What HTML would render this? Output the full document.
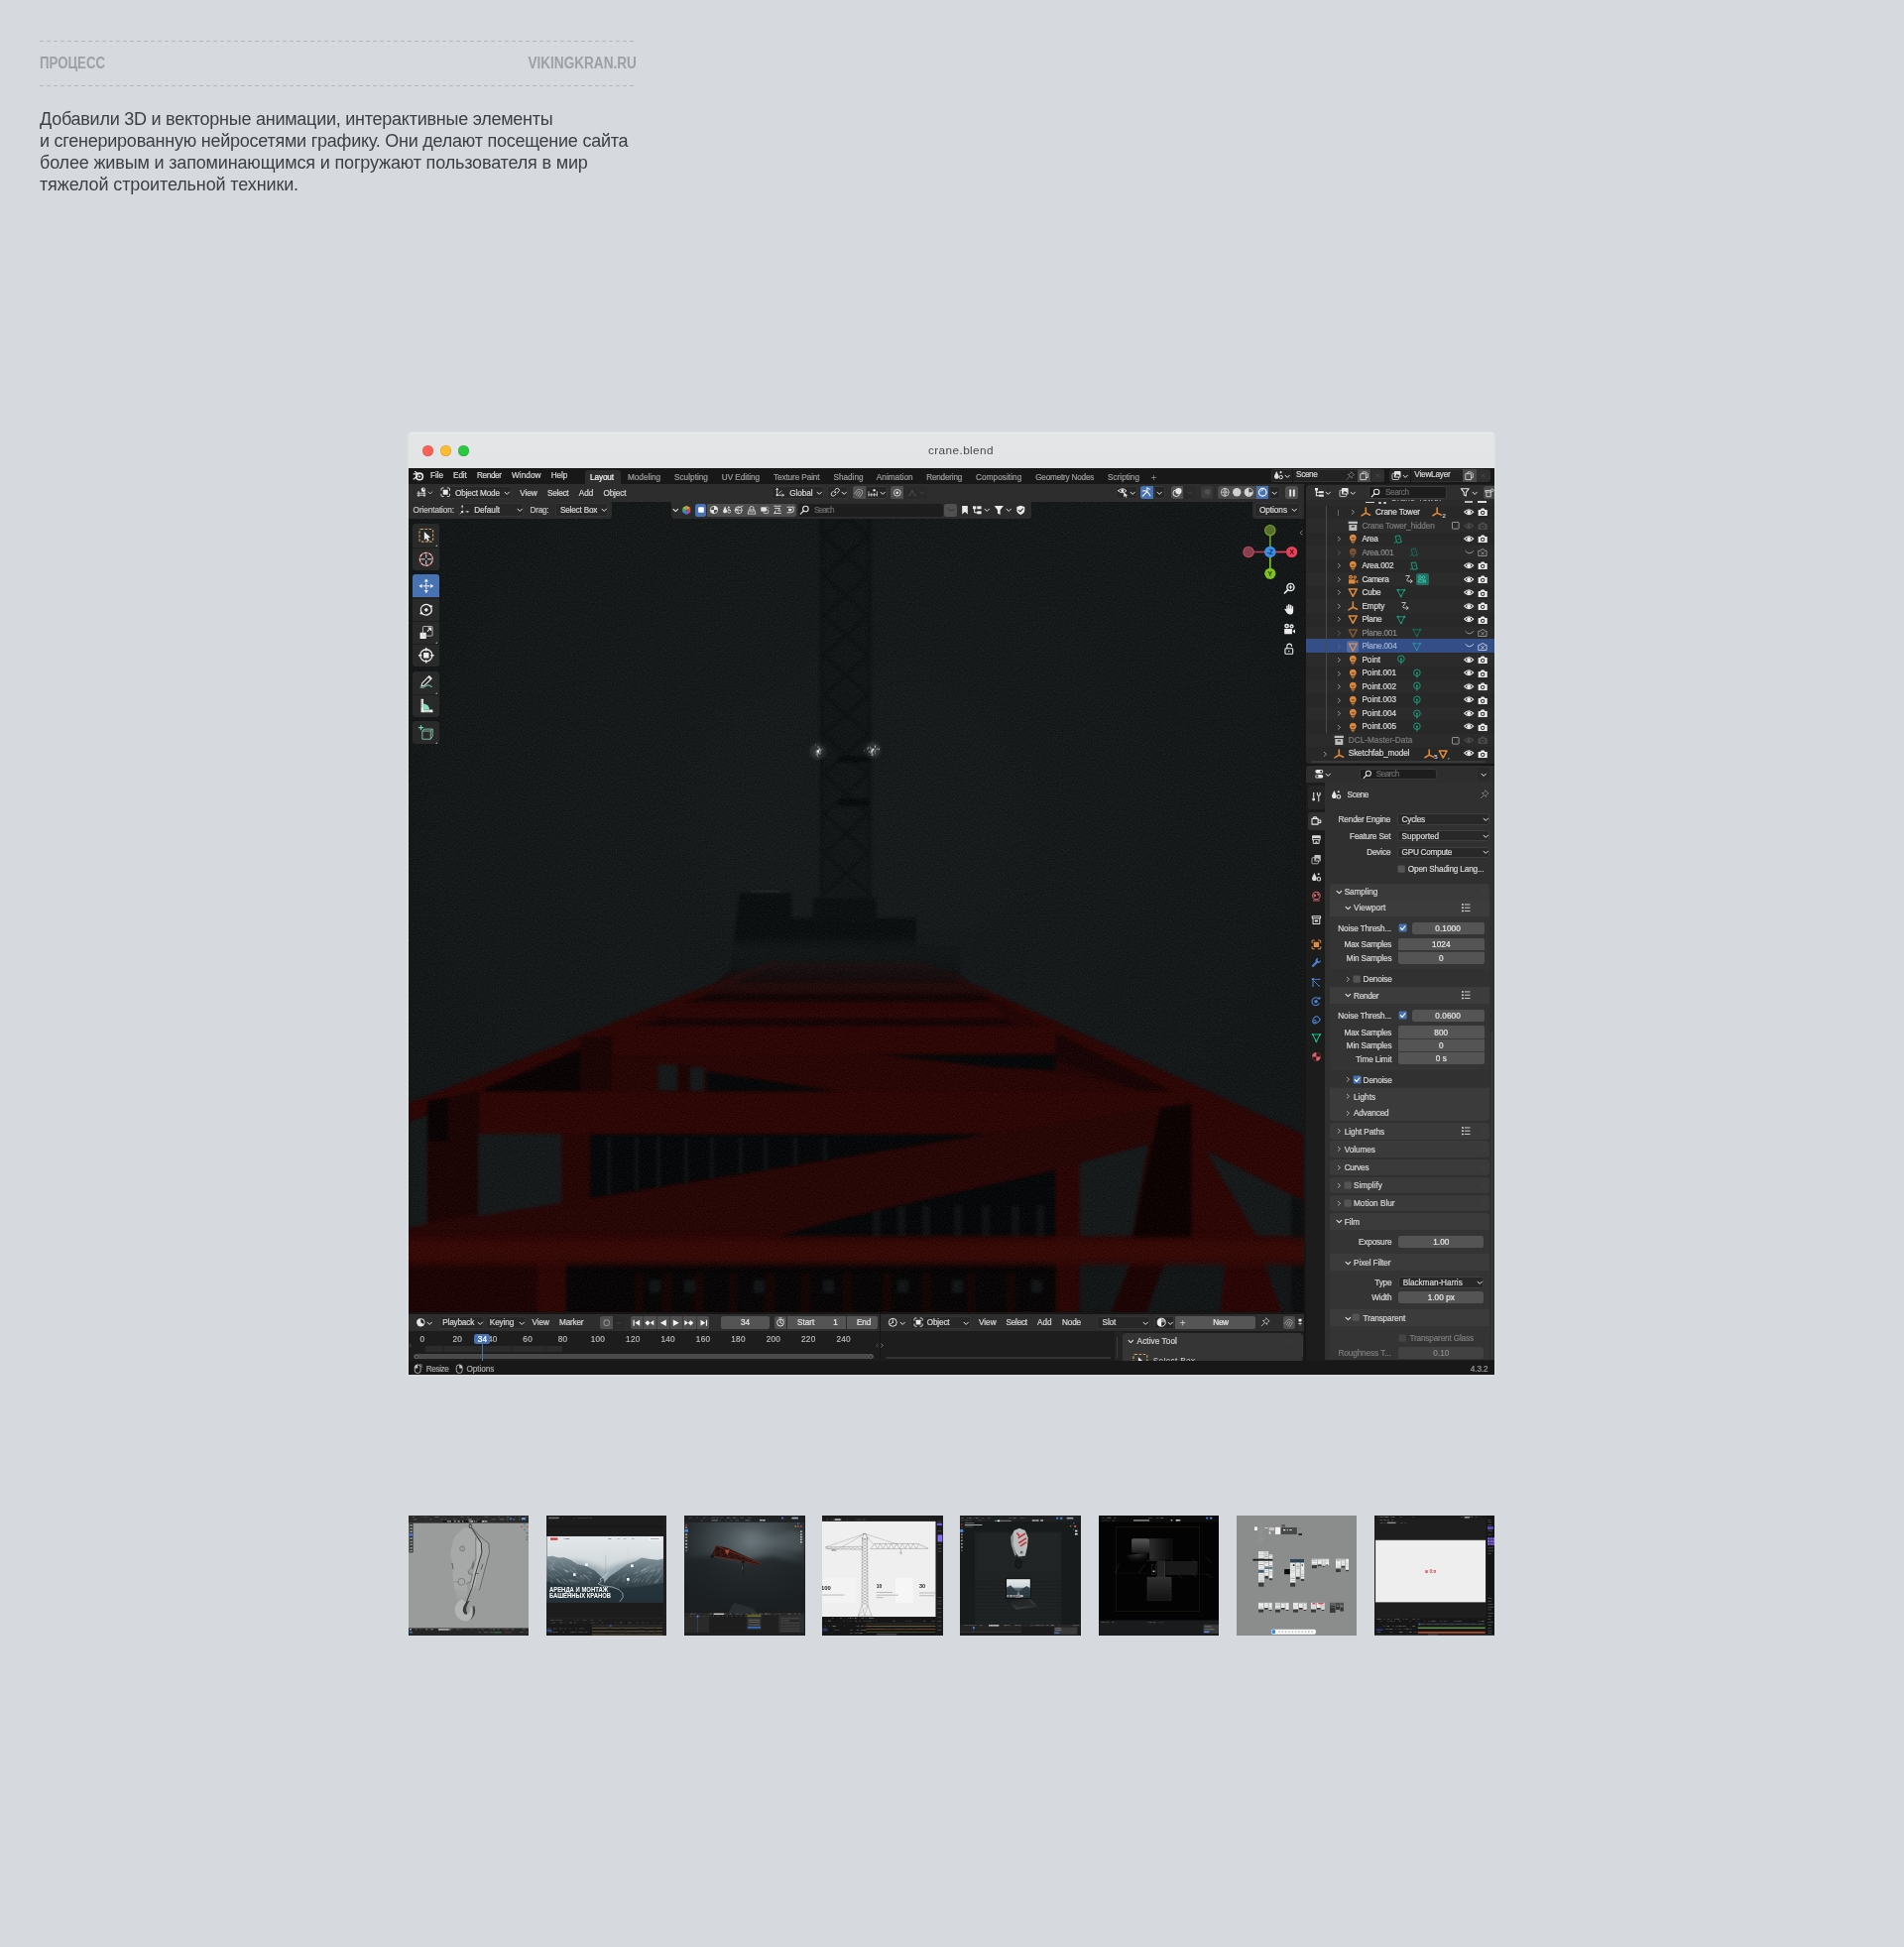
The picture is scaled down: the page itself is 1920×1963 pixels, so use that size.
<!DOCTYPE html>
<html lang="ru"><head><meta charset="utf-8"><title>Процесс</title>
<style>
html,body{margin:0;padding:0}
body{width:1920px;height:1963px;position:relative;overflow:hidden;background:#d6dade;font-family:"Liberation Sans",sans-serif;-webkit-font-smoothing:antialiased}
div,svg{box-sizing:border-box}
svg{overflow:visible;display:block}
</style></head><body>
<div style="position:absolute;left:0;top:0;width:1920px;height:1963px;will-change:transform">
<div style="position:absolute;left:40px;top:41px;width:601px;height:1px;background:repeating-linear-gradient(90deg,#b4b8bc 0 4px,transparent 4px 7px)"></div><div style="position:absolute;left:40px;top:86px;width:601px;height:1px;background:repeating-linear-gradient(90deg,#b4b8bc 0 4px,transparent 4px 7px)"></div><div style="position:absolute;left:40px;top:54px;height:20px;line-height:20px;font-size:16px;font-weight:700;color:#9da1a5;white-space:pre;transform:scaleX(0.8263);transform-origin:left center">ПРОЦЕСС</div><div style="position:absolute;right:1278.5px;top:54px;height:20px;line-height:20px;font-size:16px;font-weight:700;color:#9da1a5;white-space:pre;transform:scaleX(0.8496);transform-origin:right center">VIKINGKRAN.RU</div><div style="position:absolute;left:40px;top:108.5px;height:23.4px;line-height:23.4px;font-size:18px;letter-spacing:-0.25px;color:#3c3f43;white-space:pre;">Добавили 3D и векторные анимации, интерактивные элементы</div><div style="position:absolute;left:40px;top:130.6px;height:23.4px;line-height:23.4px;font-size:18px;letter-spacing:-0.24px;color:#3c3f43;white-space:pre;">и сгенерированную нейросетями графику. Они делают посещение сайта</div><div style="position:absolute;left:40px;top:152.7px;height:23.4px;line-height:23.4px;font-size:18px;letter-spacing:-0.16px;color:#3c3f43;white-space:pre;">более живым и запоминающимся и погружают пользователя в мир</div><div style="position:absolute;left:40px;top:174.8px;height:23.4px;line-height:23.4px;font-size:18px;letter-spacing:-0.12px;color:#3c3f43;white-space:pre;">тяжелой строительной техники.</div><div style="position:absolute;left:412px;top:436px;width:1095px;height:950px;border-radius:3px 3px 0 0;box-shadow:0 0 3px rgba(255,255,255,.4)"></div><div style="position:absolute;left:412px;top:470px;width:1095px;height:916px;background:#1d1d1d"></div><div style="position:absolute;left:412px;top:436px;width:1095px;height:36px;background:linear-gradient(#eceef0 0,#e3e5e7 1.5px,#e2e4e6 100%);border-radius:3px 3px 0 0;"></div><div style="position:absolute;left:426.1px;top:449px;width:10.8px;height:10.8px;background:#fe5f57;border-radius:5.4px;box-shadow:inset 0 0 0 .5px rgba(0,0,0,.18);"></div><div style="position:absolute;left:444.1px;top:449px;width:10.8px;height:10.8px;background:#febc2e;border-radius:5.4px;box-shadow:inset 0 0 0 .5px rgba(0,0,0,.18);"></div><div style="position:absolute;left:461.8px;top:449px;width:10.8px;height:10.8px;background:#28c840;border-radius:5.4px;box-shadow:inset 0 0 0 .5px rgba(0,0,0,.18);"></div><div style="position:absolute;left:936px;top:447.13px;height:15.34px;line-height:15.34px;font-size:11.8px;letter-spacing:0.39px;color:#4a4a4a;white-space:pre;">crane.blend</div><svg style="position:absolute;left:412px;top:488.5px;overflow:hidden" width="902.5" height="834.5" viewBox="412 488.5 902.5 834.5"><defs><filter id="b1" x="-5%" y="-5%" width="110%" height="110%"><feGaussianBlur color-interpolation-filters="sRGB" stdDeviation="1.8"/></filter><filter id="b2" x="-5%" y="-30%" width="110%" height="160%"><feGaussianBlur color-interpolation-filters="sRGB" stdDeviation="3"/></filter><filter id="b3" x="-20%" y="-20%" width="140%" height="140%"><feGaussianBlur color-interpolation-filters="sRGB" stdDeviation="6"/></filter><filter id="b4" x="-20%" y="-20%" width="140%" height="140%"><feGaussianBlur color-interpolation-filters="sRGB" stdDeviation="1.8"/></filter><filter id="gr" x="0" y="0" width="100%" height="100%" color-interpolation-filters="sRGB"><feTurbulence type="fractalNoise" baseFrequency="0.8" numOctaves="1" seed="7" result="n"/><feColorMatrix in="n" type="matrix" values="1 0 0 0 0  1 0 0 0 0  1 0 0 0 0  0 0 0 0 1" result="g"/><feComposite in="SourceGraphic" in2="g" operator="arithmetic" k1="0" k2="1" k3="0.12" k4="-0.06"/></filter><radialGradient id="vg" cx="50%" cy="40%" r="75%"><stop offset="0" stop-color="#181c1d"/><stop offset="1" stop-color="#131718"/></radialGradient><linearGradient id="fog" x1="0" y1="0" x2="0" y2="1"><stop offset="0" stop-color="#161a1b" stop-opacity="1"/><stop offset="1" stop-color="#161a1b" stop-opacity="0"/></linearGradient><clipPath id="cpA"><polygon points="595,1143 997,1143 595,1207.81" fill="#000" /><polygon points="1064.5,1179 1064.5,1246.4 770,1246.4" fill="#000" /></clipPath></defs><g filter="url(#gr)"><rect x="412" y="488.5" width="902.5" height="834.5" fill="url(#vg)"/><g filter="url(#b4)" opacity=".8"><line x1="829" y1="488" x2="829" y2="905" stroke="#0d1011" stroke-width="3.6"/><line x1="876.5" y1="488" x2="876.5" y2="905" stroke="#0d1011" stroke-width="3.6"/><rect x="829" y="488" width="47.5" height="417" fill="#101415" opacity=".6"/><path d="M831 500 L875 540 M875 500 L831 540 M831 540 L875 580 M875 540 L831 580 M831 580 L875 620 M875 580 L831 620 M831 620 L875 660 M875 620 L831 660 M831 660 L875 700 M875 660 L831 700 M831 700 L875 740 M875 700 L831 740 M831 740 L875 780 M875 740 L831 780 M831 780 L875 820 M875 780 L831 820 M831 820 L875 860 M875 820 L831 860 M831 860 L875 900 M875 860 L831 900" stroke="#0c0f10" stroke-width="2.8" fill="none"/><rect x="845" y="762" width="32" height="6" fill="#07090a"/><rect x="845" y="805" width="32" height="7" fill="#07090a"/></g><g filter="url(#b4)"><polygon points="746,900 798,900 798,925 924,925 924,954 968,954 968,985 735,985" fill="#0d1011" /><polygon points="820,905 884,905 884,930 820,930" fill="#0e1112" /></g><rect x="757" y="897.5" width="30" height="1.4" fill="#2d3133" opacity=".7"/><g filter="url(#b1)"><polygon points="790,969 932,969 1314.5,1143.45 1314.5,1323 412,1323 412,1111.7" fill="#230606" /><polygon points="735,978 962,978 978,990 722,990" fill="#170606" /><polygon points="722,990 978,990 990,1001 708,1001" fill="#260808" /><polygon points="708,1001 990,1001 1002,1009.7 683.5,1009.7" fill="#150505" /><polygon points="683.5,1009.7 1002,1009.7 1014,1026.6 668,1026.6" fill="#2b0807" /><polygon points="668,1026.6 1014,1026.6 1024,1034 650,1034" fill="#170505" /><polygon points="616,1034 1064.5,1034 1064.5,1062 616,1065" fill="#2c0706" /><polygon points="616,1065 1064.5,1062 1064.5,1070 616,1074" fill="#1a0505" /><polygon points="778,968 792,968 412,1129.7 412,1111.7" fill="#2c0706" /><polygon points="930,968 1314.5,1143.45 1314.5,1210.6 1201.6,1152.6 1196.8,1109.3 1064.5,1040" fill="#2c0706" /><polygon points="1064.5,1041 1196.8,1107 1201.6,1118 1064.5,1068" fill="#190505" /><polygon points="616,1066 881.6,1062 1064.5,1080 1196.8,1109.3 1196.8,1118 860,1101 712.5,1079.8 616,1079.8" fill="#290706" /><polygon points="484,1099.7 1196.8,1099.7 1196.8,1118 997,1143 484,1143" fill="#2c0706" /><polygon points="881.6,1062.4 1064.5,1063.5 1064.5,1079 997.6,1075" fill="#070809" /><polygon points="664,1073 683.5,1073 683.5,1099 664,1099" fill="#161a1b" /><polygon points="695.6,1075.5 710,1075.5 710,1099 695.6,1099" fill="#161a1b" /><polygon points="712.5,1079.8 845,1099.7 712.5,1099.7" fill="#070809" /><polygon points="489,1097.3 616.5,1044.3 616.5,1066 590,1078 590,1099.7 489,1099.7" fill="#0b0404" /><polygon points="585,1046 616.5,1044.3 616.5,1099.7 585,1099.7" fill="#1b0505" /><polygon points="616.5,1066 664,1066 664,1099.7 616.5,1099.7" fill="#260706" /><polygon points="683.5,1073 695.6,1073 695.6,1099.7 683.5,1099.7" fill="#1c0505" /><polygon points="595,1143 997,1143 595,1207.81" fill="#070809" /><polygon points="1064.5,1179 1064.5,1246.4 770,1246.4" fill="#070809" /><polygon points="412,1131 431,1124 431,1234 412,1237.03" fill="#161a1b" /><polygon points="482,1143 566,1143 566,1212.44 482,1225.85" fill="#161a1b" /><polygon points="1088.5,1172 1158,1153 1141.5,1246.4 1088.5,1246.4" fill="#161a1b" /><polygon points="1216,1159.8 1314.5,1210.6 1314.5,1246.4 1267.6,1246.4" fill="#161a1b" /><polygon points="1196.8,1111.7 412,1237.03 412,1250 770,1250 860,1224.7 1064.5,1179 1196.8,1140.5" fill="#280707" /><polygon points="431,1110 482,1100 482,1222 431,1230" fill="#1b0505" /><polygon points="431,1110 452,1106 452,1150 431,1150" fill="#0b0404" /><polygon points="566,1143 595,1143 595,1214 566,1218" fill="#270706" /><polygon points="1064.5,1179 1088.5,1172 1088.5,1323 1064.5,1323" fill="#2a0706" /><polygon points="1170.3,1116.5 1201.6,1113 1201.6,1248.8 1141.5,1248.8" fill="#0e0303" /><polygon points="1201.6,1140 1216,1159.8 1269,1248.8 1201.6,1248.8" fill="#2c0706" /></g><g filter="url(#b1)" clip-path="url(#cpA)"><rect x="612" y="1146" width="4" height="60" fill="#15181a" opacity=".7"/><rect x="640" y="1146" width="4" height="60" fill="#15181a" opacity=".7"/><rect x="662" y="1146" width="4" height="60" fill="#15181a" opacity=".7"/><rect x="690" y="1146" width="4" height="60" fill="#15181a" opacity=".7"/><rect x="716" y="1146" width="4" height="60" fill="#15181a" opacity=".7"/><rect x="745" y="1146" width="4" height="60" fill="#15181a" opacity=".7"/><rect x="770" y="1146" width="4" height="60" fill="#15181a" opacity=".7"/><rect x="800" y="1146" width="4" height="60" fill="#15181a" opacity=".7"/><rect x="830" y="1146" width="4" height="60" fill="#15181a" opacity=".7"/><rect x="880" y="1215" width="8" height="32" fill="#141718" opacity=".7"/><rect x="905" y="1215" width="8" height="32" fill="#141718" opacity=".7"/><rect x="930" y="1215" width="8" height="32" fill="#141718" opacity=".7"/><rect x="962" y="1215" width="8" height="32" fill="#141718" opacity=".7"/><rect x="990" y="1215" width="8" height="32" fill="#141718" opacity=".7"/><rect x="1020" y="1215" width="8" height="32" fill="#141718" opacity=".7"/><rect x="1045" y="1215" width="8" height="32" fill="#141718" opacity=".7"/></g><g filter="url(#b1)"><polygon points="571,1270 1064.5,1270 1064.5,1323 571,1323" fill="#080606" /><polygon points="1088.5,1270 1314.5,1270 1314.5,1323 1088.5,1323" fill="#131718" /><polygon points="412,1270 542,1270 542,1323 412,1323" fill="#1e0505" /><polygon points="542,1270 571,1270 571,1323 542,1323" fill="#2c0706" /><polygon points="1141.5,1270 1175,1270 1156,1323 1120,1323" fill="#1e0505" /><polygon points="1235.3,1270 1273.8,1270 1293,1323 1230.5,1323" fill="#2a0706" /><polygon points="1302.6,1205 1314.5,1211 1314.5,1323 1302.6,1323" fill="#0c0e0f" /><rect x="640" y="1283" width="9" height="40" fill="#150606"/><rect x="668" y="1283" width="9" height="40" fill="#150606"/><rect x="700" y="1283" width="9" height="40" fill="#150606"/><rect x="735" y="1283" width="9" height="40" fill="#150606"/><rect x="772" y="1283" width="9" height="40" fill="#150606"/><rect x="808" y="1283" width="9" height="40" fill="#150606"/><rect x="850" y="1283" width="9" height="40" fill="#150606"/><rect x="890" y="1283" width="9" height="40" fill="#150606"/><rect x="930" y="1283" width="9" height="40" fill="#150606"/><rect x="975" y="1283" width="9" height="40" fill="#150606"/><rect x="1015" y="1283" width="9" height="40" fill="#150606"/><rect x="655" y="1290" width="11" height="13" fill="#161a1b" opacity=".8"/><rect x="690" y="1290" width="11" height="13" fill="#161a1b" opacity=".8"/><rect x="760" y="1290" width="11" height="13" fill="#161a1b" opacity=".8"/><rect x="830" y="1290" width="11" height="13" fill="#161a1b" opacity=".8"/><rect x="905" y="1290" width="11" height="13" fill="#161a1b" opacity=".8"/><rect x="960" y="1290" width="11" height="13" fill="#161a1b" opacity=".8"/><rect x="1040" y="1290" width="11" height="13" fill="#161a1b" opacity=".8"/></g><g filter="url(#b2)"><rect x="380" y="1247.5" width="970" height="27" fill="#350a07"/></g><rect x="700" y="950" width="320" height="58" fill="url(#fog)" filter="url(#b3)"/><circle cx="824.7" cy="757" r="8" fill="#cfd6d8" opacity=".13" filter="url(#b4)"/><circle cx="824.48" cy="756.82" r="0.73" fill="#fff" opacity="0.88"/><circle cx="829.88" cy="754.66" r="0.36" fill="#fff" opacity="0.76"/><circle cx="828.64" cy="755.75" r="0.40" fill="#fff" opacity="0.76"/><circle cx="824.82" cy="761.86" r="0.57" fill="#fff" opacity="0.81"/><circle cx="825.25" cy="757.04" r="0.72" fill="#fff" opacity="0.89"/><circle cx="826.11" cy="758.87" r="0.67" fill="#fff" opacity="0.61"/><circle cx="824.60" cy="756.92" r="0.70" fill="#fff" opacity="0.64"/><circle cx="824.73" cy="757.12" r="0.74" fill="#fff" opacity="0.94"/><circle cx="823.73" cy="760.29" r="0.62" fill="#fff" opacity="0.64"/><circle cx="825.62" cy="756.70" r="0.63" fill="#fff" opacity="0.98"/><circle cx="825.44" cy="756.50" r="0.42" fill="#fff" opacity="0.62"/><circle cx="827.43" cy="758.01" r="0.47" fill="#fff" opacity="0.82"/><circle cx="826.01" cy="757.02" r="0.47" fill="#fff" opacity="0.92"/><circle cx="822.02" cy="757.28" r="0.48" fill="#fff" opacity="0.77"/><circle cx="822.34" cy="750.15" r="0.36" fill="#fff" opacity="0.89"/><circle cx="826.46" cy="754.79" r="0.36" fill="#fff" opacity="0.90"/><circle cx="824.44" cy="757.25" r="0.37" fill="#fff" opacity="0.63"/><circle cx="824.90" cy="756.95" r="0.43" fill="#fff" opacity="0.89"/><circle cx="827.26" cy="755.97" r="0.49" fill="#fff" opacity="0.79"/><circle cx="824.87" cy="756.09" r="0.39" fill="#fff" opacity="0.89"/><circle cx="824.87" cy="756.53" r="0.73" fill="#fff" opacity="0.59"/><circle cx="824.32" cy="757.50" r="0.59" fill="#fff" opacity="0.96"/><circle cx="822.73" cy="759.64" r="0.47" fill="#fff" opacity="0.69"/><circle cx="825.54" cy="758.45" r="0.38" fill="#fff" opacity="0.62"/><circle cx="823.97" cy="755.46" r="0.37" fill="#fff" opacity="0.99"/><circle cx="824.66" cy="756.99" r="0.51" fill="#fff" opacity="0.66"/><circle cx="823.31" cy="756.21" r="0.52" fill="#fff" opacity="0.58"/><circle cx="827.49" cy="755.62" r="0.36" fill="#fff" opacity="0.77"/><circle cx="826.62" cy="754.36" r="0.73" fill="#fff" opacity="0.83"/><circle cx="825.63" cy="753.77" r="0.39" fill="#fff" opacity="0.75"/><circle cx="825.61" cy="758.06" r="0.53" fill="#fff" opacity="1.00"/><circle cx="826.07" cy="755.45" r="0.74" fill="#fff" opacity="0.75"/><circle cx="824.22" cy="757.03" r="0.47" fill="#fff" opacity="0.73"/><circle cx="826.96" cy="759.53" r="0.50" fill="#fff" opacity="0.99"/><circle cx="827.32" cy="756.42" r="0.49" fill="#fff" opacity="0.59"/><circle cx="824.31" cy="759.34" r="0.66" fill="#fff" opacity="0.94"/><circle cx="823.88" cy="757.83" r="0.63" fill="#fff" opacity="0.85"/><circle cx="825.04" cy="752.29" r="0.50" fill="#fff" opacity="0.87"/><circle cx="880.2" cy="755.6" r="8" fill="#cfd6d8" opacity=".13" filter="url(#b4)"/><circle cx="879.12" cy="760.30" r="0.63" fill="#fff" opacity="0.68"/><circle cx="880.68" cy="755.46" r="0.61" fill="#fff" opacity="0.81"/><circle cx="882.59" cy="755.75" r="0.62" fill="#fff" opacity="0.76"/><circle cx="880.50" cy="755.03" r="0.61" fill="#fff" opacity="0.91"/><circle cx="878.28" cy="757.92" r="0.68" fill="#fff" opacity="0.71"/><circle cx="882.54" cy="752.59" r="0.70" fill="#fff" opacity="0.86"/><circle cx="884.00" cy="755.11" r="0.56" fill="#fff" opacity="0.62"/><circle cx="880.76" cy="754.82" r="0.72" fill="#fff" opacity="0.76"/><circle cx="879.84" cy="754.80" r="0.42" fill="#fff" opacity="0.90"/><circle cx="875.62" cy="753.43" r="0.62" fill="#fff" opacity="0.74"/><circle cx="879.68" cy="755.17" r="0.64" fill="#fff" opacity="0.56"/><circle cx="882.69" cy="758.93" r="0.53" fill="#fff" opacity="0.84"/><circle cx="880.55" cy="757.12" r="0.37" fill="#fff" opacity="0.76"/><circle cx="880.84" cy="759.20" r="0.37" fill="#fff" opacity="0.61"/><circle cx="879.83" cy="756.30" r="0.36" fill="#fff" opacity="0.76"/><circle cx="878.76" cy="756.74" r="0.59" fill="#fff" opacity="0.82"/><circle cx="880.21" cy="755.68" r="0.51" fill="#fff" opacity="0.68"/><circle cx="880.14" cy="755.63" r="0.40" fill="#fff" opacity="0.92"/><circle cx="877.09" cy="758.28" r="0.39" fill="#fff" opacity="0.80"/><circle cx="879.66" cy="756.34" r="0.58" fill="#fff" opacity="0.98"/><circle cx="882.40" cy="751.52" r="0.61" fill="#fff" opacity="0.72"/><circle cx="882.04" cy="757.55" r="0.59" fill="#fff" opacity="0.80"/><circle cx="884.47" cy="754.60" r="0.49" fill="#fff" opacity="0.95"/><circle cx="881.10" cy="755.60" r="0.39" fill="#fff" opacity="0.80"/><circle cx="877.99" cy="753.94" r="0.71" fill="#fff" opacity="0.72"/><circle cx="876.93" cy="756.87" r="0.44" fill="#fff" opacity="0.68"/><circle cx="886.23" cy="754.70" r="0.72" fill="#fff" opacity="0.82"/><circle cx="879.84" cy="760.49" r="0.74" fill="#fff" opacity="0.77"/><circle cx="876.75" cy="757.32" r="0.55" fill="#fff" opacity="0.68"/><circle cx="871.66" cy="756.66" r="0.40" fill="#fff" opacity="0.83"/><circle cx="878.76" cy="756.06" r="0.68" fill="#fff" opacity="0.56"/><circle cx="874.77" cy="754.64" r="0.46" fill="#fff" opacity="0.97"/><circle cx="880.21" cy="755.54" r="0.41" fill="#fff" opacity="0.99"/><circle cx="879.50" cy="757.73" r="0.59" fill="#fff" opacity="0.76"/><circle cx="877.55" cy="752.70" r="0.40" fill="#fff" opacity="0.89"/><circle cx="879.17" cy="758.27" r="0.56" fill="#fff" opacity="0.70"/><circle cx="879.15" cy="758.55" r="0.49" fill="#fff" opacity="0.89"/><circle cx="879.62" cy="755.28" r="0.36" fill="#fff" opacity="0.66"/></g></svg><div style="position:absolute;left:412px;top:472px;width:1095px;height:16.2px;background:#181818;"></div><svg style="position:absolute;left:415.55px;top:474.25px;" width="11.5" height="11.5" viewBox="0 0 16 16"><path d="M1.5 5.5 H8.5 M3.5 2.2 L8 5.6 M1.5 12.5 L7 8.2" fill="none" stroke="#e6e6e6" stroke-width="1.7" stroke-linecap="round" stroke-linejoin="round" /><circle cx="9.8" cy="9" r="4.6" fill="none" stroke="#e6e6e6" stroke-width="2.2"/><circle cx="9.8" cy="9" r="1.4" fill="#e6e6e6"/></svg><div style="position:absolute;left:434px;top:474.97px;height:10.66px;line-height:10.66px;font-size:8.2px;letter-spacing:-0.05px;color:#d6d6d6;white-space:pre;-webkit-text-stroke:.22px;">File</div><div style="position:absolute;left:457px;top:474.97px;height:10.66px;line-height:10.66px;font-size:8.2px;letter-spacing:-0.08px;color:#d6d6d6;white-space:pre;-webkit-text-stroke:.22px;">Edit</div><div style="position:absolute;left:481px;top:474.97px;height:10.66px;line-height:10.66px;font-size:8.2px;letter-spacing:-0.38px;color:#d6d6d6;white-space:pre;-webkit-text-stroke:.22px;">Render</div><div style="position:absolute;left:516px;top:474.97px;height:10.66px;line-height:10.66px;font-size:8.2px;letter-spacing:0.07px;color:#d6d6d6;white-space:pre;-webkit-text-stroke:.22px;">Window</div><div style="position:absolute;left:555.8px;top:474.97px;height:10.66px;line-height:10.66px;font-size:8.2px;letter-spacing:-0.14px;color:#d6d6d6;white-space:pre;-webkit-text-stroke:.22px;">Help</div><div style="position:absolute;left:589.5px;top:474.2px;width:36.5px;height:14.5px;background:#2d2d2d;border-radius:3px 3px 0 0;"></div><div style="position:absolute;left:595px;top:477.27px;height:10.66px;line-height:10.66px;font-size:8.2px;letter-spacing:-0.1px;color:#f2f2f2;white-space:pre;-webkit-text-stroke:.22px;">Layout</div><div style="position:absolute;left:633px;top:477.27px;height:10.66px;line-height:10.66px;font-size:8.2px;letter-spacing:-0.01px;color:#9c9c9c;white-space:pre;-webkit-text-stroke:.22px;">Modeling</div><div style="position:absolute;left:680px;top:477.27px;height:10.66px;line-height:10.66px;font-size:8.2px;letter-spacing:0.03px;color:#9c9c9c;white-space:pre;-webkit-text-stroke:.22px;">Sculpting</div><div style="position:absolute;left:727.8px;top:477.27px;height:10.66px;line-height:10.66px;font-size:8.2px;letter-spacing:-0.05px;color:#9c9c9c;white-space:pre;-webkit-text-stroke:.22px;">UV Editing</div><div style="position:absolute;left:780px;top:477.27px;height:10.66px;line-height:10.66px;font-size:8.2px;letter-spacing:-0.1px;color:#9c9c9c;white-space:pre;-webkit-text-stroke:.22px;">Texture Paint</div><div style="position:absolute;left:840.5px;top:477.27px;height:10.66px;line-height:10.66px;font-size:8.2px;letter-spacing:-0.01px;color:#9c9c9c;white-space:pre;-webkit-text-stroke:.22px;">Shading</div><div style="position:absolute;left:883.8px;top:477.27px;height:10.66px;line-height:10.66px;font-size:8.2px;letter-spacing:0.04px;color:#9c9c9c;white-space:pre;-webkit-text-stroke:.22px;">Animation</div><div style="position:absolute;left:934.2px;top:477.27px;height:10.66px;line-height:10.66px;font-size:8.2px;letter-spacing:-0.2px;color:#9c9c9c;white-space:pre;-webkit-text-stroke:.22px;">Rendering</div><div style="position:absolute;left:984px;top:477.27px;height:10.66px;line-height:10.66px;font-size:8.2px;letter-spacing:0.08px;color:#9c9c9c;white-space:pre;-webkit-text-stroke:.22px;">Compositing</div><div style="position:absolute;left:1044.2px;top:477.27px;height:10.66px;line-height:10.66px;font-size:8.2px;letter-spacing:-0.21px;color:#9c9c9c;white-space:pre;-webkit-text-stroke:.22px;">Geometry Nodes</div><div style="position:absolute;left:1117px;top:477.27px;height:10.66px;line-height:10.66px;font-size:8.2px;letter-spacing:0.01px;color:#9c9c9c;white-space:pre;-webkit-text-stroke:.22px;">Scripting</div><svg style="position:absolute;left:1159.8px;top:477.8px;" width="7" height="7" viewBox="0 0 16 16"><path d="M8 3 V13 M3 8 H13" fill="none" stroke="#9c9c9c" stroke-width="1.5" stroke-linecap="round" stroke-linejoin="round" /></svg><div style="position:absolute;left:1282px;top:472.8px;width:114px;height:13.6px;background:#232323;border-radius:2.5px;border:0.6px solid #333;"></div><svg style="position:absolute;left:1283.75px;top:474.15px;" width="10.5" height="10.5" viewBox="0 0 16 16"><path d="M5 1.5 L8.5 9 A3.6 3.6 0 1 1 1.5 9 Z" fill="#e0e0e0" /><circle cx="11.5" cy="3.3" r="1.6" fill="#e0e0e0"/><circle cx="11.8" cy="10.8" r="2.6" fill="none" stroke="#e0e0e0" stroke-width="1.5"/></svg><svg style="position:absolute;left:1295.1px;top:476.8px;" width="6.4" height="6.4" viewBox="0 0 16 16"><path d="M2.5 5.5 L8 11 L13.5 5.5" fill="none" stroke="#e4e4e4" stroke-width="2.5" stroke-linecap="round" stroke-linejoin="round" /></svg><div style="position:absolute;left:1302.6px;top:473.2px;width:0.7px;height:12.8px;background:#181818;"></div><div style="position:absolute;left:1307px;top:474.27px;height:10.66px;line-height:10.66px;font-size:8.2px;letter-spacing:-0.33px;color:#d6d6d6;white-space:pre;-webkit-text-stroke:.22px;">Scene</div><svg style="position:absolute;left:1357.25px;top:474.65px;" width="9.5" height="9.5" viewBox="0 0 16 16"><path d="M9.5 1.5 L14.5 6.5 L13 7 L10.5 9.5 L10.5 12 L4 5.5 L6.5 5.5 L9 3 Z M7 9 L2 14" fill="none" stroke="#8a8a8a" stroke-width="1.3" stroke-linecap="round" stroke-linejoin="round" /></svg><div style="position:absolute;left:1369px;top:473px;width:13.4px;height:13.2px;background:#4b4b4b;border-radius:0;"></div><svg style="position:absolute;left:1370.95px;top:474.75px;" width="9.5" height="9.5" viewBox="0 0 16 16"><path d="M5 4 V1.5 H11 L14 4.5 V11 H11 M2 4.5 H11 V14.5 H2 Z" fill="none" stroke="#dcdcdc" stroke-width="1.4" stroke-linecap="round" stroke-linejoin="round" /></svg><div style="position:absolute;left:1383px;top:473px;width:13px;height:13.2px;background:#303030;border-radius:0 2.5px 2.5px 0;"></div><svg style="position:absolute;left:1386px;top:476.1px;" width="7" height="7" viewBox="0 0 16 16"><path d="M4.5 4.5 L11.5 11.5 M11.5 4.5 L4.5 11.5" fill="none" stroke="#555" stroke-width="1.5" stroke-linecap="round" stroke-linejoin="round" /></svg><div style="position:absolute;left:1400.5px;top:472.8px;width:102.1px;height:13.6px;background:#232323;border-radius:2.5px;border:0.6px solid #333;"></div><svg style="position:absolute;left:1403.05px;top:474.25px;" width="10.5" height="10.5" viewBox="0 0 16 16"><rect x="1.5" y="5" width="10" height="9.5" rx="1.2" fill="none" stroke="#e0e0e0" stroke-width="1.3"/><rect x="4.5" y="1.5" width="10" height="10" rx="1.2" fill="#e0e0e0"/><path d="M6 10 L9 5.5 L10.5 8 L11.5 7 L13.5 10 Z" fill="#2b2b2b" /></svg><svg style="position:absolute;left:1414.2px;top:476.8px;" width="6.4" height="6.4" viewBox="0 0 16 16"><path d="M2.5 5.5 L8 11 L13.5 5.5" fill="none" stroke="#e4e4e4" stroke-width="2.5" stroke-linecap="round" stroke-linejoin="round" /></svg><div style="position:absolute;left:1421.6px;top:473.2px;width:0.7px;height:12.8px;background:#181818;"></div><div style="position:absolute;left:1426.3px;top:474.27px;height:10.66px;line-height:10.66px;font-size:8.2px;letter-spacing:-0.2px;color:#d6d6d6;white-space:pre;-webkit-text-stroke:.22px;">ViewLayer</div><div style="position:absolute;left:1475px;top:473px;width:13.6px;height:13.2px;background:#4b4b4b;"></div><svg style="position:absolute;left:1477.05px;top:474.75px;" width="9.5" height="9.5" viewBox="0 0 16 16"><path d="M5 4 V1.5 H11 L14 4.5 V11 H11 M2 4.5 H11 V14.5 H2 Z" fill="none" stroke="#dcdcdc" stroke-width="1.4" stroke-linecap="round" stroke-linejoin="round" /></svg><div style="position:absolute;left:1489.2px;top:473px;width:13.2px;height:13.2px;background:#303030;border-radius:0 2.5px 2.5px 0;"></div><svg style="position:absolute;left:1492.3px;top:476.1px;" width="7" height="7" viewBox="0 0 16 16"><path d="M4.5 4.5 L11.5 11.5 M11.5 4.5 L4.5 11.5" fill="none" stroke="#555" stroke-width="1.5" stroke-linecap="round" stroke-linejoin="round" /></svg><div style="position:absolute;left:412px;top:487.8px;width:902.5px;height:18.4px;background:#2d2d2d;"></div><svg style="position:absolute;left:419.5px;top:491.1px;" width="11" height="11" viewBox="0 0 16 16"><path d="M1.5 9 H13 M1.5 12 H13 M3 6.5 V14 M11.5 6.5 V14" fill="none" stroke="#e0e0e0" stroke-width="1.3" stroke-linecap="round" stroke-linejoin="round" /><circle cx="10" cy="4" r="3.2" fill="#e0e0e0"/><circle cx="11" cy="3" r="1.1" fill="#2b2b2b"/></svg><svg style="position:absolute;left:430.8px;top:494.2px;" width="5.6" height="5.6" viewBox="0 0 16 16"><path d="M2.5 5.5 L8 11 L13.5 5.5" fill="none" stroke="#ccc" stroke-width="2.5" stroke-linecap="round" stroke-linejoin="round" /></svg><div style="position:absolute;left:442.5px;top:489.8px;width:73.3px;height:13.6px;background:#272727;border-radius:2.5px;border:0.6px solid #343434;"></div><svg style="position:absolute;left:444.35px;top:491.35px;" width="10.5" height="10.5" viewBox="0 0 16 16"><rect x="4.2" y="4.2" width="7.6" height="7.6" rx="1" fill="#e8e8e8"/><path d="M1.5 5 V3 Q1.5 1.5 3 1.5 H5 M11 1.5 H13 Q14.5 1.5 14.5 3 V5 M14.5 11 V13 Q14.5 14.5 13 14.5 H11 M5 14.5 H3 Q1.5 14.5 1.5 13 V11" fill="none" stroke="#e8e8e8" stroke-width="1.4" stroke-linecap="round" stroke-linejoin="round" /></svg><div style="position:absolute;left:459px;top:492.77px;height:10.66px;line-height:10.66px;font-size:8.2px;letter-spacing:-0.14px;color:#d6d6d6;white-space:pre;-webkit-text-stroke:.22px;">Object Mode</div><svg style="position:absolute;left:508.3px;top:493.8px;" width="6.4" height="6.4" viewBox="0 0 16 16"><path d="M2.5 5.5 L8 11 L13.5 5.5" fill="none" stroke="#e4e4e4" stroke-width="2.5" stroke-linecap="round" stroke-linejoin="round" /></svg><div style="position:absolute;left:524.2px;top:492.77px;height:10.66px;line-height:10.66px;font-size:8.2px;letter-spacing:-0.01px;color:#d6d6d6;white-space:pre;-webkit-text-stroke:.22px;">View</div><div style="position:absolute;left:552px;top:492.77px;height:10.66px;line-height:10.66px;font-size:8.2px;letter-spacing:-0.23px;color:#d6d6d6;white-space:pre;-webkit-text-stroke:.22px;">Select</div><div style="position:absolute;left:583.7px;top:492.77px;height:10.66px;line-height:10.66px;font-size:8.2px;letter-spacing:0px;color:#d6d6d6;white-space:pre;-webkit-text-stroke:.22px;">Add</div><div style="position:absolute;left:608.5px;top:492.77px;height:10.66px;line-height:10.66px;font-size:8.2px;letter-spacing:-0.15px;color:#d6d6d6;white-space:pre;-webkit-text-stroke:.22px;">Object</div><div style="position:absolute;left:778px;top:489.8px;width:53px;height:13.6px;background:#272727;border-radius:2.5px;border:0.6px solid #343434;"></div><svg style="position:absolute;left:781.35px;top:491.35px;" width="10.5" height="10.5" viewBox="0 0 16 16"><path d="M4 2 V12.5 H14 M4 2 L2.5 4 M4 2 L5.5 4 M14 12.5 L12 11 M14 12.5 L12 14" fill="none" stroke="#dcdcdc" stroke-width="1.3" stroke-linecap="round" stroke-linejoin="round" /><circle cx="4" cy="12.5" r="1.7" fill="#dcdcdc"/><path d="M7 9.5 L10.5 6" fill="none" stroke="#dcdcdc" stroke-width="1.3" stroke-linecap="round" stroke-linejoin="round" /></svg><div style="position:absolute;left:796.2px;top:492.77px;height:10.66px;line-height:10.66px;font-size:8.2px;letter-spacing:-0.05px;color:#d6d6d6;white-space:pre;-webkit-text-stroke:.22px;">Global</div><svg style="position:absolute;left:823.3px;top:493.8px;" width="6.4" height="6.4" viewBox="0 0 16 16"><path d="M2.5 5.5 L8 11 L13.5 5.5" fill="none" stroke="#e4e4e4" stroke-width="2.5" stroke-linecap="round" stroke-linejoin="round" /></svg><div style="position:absolute;left:834px;top:489.8px;width:21.4px;height:13.6px;background:#272727;border-radius:2.5px;border:0.6px solid #343434;"></div><svg style="position:absolute;left:837.25px;top:491.35px;" width="10.5" height="10.5" viewBox="0 0 16 16"><path d="M7 5 L9 3 Q11.5 1 13.5 3 Q15.5 5 13 7.5 L11 9.5 M9 11 L7 13 Q4.5 15 2.5 13 Q0.5 11 3 8.5 L5 6.5" fill="none" stroke="#dcdcdc" stroke-width="1.5" stroke-linecap="round" stroke-linejoin="round" /><circle cx="8" cy="8" r="1.5" fill="#dcdcdc"/></svg><svg style="position:absolute;left:847.8px;top:493.8px;" width="6.4" height="6.4" viewBox="0 0 16 16"><path d="M2.5 5.5 L8 11 L13.5 5.5" fill="none" stroke="#e4e4e4" stroke-width="2.5" stroke-linecap="round" stroke-linejoin="round" /></svg><div style="position:absolute;left:859.8px;top:489.9px;width:12.8px;height:13.4px;background:#4f4f4f;border-radius:2.5px 0 0 2.5px;"></div><svg style="position:absolute;left:861.2px;top:491.6px;" width="10" height="10" viewBox="0 0 16 16"><path d="M3 13 V7 A5 5 0 0 1 13 7 V13 M6.3 13 V7.3 A1.7 1.7 0 0 1 9.7 7.3 V13" fill="none" stroke="#9a9a9a" stroke-width="1.5" stroke-linecap="round" stroke-linejoin="round" transform="rotate(35 8 8)"/></svg><div style="position:absolute;left:873.2px;top:489.9px;width:21.4px;height:13.4px;background:#252525;border-radius:0 2.5px 2.5px 0;border:0.6px solid #383838;"></div><svg style="position:absolute;left:874.6px;top:491.6px;" width="10" height="10" viewBox="0 0 16 16"><path d="M1.5 6 V13 M6 8.5 V13 M10.5 8.5 V13 M15 6 V13 M1.5 11 H15" fill="none" stroke="#dcdcdc" stroke-width="1.3" stroke-linecap="round" stroke-linejoin="round" /><circle cx="10.5" cy="3.5" r="1.9" fill="#dcdcdc"/></svg><svg style="position:absolute;left:886.8px;top:493.8px;" width="6.4" height="6.4" viewBox="0 0 16 16"><path d="M2.5 5.5 L8 11 L13.5 5.5" fill="none" stroke="#e4e4e4" stroke-width="2.5" stroke-linecap="round" stroke-linejoin="round" /></svg><div style="position:absolute;left:898px;top:489.9px;width:12.6px;height:13.4px;background:#4f4f4f;border-radius:2.5px 0 0 2.5px;"></div><svg style="position:absolute;left:899.5px;top:491.8px;" width="9.6" height="9.6" viewBox="0 0 16 16"><circle cx="8" cy="8" r="5.6" fill="none" stroke="#e0e0e0" stroke-width="1.5"/><circle cx="8" cy="8" r="2.3" fill="#e0e0e0"/></svg><div style="position:absolute;left:911.2px;top:489.9px;width:24px;height:13.4px;background:#2a2a2a;border-radius:0 2.5px 2.5px 0;"></div><svg style="position:absolute;left:914.7px;top:491.8px;" width="9.6" height="9.6" viewBox="0 0 16 16"><path d="M1.5 13.5 Q5 13.5 6.5 7 Q8 1 9.5 7 Q11 13.5 14.5 13.5" fill="none" stroke="#555" stroke-width="1.4" stroke-linecap="round" stroke-linejoin="round" /></svg><svg style="position:absolute;left:926.7px;top:494.2px;" width="5.6" height="5.6" viewBox="0 0 16 16"><path d="M2.5 5.5 L8 11 L13.5 5.5" fill="none" stroke="#4a4a4a" stroke-width="2.5" stroke-linecap="round" stroke-linejoin="round" /></svg><div style="position:absolute;left:1124.5px;top:489.8px;width:22px;height:13.6px;background:#272727;border-radius:2.5px;border:0.6px solid #343434;"></div><svg style="position:absolute;left:1126.9px;top:491.1px;" width="11" height="11" viewBox="0 0 16 16"><path d="M1 5.5 Q7 -0.5 13 5.5 Q7 11.5 1 5.5 Z" fill="none" stroke="#e6e6e6" stroke-width="1.4" stroke-linecap="round" stroke-linejoin="round" /><circle cx="7" cy="5.5" r="2.1" fill="#e6e6e6"/><path d="M9 8 L9 15 L11 13.2 L12.4 15.8 L13.6 15.2 L12.3 12.7 L15 12.5 Z" fill="#e6e6e6" /></svg><svg style="position:absolute;left:1138.8px;top:493.8px;" width="6.4" height="6.4" viewBox="0 0 16 16"><path d="M2.5 5.5 L8 11 L13.5 5.5" fill="none" stroke="#e4e4e4" stroke-width="2.5" stroke-linecap="round" stroke-linejoin="round" /></svg><div style="position:absolute;left:1150px;top:489.9px;width:13.2px;height:13.4px;background:#4772b3;border-radius:2.5px 0 0 2.5px;"></div><svg style="position:absolute;left:1151.35px;top:491.35px;" width="10.5" height="10.5" viewBox="0 0 16 16"><path d="M2 14 L9 7 M9 7 V1.5 M2 6 Q9 4 13.5 13.5" fill="none" stroke="#fff" stroke-width="1.6" stroke-linecap="round" stroke-linejoin="round" /><path d="M9 1.5 L13 3.5" fill="none" stroke="#fff" stroke-width="1.4" stroke-linecap="round" stroke-linejoin="round" /></svg><div style="position:absolute;left:1163.8px;top:489.9px;width:11px;height:13.4px;background:#252525;border-radius:0 2.5px 2.5px 0;border:0.6px solid #383838;"></div><svg style="position:absolute;left:1166.2px;top:493.8px;" width="6.4" height="6.4" viewBox="0 0 16 16"><path d="M2.5 5.5 L8 11 L13.5 5.5" fill="none" stroke="#e4e4e4" stroke-width="2.5" stroke-linecap="round" stroke-linejoin="round" /></svg><div style="position:absolute;left:1180.6px;top:489.9px;width:12.8px;height:13.4px;background:#4f4f4f;border-radius:2.5px 0 0 2.5px;"></div><svg style="position:absolute;left:1181.75px;top:491.35px;" width="10.5" height="10.5" viewBox="0 0 16 16"><circle cx="6.5" cy="9.5" r="5" fill="none" stroke="#e6e6e6" stroke-width="1.5"/><circle cx="9.8" cy="6.2" r="4.8" fill="#e6e6e6"/></svg><div style="position:absolute;left:1194px;top:489.9px;width:11px;height:13.4px;background:#2a2a2a;border-radius:0 2.5px 2.5px 0;"></div><svg style="position:absolute;left:1196.8px;top:494.2px;" width="5.6" height="5.6" viewBox="0 0 16 16"><path d="M2.5 5.5 L8 11 L13.5 5.5" fill="none" stroke="#4a4a4a" stroke-width="2.5" stroke-linecap="round" stroke-linejoin="round" /></svg><div style="position:absolute;left:1210.6px;top:489.9px;width:12.4px;height:13.4px;background:#383838;border-radius:2.5px;"></div><svg style="position:absolute;left:1212px;top:491.8px;" width="9.6" height="9.6" viewBox="0 0 16 16"><rect x="2" y="5" width="9" height="9" rx="1" fill="none" stroke="#4e4e4e" stroke-width="1.3"/><rect x="5" y="2" width="9" height="9" rx="1" fill="#4e4e4e"/></svg><div style="position:absolute;left:1228.4px;top:489.9px;width:38.4px;height:13.4px;background:#4a4a4a;border-radius:2.5px 0 0 2.5px;"></div><svg style="position:absolute;left:1229.55px;top:491.35px;" width="10.5" height="10.5" viewBox="0 0 16 16"><circle cx="8" cy="8" r="6" fill="none" stroke="#d0d0d0" stroke-width="1.3"/><path d="M2 8 H14 M8 2 V14 M8 2 Q3.5 8 8 14 M8 2 Q12.5 8 8 14" fill="none" stroke="#d0d0d0" stroke-width="1" stroke-linecap="round" stroke-linejoin="round" /></svg><svg style="position:absolute;left:1241.75px;top:491.35px;" width="10.5" height="10.5" viewBox="0 0 16 16"><circle cx="8" cy="8" r="6.4" fill="#cfcfcf"/></svg><svg style="position:absolute;left:1254.35px;top:491.35px;" width="10.5" height="10.5" viewBox="0 0 16 16"><circle cx="8" cy="8" r="6.4" fill="none" stroke="#d6d6d6" stroke-width="1.2"/><path d="M8 1.6 A6.4 6.4 0 0 0 8 14.4 Z" fill="#d6d6d6" /><path d="M8 8 H14.4 A6.4 6.4 0 0 1 8 14.4 Z" fill="#d6d6d6" /></svg><div style="position:absolute;left:1266.8px;top:489.9px;width:12.6px;height:13.4px;background:#4772b3;"></div><svg style="position:absolute;left:1267.75px;top:491.35px;" width="10.5" height="10.5" viewBox="0 0 16 16"><circle cx="8" cy="8" r="5.8" fill="none" stroke="#fff" stroke-width="1.8"/><path d="M4.8 6.5 Q6 4.2 8.5 4.2" fill="none" stroke="#fff" stroke-width="1.3" stroke-linecap="round" stroke-linejoin="round" /></svg><div style="position:absolute;left:1280px;top:489.9px;width:11px;height:13.4px;background:#252525;border-radius:0 2.5px 2.5px 0;border:0.6px solid #383838;"></div><svg style="position:absolute;left:1282.4px;top:493.8px;" width="6.4" height="6.4" viewBox="0 0 16 16"><path d="M2.5 5.5 L8 11 L13.5 5.5" fill="none" stroke="#e4e4e4" stroke-width="2.5" stroke-linecap="round" stroke-linejoin="round" /></svg><div style="position:absolute;left:1295.8px;top:489.9px;width:13.4px;height:13.4px;background:#505050;border-radius:2.5px;"></div><svg style="position:absolute;left:1297.5px;top:491.6px;" width="10" height="10" viewBox="0 0 16 16"><rect x="3.6" y="2.5" width="3" height="11" rx="0.5" fill="#e8e8e8"/><rect x="9.4" y="2.5" width="3" height="11" rx="0.5" fill="#e8e8e8"/></svg><div style="position:absolute;left:412px;top:505.7px;width:205px;height:17.6px;background:rgba(45,45,45,.96);border-radius:0 0 3px 0;"></div><div style="position:absolute;left:416.6px;top:510.37px;height:10.66px;line-height:10.66px;font-size:8.2px;letter-spacing:-0.08px;color:#c4c4c4;white-space:pre;-webkit-text-stroke:.22px;">Orientation:</div><div style="position:absolute;left:462px;top:507.4px;width:65.6px;height:13.6px;background:#272727;border-radius:2.5px;border:0.6px solid #343434;"></div><svg style="position:absolute;left:463.3px;top:509.2px;" width="10" height="10" viewBox="0 0 16 16"><path d="M5 1.5 V5 M11 11 H14.5 M3.2 12.8 L1.5 14.5" fill="none" stroke="#dcdcdc" stroke-width="1.2" stroke-linecap="round" stroke-linejoin="round" /><circle cx="5" cy="11" r="2" fill="#dcdcdc"/><path d="M5 1.5 L4 3 M5 1.5 L6 3 M14.5 11 L13 10 M14.5 11 L13 12" fill="none" stroke="#dcdcdc" stroke-width="1" stroke-linecap="round" stroke-linejoin="round" /></svg><div style="position:absolute;left:478.2px;top:510.37px;height:10.66px;line-height:10.66px;font-size:8.2px;letter-spacing:-0.03px;color:#d6d6d6;white-space:pre;-webkit-text-stroke:.22px;">Default</div><svg style="position:absolute;left:520.6px;top:511.4px;" width="6.4" height="6.4" viewBox="0 0 16 16"><path d="M2.5 5.5 L8 11 L13.5 5.5" fill="none" stroke="#e4e4e4" stroke-width="2.5" stroke-linecap="round" stroke-linejoin="round" /></svg><div style="position:absolute;left:534.6px;top:510.37px;height:10.66px;line-height:10.66px;font-size:8.2px;letter-spacing:-0.29px;color:#c4c4c4;white-space:pre;-webkit-text-stroke:.22px;">Drag:</div><div style="position:absolute;left:560px;top:507.4px;width:53.2px;height:13.6px;background:#272727;border-radius:2.5px;border:0.6px solid #343434;"></div><div style="position:absolute;left:565px;top:510.37px;height:10.66px;line-height:10.66px;font-size:8.2px;letter-spacing:-0.2px;color:#d6d6d6;white-space:pre;-webkit-text-stroke:.22px;">Select Box</div><svg style="position:absolute;left:605.8px;top:511.4px;" width="6.4" height="6.4" viewBox="0 0 16 16"><path d="M2.5 5.5 L8 11 L13.5 5.5" fill="none" stroke="#e4e4e4" stroke-width="2.5" stroke-linecap="round" stroke-linejoin="round" /></svg><div style="position:absolute;left:677px;top:505.7px;width:363px;height:17.6px;background:rgba(45,45,45,.96);border-radius:0 0 3px 3px;"></div><svg style="position:absolute;left:677.7px;top:511.1px;" width="6.6" height="6.6" viewBox="0 0 16 16"><path d="M2.5 5.5 L8 11 L13.5 5.5" fill="none" stroke="#e4e4e4" stroke-width="2.5" stroke-linecap="round" stroke-linejoin="round" /></svg><svg style="position:absolute;left:686.5px;top:508.9px;" width="10.6" height="10.6" viewBox="0 0 16 16"><path d="M8 1 L14 4.5 L8 8 Z" fill="#e8a33d"/><path d="M14 4.5 V11.5 L8 8 Z" fill="#d9514e"/><path d="M14 11.5 L8 15 V8 Z" fill="#b34fc0"/><path d="M8 15 L2 11.5 L8 8 Z" fill="#3f7ee0"/><path d="M2 11.5 V4.5 L8 8 Z" fill="#3fb86b"/><path d="M2 4.5 L8 1 V8 Z" fill="#9dc33c"/></svg><div style="position:absolute;left:701.4px;top:507.6px;width:10.8px;height:13.2px;background:#4772b3;border-radius:2.5px;"></div><svg style="position:absolute;left:701.8px;top:509.2px;" width="10" height="10" viewBox="0 0 16 16"><rect x="3.5" y="3.5" width="9" height="9" rx="1.5" fill="#fff"/></svg><div style="position:absolute;left:712.6px;top:507.6px;width:90px;height:13.2px;background:#4c4c4c;border-radius:0 2.5px 2.5px 0;"></div><svg style="position:absolute;left:714.6px;top:509.2px;" width="10" height="10" viewBox="0 0 16 16"><circle cx="8" cy="8" r="6" fill="none" stroke="#e2e2e2" stroke-width="1.3"/><path d="M8 2 A6 6 0 0 1 14 8 H8 Z M8 14 A6 6 0 0 1 2 8 H8 Z" fill="#e2e2e2" /></svg><svg style="position:absolute;left:727.5px;top:509.2px;" width="10" height="10" viewBox="0 0 16 16"><path d="M5 2 L8 9 A3.2 3.2 0 1 1 2 9 Z" fill="#e2e2e2" /><circle cx="11" cy="4" r="1.5" fill="#e2e2e2"/><circle cx="11.5" cy="10.5" r="2.4" fill="none" stroke="#e2e2e2" stroke-width="1.3"/><path d="M9 6 L14 9" fill="none" stroke="#e2e2e2" stroke-width="1.2" stroke-linecap="round" stroke-linejoin="round" /></svg><svg style="position:absolute;left:740.4px;top:509.2px;" width="10" height="10" viewBox="0 0 16 16"><circle cx="7.5" cy="8.5" r="5.6" fill="none" stroke="#e2e2e2" stroke-width="1.3"/><path d="M2 8.5 H13 M7.5 3 Q4 8.5 7.5 14 M9 4 L14.5 2" fill="none" stroke="#e2e2e2" stroke-width="1.1" stroke-linecap="round" stroke-linejoin="round" /><path d="M4 5 Q7 6 6 9 Q4 9.5 3 8 Z" fill="#e2e2e2" /></svg><svg style="position:absolute;left:753.3px;top:509.2px;" width="10" height="10" viewBox="0 0 16 16"><path d="M5 8 V3.5 Q8 1.5 11 3.5 V8 M2 14 L3.5 8 H12.5 L14 14 Z M5 11 H11" fill="none" stroke="#e2e2e2" stroke-width="1.3" stroke-linecap="round" stroke-linejoin="round" /></svg><svg style="position:absolute;left:766.2px;top:509.2px;" width="10" height="10" viewBox="0 0 16 16"><rect x="2" y="3.5" width="9" height="7" rx="1" fill="#e2e2e2"/><rect x="6.5" y="8" width="7.5" height="5.5" rx="1" fill="none" stroke="#e2e2e2" stroke-width="1.2"/><path d="M12 3 L14.5 5.5" fill="none" stroke="#e2e2e2" stroke-width="1.2" stroke-linecap="round" stroke-linejoin="round" /></svg><svg style="position:absolute;left:779.1px;top:509.2px;" width="10" height="10" viewBox="0 0 16 16"><path d="M3 2 H13 M4 5.5 H12 L9 9.5 H13 M2.5 13.5 H13.5 M5 9.5 L3.5 13.5" fill="none" stroke="#e2e2e2" stroke-width="1.4" stroke-linecap="round" stroke-linejoin="round" /></svg><svg style="position:absolute;left:792px;top:509.2px;" width="10" height="10" viewBox="0 0 16 16"><path d="M3 3.5 H9 Q13.5 3.5 13.5 8 Q13.5 12.5 9 12.5 H3" fill="none" stroke="#e2e2e2" stroke-width="1.4" stroke-linecap="round" stroke-linejoin="round" /><rect x="5" y="6" width="5" height="4" rx="0.8" fill="#e2e2e2"/><path d="M12 2 L14.5 4.5" fill="none" stroke="#e2e2e2" stroke-width="1.1" stroke-linecap="round" stroke-linejoin="round" /></svg><svg style="position:absolute;left:806.4px;top:509px;" width="10.4" height="10.4" viewBox="0 0 16 16"><circle cx="9.8" cy="6.2" r="4.3" fill="none" stroke="#e0e0e0" stroke-width="1.7"/><path d="M6.6 9.4 L2 14" fill="none" stroke="#e0e0e0" stroke-width="2" stroke-linecap="round" stroke-linejoin="round" /></svg><div style="position:absolute;left:805px;top:507.6px;width:146px;height:13.2px;background:#1d1d1d;border-radius:2.5px;"></div><svg style="position:absolute;left:806.4px;top:509px;" width="10.4" height="10.4" viewBox="0 0 16 16"><circle cx="9.8" cy="6.2" r="4.3" fill="none" stroke="#e0e0e0" stroke-width="1.7"/><path d="M6.6 9.4 L2 14" fill="none" stroke="#e0e0e0" stroke-width="2" stroke-linecap="round" stroke-linejoin="round" /></svg><div style="position:absolute;left:821px;top:510.37px;height:10.66px;line-height:10.66px;font-size:8.2px;letter-spacing:-1.06px;color:#6a6a6a;white-space:pre;-webkit-text-stroke:.22px;">Search</div><div style="position:absolute;left:952.4px;top:507.6px;width:12.8px;height:13.2px;background:#505050;border-radius:2.5px;"></div><svg style="position:absolute;left:954.8px;top:509.6px;" width="8" height="8" viewBox="0 0 16 16"><path d="M1.5 6 Q8 14 14.5 6" fill="none" stroke="#2d2d2d" stroke-width="1.6" stroke-linecap="round" stroke-linejoin="round" /></svg><svg style="position:absolute;left:967.5px;top:509.2px;" width="10" height="10" viewBox="0 0 16 16"><path d="M3.5 1.5 H12.5 V15 L8 11 L3.5 15 Z" fill="#eaeaea" /></svg><svg style="position:absolute;left:980.3px;top:508.9px;" width="10.6" height="10.6" viewBox="0 0 16 16"><rect x="1.5" y="2" width="5" height="4.4" rx="0" fill="#eaeaea"/><rect x="8" y="2" width="6.5" height="4.4" rx="0" fill="#eaeaea"/><rect x="8" y="9.6" width="6.5" height="4.4" rx="0" fill="#eaeaea"/><path d="M4 6.4 V11.8 H8" fill="none" stroke="#eaeaea" stroke-width="1.5" stroke-linecap="round" stroke-linejoin="round" /></svg><svg style="position:absolute;left:992.4px;top:511.4px;" width="6.4" height="6.4" viewBox="0 0 16 16"><path d="M2.5 5.5 L8 11 L13.5 5.5" fill="none" stroke="#e4e4e4" stroke-width="2.5" stroke-linecap="round" stroke-linejoin="round" /></svg><svg style="position:absolute;left:1001.9px;top:508.9px;" width="10.6" height="10.6" viewBox="0 0 16 16"><path d="M1 1.5 H15 L10 8 V15 L6 13 V8 Z" fill="#eaeaea" /></svg><svg style="position:absolute;left:1014px;top:511.4px;" width="6.4" height="6.4" viewBox="0 0 16 16"><path d="M2.5 5.5 L8 11 L13.5 5.5" fill="none" stroke="#e4e4e4" stroke-width="2.5" stroke-linecap="round" stroke-linejoin="round" /></svg><svg style="position:absolute;left:1023.7px;top:508.9px;" width="10.6" height="10.6" viewBox="0 0 16 16"><path d="M8 1 L14 3.2 V8 Q14 12.5 8 15.2 Q2 12.5 2 8 V3.2 Z" fill="#eaeaea" /><path d="M5 8 L7.3 10.3 L11.2 5.8" fill="none" stroke="#2b2b2b" stroke-width="1.6" stroke-linecap="round" stroke-linejoin="round" /></svg><div style="position:absolute;left:1262.5px;top:505.7px;width:52px;height:17.6px;background:rgba(45,45,45,.96);border-radius:0 0 0 3px;"></div><div style="position:absolute;left:1265px;top:507.4px;width:46px;height:13.6px;background:#272727;border-radius:2.5px;border:0.6px solid #343434;"></div><div style="position:absolute;left:1270px;top:510.37px;height:10.66px;line-height:10.66px;font-size:8.2px;letter-spacing:-0.04px;color:#d6d6d6;white-space:pre;-webkit-text-stroke:.22px;">Options</div><svg style="position:absolute;left:1302.2px;top:511.4px;" width="6.4" height="6.4" viewBox="0 0 16 16"><path d="M2.5 5.5 L8 11 L13.5 5.5" fill="none" stroke="#e4e4e4" stroke-width="2.5" stroke-linecap="round" stroke-linejoin="round" /></svg><div style="position:absolute;left:416.4px;top:528.4px;width:26.4px;height:46.6px;background:rgba(43,43,43,.92);border-radius:3px;"></div><div style="position:absolute;left:416.4px;top:579px;width:26.4px;height:93.4px;background:rgba(43,43,43,.92);border-radius:3px;"></div><div style="position:absolute;left:416.4px;top:676.6px;width:26.4px;height:46.6px;background:rgba(43,43,43,.92);border-radius:3px;"></div><div style="position:absolute;left:416.4px;top:727.2px;width:26.4px;height:23px;background:rgba(43,43,43,.92);border-radius:3px;"></div><svg style="position:absolute;left:421.8px;top:531.9px;" width="15.6" height="15.6" viewBox="0 0 16 16"><rect x="1" y="1.5" width="14" height="13" rx="1.6" fill="none" stroke="#cfa65e" stroke-width="1.15" stroke-dasharray="2.6 1.5"/><path d="M6 4.2 L6 12.8 L8.1 11 L9.6 14 L11.1 13.3 L9.6 10.4 L12.4 10.2 Z" fill="#ececec" /></svg><svg style="position:absolute;left:421.8px;top:555.6px;" width="15.6" height="15.6" viewBox="0 0 16 16"><circle cx="8" cy="8" r="6.7" fill="none" stroke="#e8e8e8" stroke-width="1.2"/><circle cx="8" cy="8" r="6.7" fill="none" stroke="#c8424a" stroke-width="1.2" stroke-dasharray="2.6 2.66"/><path d="M8 3 V6.3 M8 9.7 V13 M3 8 H6.3 M9.7 8 H13" fill="none" stroke="#ececec" stroke-width="1" stroke-linecap="round" stroke-linejoin="round" /></svg><div style="position:absolute;left:416.4px;top:579px;width:26.4px;height:23.4px;background:#4772b3;border-radius:3px 3px 0 0;"></div><svg style="position:absolute;left:421.8px;top:582.8px;" width="15.6" height="15.6" viewBox="0 0 16 16"><path d="M8 1.5 V14.5 M1.5 8 H14.5" fill="none" stroke="#ececec" stroke-width="1.2" stroke-linecap="round" stroke-linejoin="round" stroke-dasharray="2.2 1.6"/><path d="M8 0.5 L10.2 3.6 H5.8 Z M8 15.5 L10.2 12.4 H5.8 Z M0.5 8 L3.6 5.8 V10.2 Z M15.5 8 L12.4 5.8 V10.2 Z" fill="#ececec" /></svg><svg style="position:absolute;left:421.8px;top:606.6px;" width="15.6" height="15.6" viewBox="0 0 16 16"><path d="M2.6 9.6 A5.6 5.6 0 0 1 12.8 5.2 M13.4 6.6 A5.6 5.6 0 0 1 3.2 10.8" fill="none" stroke="#ececec" stroke-width="1.3" stroke-linecap="round" stroke-linejoin="round" /><path d="M11.2 3 L14.8 3.8 L13 7 Z M4.8 13 L1.2 12.2 L3 9 Z" fill="#ececec" /><path d="M8 5.8 L10.2 8 L8 10.2 L5.8 8 Z" fill="#ececec" /></svg><svg style="position:absolute;left:421.8px;top:629.7px;" width="15.6" height="15.6" viewBox="0 0 16 16"><rect x="1.6" y="8" width="6.4" height="6.4" rx="0.6" fill="#ececec"/><rect x="4.6" y="1.6" width="9.8" height="9.8" rx="0.6" fill="none" stroke="#c8c8c8" stroke-width="0.9"/><path d="M9.4 6.6 L12.6 3.4 M10.4 3.2 H12.8 V5.6" fill="none" stroke="#ececec" stroke-width="1.1" stroke-linecap="round" stroke-linejoin="round" /></svg><svg style="position:absolute;left:421.8px;top:653.2px;" width="15.6" height="15.6" viewBox="0 0 16 16"><circle cx="8" cy="8" r="6.2" fill="none" stroke="#ececec" stroke-width="1.3"/><rect x="5.2" y="5.2" width="5.6" height="5.6" rx="0.6" fill="#ececec"/><path d="M8 0.5 V3 M8 13 V15.5 M0.5 8 H3 M13 8 H15.5" fill="none" stroke="#ececec" stroke-width="1.4" stroke-linecap="round" stroke-linejoin="round" /></svg><svg style="position:absolute;left:421.8px;top:680.2px;" width="15.6" height="15.6" viewBox="0 0 16 16"><path d="M11 1.6 L13.6 4.2 L6 11.6 L3 12.4 L3.8 9.2 Z" fill="none" stroke="#ececec" stroke-width="1.1" stroke-linecap="round" stroke-linejoin="round" /><path d="M11 1.6 L13.6 4.2 L12.4 5.4 L9.8 2.8 Z" fill="#ececec" /><path d="M1.5 13.2 Q4.5 14.8 7.5 12.2 Q10.5 9.8 14.2 13.2" fill="none" stroke="#62b898" stroke-width="1.1"/></svg><svg style="position:absolute;left:421.8px;top:703.8px;" width="15.6" height="15.6" viewBox="0 0 16 16"><path d="M2.6 0.8 H5.2 V11.8 H14.8 V14.6 H2.6 Z" fill="#ececec" /><path d="M5.2 11.8 V5.6 A6.2 6.2 0 0 1 11.4 11.8 Z" fill="#7fe0b8"/><path d="M2.6 3 H4 M2.6 5 H4 M2.6 7 H4 M2.6 9 H4 M7 13.4 V14.6 M9 13.4 V14.6 M11 13.4 V14.6" fill="none" stroke="#555" stroke-width="0.5" stroke-linecap="round" stroke-linejoin="round" /></svg><svg style="position:absolute;left:421.8px;top:730.8px;" width="15.6" height="15.6" viewBox="0 0 16 16"><path d="M4 6.2 L6 4.2 H14.6 V11.6 L12.6 14.6 H4 Z M4 6.2 H12.6 V14.6 M12.6 6.2 L14.6 4.2" fill="none" stroke="#86bda8" stroke-width="1" stroke-linejoin="round"/><path d="M2.6 0.6 V4.8 M0.5 2.7 H4.7" fill="none" stroke="#6fd0aa" stroke-width="1.3" stroke-linecap="round" stroke-linejoin="round" /></svg><div style="position:absolute;left:416.4px;top:551.7px;width:26.4px;height:0.7px;background:#1e1e1e;"></div><div style="position:absolute;left:416.4px;top:602.6px;width:26.4px;height:0.7px;background:#1e1e1e;"></div><div style="position:absolute;left:416.4px;top:625.9px;width:26.4px;height:0.7px;background:#1e1e1e;"></div><div style="position:absolute;left:416.4px;top:649.2px;width:26.4px;height:0.7px;background:#1e1e1e;"></div><div style="position:absolute;left:416.4px;top:699.8px;width:26.4px;height:0.7px;background:#1e1e1e;"></div><div style="position:absolute;left:439px;top:549px;width:0;height:0;border-left:2.4px solid transparent;border-bottom:2.4px solid #9a9a9a"></div><div style="position:absolute;left:439px;top:647px;width:0;height:0;border-left:2.4px solid transparent;border-bottom:2.4px solid #9a9a9a"></div><div style="position:absolute;left:439px;top:697.6px;width:0;height:0;border-left:2.4px solid transparent;border-bottom:2.4px solid #9a9a9a"></div><div style="position:absolute;left:439px;top:748.4px;width:0;height:0;border-left:2.4px solid transparent;border-bottom:2.4px solid #9a9a9a"></div><svg style="position:absolute;left:0;top:0" width="1920" height="700" viewBox="0 0 1920 700"><line x1="1280.8" y1="556.5" x2="1280.8" y2="534.7" stroke="#6c9a25" stroke-width="1.7"/><line x1="1280.8" y1="556.5" x2="1280.8" y2="578.3" stroke="#7fc31c" stroke-width="1.7"/><line x1="1280.8" y1="556.5" x2="1259.0" y2="556.5" stroke="#b03a4c" stroke-width="1.7"/><line x1="1280.8" y1="556.5" x2="1302.6" y2="556.5" stroke="#e8415a" stroke-width="1.7"/><circle cx="1280.8" cy="534.7" r="5.2" fill="#566f2e" stroke="#79a62a" stroke-width="1.1"/><circle cx="1259.0" cy="556.5" r="5.2" fill="#864050" stroke="#c4495b" stroke-width="1.1"/><circle cx="1280.8" cy="578.3" r="5.6" fill="#7fc31c"/><circle cx="1302.6" cy="556.5" r="5.6" fill="#e8415a"/><circle cx="1280.8" cy="556.5" r="5.8" fill="#3a8ee6"/><text x="1302.6" y="559.1" font-size="7.4" font-weight="700" text-anchor="middle" fill="#4a0d18" font-family="Liberation Sans, sans-serif">X</text><text x="1280.8" y="580.9" font-size="7.4" font-weight="700" text-anchor="middle" fill="#2c4a06" font-family="Liberation Sans, sans-serif">Y</text><text x="1280.8" y="558.9" font-size="6.6" font-weight="700" text-anchor="middle" fill="#0d2f55" font-family="Liberation Sans, sans-serif">-Z</text></svg><svg style="position:absolute;left:1293.8px;top:587px;" width="12.4" height="12.4" viewBox="0 0 16 16"><circle cx="9.6" cy="6.4" r="4.6" fill="none" stroke="#ececec" stroke-width="1.8"/><path d="M6.2 9.8 L1.8 14.2" fill="none" stroke="#ececec" stroke-width="2.2" stroke-linecap="round" stroke-linejoin="round" /><path d="M7.5 6.4 H11.7 M9.6 4.3 V8.5" fill="none" stroke="#ececec" stroke-width="1.3" stroke-linecap="round" stroke-linejoin="round" /></svg><svg style="position:absolute;left:1293.8px;top:607.6px;" width="12.4" height="12.4" viewBox="0 0 16 16"><path d="M4.2 8.5 V3.4 Q5.2 2.4 6 3.4 V7 H6.5 V1.9 Q7.5 .9 8.4 1.9 V7 H8.9 V2.6 Q9.9 1.6 10.8 2.6 V7.4 H11.3 V4.4 Q12.3 3.4 13.1 4.4 V10.5 Q13.1 15 8.8 15 Q5.8 15 4.4 12.4 L1.6 8.2 Q2.6 6.8 4.2 8.5 Z" fill="#ececec" /></svg><svg style="position:absolute;left:1293.8px;top:627.8px;" width="12.4" height="12.4" viewBox="0 0 16 16"><circle cx="4.6" cy="4" r="3.1" fill="#ececec"/><circle cx="11" cy="4.4" r="2.7" fill="#ececec"/><path d="M1.5 7.8 H11.5 V14.5 H1.5 Z M12 10.8 L15.5 8.3 V14 Z" fill="#ececec" /><circle cx="4.6" cy="4" r="1.1" fill="#222"/><circle cx="11" cy="4.4" r="1" fill="#222"/></svg><svg style="position:absolute;left:1293.8px;top:648.2px;" width="12.4" height="12.4" viewBox="0 0 16 16"><rect x="2.5" y="7.5" width="10" height="7" rx="1" fill="none" stroke="#ececec" stroke-width="1.4"/><path d="M5 7.5 V4.5 A3 3 0 0 1 11 4.5" fill="none" stroke="#ececec" stroke-width="1.4" stroke-linecap="round" stroke-linejoin="round" /><circle cx="7.5" cy="11" r="1" fill="#ececec"/></svg><svg style="position:absolute;left:1309.1px;top:534px;" width="6.4" height="6.4" viewBox="0 0 16 16"><path d="M10.5 3 L5 8 L10.5 13" fill="none" stroke="#b0b0b0" stroke-width="1.8" stroke-linecap="round" stroke-linejoin="round" /></svg><div style="position:absolute;left:1314.5px;top:488.5px;width:2.1px;height:883.5px;background:#161616;"></div><div style="position:absolute;left:1316.6px;top:770px;width:190.4px;height:2.2px;background:#161616;"></div><div style="position:absolute;left:1316.6px;top:488.5px;width:190.4px;height:281.6px;background:#282828;border-radius:4px 0 0 4px;"></div><div style="position:absolute;left:1316.6px;top:504px;width:190.4px;height:6px;background:#2b2b2b;"></div><div style="position:absolute;left:1316.6px;top:523.36px;width:190.4px;height:13.52px;background:#2b2b2b;"></div><div style="position:absolute;left:1316.6px;top:550.4px;width:190.4px;height:13.52px;background:#2b2b2b;"></div><div style="position:absolute;left:1316.6px;top:577.44px;width:190.4px;height:13.52px;background:#2b2b2b;"></div><div style="position:absolute;left:1316.6px;top:604.48px;width:190.4px;height:13.52px;background:#2b2b2b;"></div><div style="position:absolute;left:1316.6px;top:631.52px;width:190.4px;height:13.52px;background:#2b2b2b;"></div><div style="position:absolute;left:1316.6px;top:658.56px;width:190.4px;height:13.52px;background:#2b2b2b;"></div><div style="position:absolute;left:1316.6px;top:685.6px;width:190.4px;height:13.52px;background:#2b2b2b;"></div><div style="position:absolute;left:1316.6px;top:712.64px;width:190.4px;height:13.52px;background:#2b2b2b;"></div><div style="position:absolute;left:1316.6px;top:739.68px;width:190.4px;height:13.52px;background:#2b2b2b;"></div><div style="position:absolute;left:1316.6px;top:504.1px;width:190.4px;height:5.8px;overflow:hidden"><div style="position:absolute;left:60px;top:1.6px;width:9px;height:1.6px;background:#d0d0d0"></div><div style="position:absolute;left:73.6px;top:2px;width:2.6px;height:2.2px;background:#d0d0d0;border-radius:1px"></div><div style="position:absolute;left:78px;top:2px;width:3.6px;height:2.2px;background:#d0d0d0;border-radius:1px"></div><div style="position:absolute;left:86px;top:-7.2px;font-size:8.4px;line-height:10px;color:#cfcfcf;letter-spacing:.4px;white-space:pre">Crane Tower</div><div style="position:absolute;left:160px;top:1.4px;width:8.6px;height:1.3px;background:#bbb"></div><div style="position:absolute;left:173.4px;top:1.4px;width:9px;height:1.5px;background:#ddd"></div></div><div style="position:absolute;left:1316.6px;top:488.5px;width:190.4px;height:15.6px;background:#2e2e2e;border-radius:4px 0 0 0;"></div><svg style="position:absolute;left:1324.6px;top:491.2px;" width="10.8" height="10.8" viewBox="0 0 16 16"><rect x="1.5" y="1.5" width="4.5" height="3.6" rx="0" fill="#ececec"/><rect x="7.5" y="6.2" width="7" height="3" rx="0" fill="#ececec"/><rect x="7.5" y="11.4" width="7" height="3" rx="0" fill="#ececec"/><path d="M3.5 5 V13 H7 M3.5 7.8 H7" fill="none" stroke="#ececec" stroke-width="1.5" stroke-linecap="round" stroke-linejoin="round" /></svg><svg style="position:absolute;left:1336px;top:493.8px;" width="6.4" height="6.4" viewBox="0 0 16 16"><path d="M2.5 5.5 L8 11 L13.5 5.5" fill="none" stroke="#e4e4e4" stroke-width="2.5" stroke-linecap="round" stroke-linejoin="round" /></svg><svg style="position:absolute;left:1349.7px;top:491.3px;" width="10.6" height="10.6" viewBox="0 0 16 16"><rect x="1.5" y="5" width="10" height="9.5" rx="1.2" fill="none" stroke="#e0e0e0" stroke-width="1.3"/><rect x="4.5" y="1.5" width="10" height="10" rx="1.2" fill="#e0e0e0"/><path d="M6 10 L9 5.5 L10.5 8 L11.5 7 L13.5 10 Z" fill="#2b2b2b" /></svg><svg style="position:absolute;left:1361px;top:493.8px;" width="6.4" height="6.4" viewBox="0 0 16 16"><path d="M2.5 5.5 L8 11 L13.5 5.5" fill="none" stroke="#e4e4e4" stroke-width="2.5" stroke-linecap="round" stroke-linejoin="round" /></svg><div style="position:absolute;left:1379.7px;top:490.4px;width:79px;height:12.4px;background:#1d1d1d;border-radius:2.5px;border:.6px solid #3a3a3a;"></div><svg style="position:absolute;left:1382.4px;top:491.6px;" width="10" height="10" viewBox="0 0 16 16"><circle cx="9.8" cy="6.2" r="4.3" fill="none" stroke="#e0e0e0" stroke-width="1.7"/><path d="M6.6 9.4 L2 14" fill="none" stroke="#e0e0e0" stroke-width="2" stroke-linecap="round" stroke-linejoin="round" /></svg><div style="position:absolute;left:1397px;top:492.27px;height:10.66px;line-height:10.66px;font-size:8.2px;letter-spacing:-0.4px;color:#6a6a6a;white-space:pre;-webkit-text-stroke:.22px;">Search</div><svg style="position:absolute;left:1471.7px;top:491.3px;" width="10.6" height="10.6" viewBox="0 0 16 16"><path d="M2 2.5 H14 L9.6 8.2 V13.5 L6.4 12 V8.2 Z" fill="none" stroke="#e6e6e6" stroke-width="1.6" stroke-linecap="round" stroke-linejoin="round" /></svg><svg style="position:absolute;left:1484.4px;top:493.8px;" width="6.4" height="6.4" viewBox="0 0 16 16"><path d="M2.5 5.5 L8 11 L13.5 5.5" fill="none" stroke="#e4e4e4" stroke-width="2.5" stroke-linecap="round" stroke-linejoin="round" /></svg><div style="position:absolute;left:1495.6px;top:490px;width:11.4px;height:13.2px;background:#4b4b4b;border-radius:2.5px 0 0 2.5px;"></div><svg style="position:absolute;left:1497px;top:491.6px;" width="10" height="10" viewBox="0 0 16 16"><path d="M2 4 H11 V6.5 H2 Z M3 7 V14 H10 V7" fill="none" stroke="#dcdcdc" stroke-width="1.4" stroke-linecap="round" stroke-linejoin="round" /><circle cx="12.5" cy="3.5" r="2.6" fill="#dcdcdc"/><path d="M11.2 3.5 H13.8 M12.5 2.2 V4.8" fill="none" stroke="#2b2b2b" stroke-width="0.9" stroke-linecap="round" stroke-linejoin="round" /></svg><div style="position:absolute;left:1316.6px;top:644.4px;width:190.4px;height:13.2px;background:#344f88;"></div><div style="position:absolute;left:1336.5px;top:510px;width:0.8px;height:229px;background:#4a4a4a;"></div><svg style="position:absolute;left:1360.6px;top:513.3px;" width="6.6" height="6.6" viewBox="0 0 16 16"><path d="M5.5 3 L11 8 L5.5 13" fill="none" stroke="#b4b4b4" stroke-width="1.8" stroke-linecap="round" stroke-linejoin="round" /></svg><div style="position:absolute;left:1349.4px;top:513.6px;width:0.9px;height:6px;background:#666;"></div><svg style="position:absolute;left:1372.1px;top:511.3px;" width="10.6" height="10.6" viewBox="0 0 16 16"><path d="M8 9.5 V1.5 M8 9.5 L1.5 13.5 M8 9.5 L14.5 12.5" fill="none" stroke="#e0883a" stroke-width="2.4" stroke-linecap="round" stroke-linejoin="round" /></svg><div style="position:absolute;left:1387px;top:512.07px;height:10.66px;line-height:10.66px;font-size:8.2px;letter-spacing:-0.12px;color:#dadada;white-space:pre;-webkit-text-stroke:.22px;">Crane Tower</div><svg style="position:absolute;left:1444.4px;top:511.4px;" width="10.4" height="10.4" viewBox="0 0 16 16"><path d="M8 9.5 V1.5 M8 9.5 L1.5 13.5 M8 9.5 L14.5 12.5" fill="none" stroke="#e0883a" stroke-width="2.4" stroke-linecap="round" stroke-linejoin="round" /></svg><div style="position:absolute;left:1454.6px;top:516.7px;height:7.8px;line-height:7.8px;font-size:6px;letter-spacing:-0.12px;color:#c8c8c8;white-space:pre;-webkit-text-stroke:.22px;">2</div><svg style="position:absolute;left:1476.2px;top:511px;" width="10.4" height="10.4" viewBox="0 0 16 16"><path d="M1 8 Q8 0.5 15 8 Q8 15.5 1 8 Z" fill="none" stroke="#ececec" stroke-width="1.7" stroke-linecap="round" stroke-linejoin="round" /><circle cx="8" cy="8" r="3" fill="#ececec"/></svg><svg style="position:absolute;left:1489.7px;top:511.4px;" width="10.4" height="10.4" viewBox="0 0 16 16"><path d="M1 4.5 H4.5 L6 2.2 H10 L11.5 4.5 H15 V14 H1 Z M8 5.6 A3.4 3.4 0 1 0 8 12.4 A3.4 3.4 0 1 0 8 5.6 Z" fill="#ececec" fill-rule="evenodd"/><circle cx="8" cy="9" r="1.8" fill="#ececec"/></svg><svg style="position:absolute;left:1358.5px;top:524.82px;" width="10.6" height="10.6" viewBox="0 0 16 16"><path d="M1 1 H15 V4.5 H1 Z M2 6 H14 V15 H2 Z M5.5 8 H10.5 V10 H5.5 Z" fill="#bdbdbd" fill-rule="evenodd"/></svg><div style="position:absolute;left:1373.4px;top:525.59px;height:10.66px;line-height:10.66px;font-size:8.2px;letter-spacing:-0.12px;color:#7a7a7a;white-space:pre;-webkit-text-stroke:.22px;">Crane Tower_hidden</div><svg style="position:absolute;left:1462.7px;top:525.32px;" width="9.6" height="9.6" viewBox="0 0 16 16"><rect x="2.5" y="2.5" width="11" height="11" rx="1" fill="none" stroke="#b0b0b0" stroke-width="1.3"/></svg><svg style="position:absolute;left:1476.2px;top:524.52px;" width="10.4" height="10.4" viewBox="0 0 16 16"><path d="M1 8 Q8 0.5 15 8 Q8 15.5 1 8 Z" fill="none" stroke="#4a4a4a" stroke-width="1.7" stroke-linecap="round" stroke-linejoin="round" /><circle cx="8" cy="8" r="3" fill="#4a4a4a"/></svg><svg style="position:absolute;left:1489.7px;top:524.92px;" width="10.4" height="10.4" viewBox="0 0 16 16"><path d="M1 4.5 H4.5 L6 2.2 H10 L11.5 4.5 H15 V14 H1 Z M8 5.6 A3.4 3.4 0 1 0 8 12.4 A3.4 3.4 0 1 0 8 5.6 Z" fill="#4a4a4a" fill-rule="evenodd"/><circle cx="8" cy="9" r="1.8" fill="#4a4a4a"/></svg><svg style="position:absolute;left:1347px;top:540.34px;" width="6.6" height="6.6" viewBox="0 0 16 16"><path d="M5.5 3 L11 8 L5.5 13" fill="none" stroke="#b4b4b4" stroke-width="1.8" stroke-linecap="round" stroke-linejoin="round" /></svg><svg style="position:absolute;left:1358.5px;top:538.34px;" width="10.6" height="10.6" viewBox="0 0 16 16"><path d="M8 1 A5.3 5.3 0 0 1 11.3 10.4 V11.5 H4.7 V10.4 A5.3 5.3 0 0 1 8 1 Z" fill="#e0883a" /><path d="M5.3 12.4 H10.7 V13.5 H5.3 Z M6.2 14.2 H9.8 L9 15.5 H7 Z" fill="#e0883a" /><path d="M6 6.2 L7.2 8 L8 6.8 L8.8 8 L10 6.2" fill="none" stroke="#2b2b2b" stroke-width="1"/></svg><div style="position:absolute;left:1373.4px;top:539.11px;height:10.66px;line-height:10.66px;font-size:8.2px;letter-spacing:-0.28px;color:#dadada;white-space:pre;-webkit-text-stroke:.22px;">Area</div><svg style="position:absolute;left:1404.7px;top:538.74px;" width="9.8" height="9.8" viewBox="0 0 16 16"><path d="M4 2.5 L10.5 1.5 L13.5 12.5 L7 13.5 Z M2 14 L5 10.5" fill="none" stroke="#19a583" stroke-width="1.5" stroke-linecap="round" stroke-linejoin="round" /><circle cx="8.7" cy="7.5" r="1" fill="#19a583"/></svg><svg style="position:absolute;left:1476.2px;top:538.04px;" width="10.4" height="10.4" viewBox="0 0 16 16"><path d="M1 8 Q8 0.5 15 8 Q8 15.5 1 8 Z" fill="none" stroke="#ececec" stroke-width="1.7" stroke-linecap="round" stroke-linejoin="round" /><circle cx="8" cy="8" r="3" fill="#ececec"/></svg><svg style="position:absolute;left:1489.7px;top:538.44px;" width="10.4" height="10.4" viewBox="0 0 16 16"><path d="M1 4.5 H4.5 L6 2.2 H10 L11.5 4.5 H15 V14 H1 Z M8 5.6 A3.4 3.4 0 1 0 8 12.4 A3.4 3.4 0 1 0 8 5.6 Z" fill="#ececec" fill-rule="evenodd"/><circle cx="8" cy="9" r="1.8" fill="#ececec"/></svg><svg style="position:absolute;left:1347px;top:553.86px;" width="6.6" height="6.6" viewBox="0 0 16 16"><path d="M5.5 3 L11 8 L5.5 13" fill="none" stroke="#6a6a6a" stroke-width="1.8" stroke-linecap="round" stroke-linejoin="round" /></svg><svg style="position:absolute;left:1358.5px;top:551.86px;" width="10.6" height="10.6" viewBox="0 0 16 16"><path d="M8 1 A5.3 5.3 0 0 1 11.3 10.4 V11.5 H4.7 V10.4 A5.3 5.3 0 0 1 8 1 Z" fill="#805530" /><path d="M5.3 12.4 H10.7 V13.5 H5.3 Z M6.2 14.2 H9.8 L9 15.5 H7 Z" fill="#805530" /><path d="M6 6.2 L7.2 8 L8 6.8 L8.8 8 L10 6.2" fill="none" stroke="#2b2b2b" stroke-width="1"/></svg><div style="position:absolute;left:1373.4px;top:552.63px;height:10.66px;line-height:10.66px;font-size:8.2px;letter-spacing:-0.16px;color:#8a8a8a;white-space:pre;-webkit-text-stroke:.22px;">Area.001</div><svg style="position:absolute;left:1421.1px;top:552.26px;" width="9.8" height="9.8" viewBox="0 0 16 16"><path d="M4 2.5 L10.5 1.5 L13.5 12.5 L7 13.5 Z M2 14 L5 10.5" fill="none" stroke="#14705c" stroke-width="1.5" stroke-linecap="round" stroke-linejoin="round" /><circle cx="8.7" cy="7.5" r="1" fill="#14705c"/></svg><svg style="position:absolute;left:1476.6px;top:551.76px;" width="9.6" height="9.6" viewBox="0 0 16 16"><path d="M1.5 6 Q8 14 14.5 6" fill="none" stroke="#9a9a9a" stroke-width="1.6" stroke-linecap="round" stroke-linejoin="round" /></svg><svg style="position:absolute;left:1489.8px;top:552.06px;" width="10.2" height="10.2" viewBox="0 0 16 16"><path d="M1.8 5 H4.8 L6.2 2.8 H9.8 L11.2 5 H14.2 V13.4 H1.8 Z" fill="none" stroke="#9a9a9a" stroke-width="1.4" stroke-linecap="round" stroke-linejoin="round" /><path d="M6 7 L10 11 M10 7 L6 11" fill="none" stroke="#9a9a9a" stroke-width="1.4" stroke-linecap="round" stroke-linejoin="round" /></svg><svg style="position:absolute;left:1347px;top:567.38px;" width="6.6" height="6.6" viewBox="0 0 16 16"><path d="M5.5 3 L11 8 L5.5 13" fill="none" stroke="#b4b4b4" stroke-width="1.8" stroke-linecap="round" stroke-linejoin="round" /></svg><svg style="position:absolute;left:1358.5px;top:565.38px;" width="10.6" height="10.6" viewBox="0 0 16 16"><path d="M8 1 A5.3 5.3 0 0 1 11.3 10.4 V11.5 H4.7 V10.4 A5.3 5.3 0 0 1 8 1 Z" fill="#e0883a" /><path d="M5.3 12.4 H10.7 V13.5 H5.3 Z M6.2 14.2 H9.8 L9 15.5 H7 Z" fill="#e0883a" /><path d="M6 6.2 L7.2 8 L8 6.8 L8.8 8 L10 6.2" fill="none" stroke="#2b2b2b" stroke-width="1"/></svg><div style="position:absolute;left:1373.4px;top:566.15px;height:10.66px;line-height:10.66px;font-size:8.2px;letter-spacing:-0.16px;color:#dadada;white-space:pre;-webkit-text-stroke:.22px;">Area.002</div><svg style="position:absolute;left:1421.1px;top:565.78px;" width="9.8" height="9.8" viewBox="0 0 16 16"><path d="M4 2.5 L10.5 1.5 L13.5 12.5 L7 13.5 Z M2 14 L5 10.5" fill="none" stroke="#19a583" stroke-width="1.5" stroke-linecap="round" stroke-linejoin="round" /><circle cx="8.7" cy="7.5" r="1" fill="#19a583"/></svg><svg style="position:absolute;left:1476.2px;top:565.08px;" width="10.4" height="10.4" viewBox="0 0 16 16"><path d="M1 8 Q8 0.5 15 8 Q8 15.5 1 8 Z" fill="none" stroke="#ececec" stroke-width="1.7" stroke-linecap="round" stroke-linejoin="round" /><circle cx="8" cy="8" r="3" fill="#ececec"/></svg><svg style="position:absolute;left:1489.7px;top:565.48px;" width="10.4" height="10.4" viewBox="0 0 16 16"><path d="M1 4.5 H4.5 L6 2.2 H10 L11.5 4.5 H15 V14 H1 Z M8 5.6 A3.4 3.4 0 1 0 8 12.4 A3.4 3.4 0 1 0 8 5.6 Z" fill="#ececec" fill-rule="evenodd"/><circle cx="8" cy="9" r="1.8" fill="#ececec"/></svg><svg style="position:absolute;left:1347px;top:580.9px;" width="6.6" height="6.6" viewBox="0 0 16 16"><path d="M5.5 3 L11 8 L5.5 13" fill="none" stroke="#b4b4b4" stroke-width="1.8" stroke-linecap="round" stroke-linejoin="round" /></svg><svg style="position:absolute;left:1358.5px;top:578.9px;" width="10.6" height="10.6" viewBox="0 0 16 16"><circle cx="4.6" cy="4.2" r="3" fill="#e0883a"/><circle cx="11" cy="4.6" r="2.6" fill="#e0883a"/><path d="M1.5 8 H11.5 V14.5 H1.5 Z M12 11 L15.5 8.5 V14 Z" fill="#e0883a" /><circle cx="4.6" cy="4.2" r="1" fill="#2b2b2b"/><circle cx="11" cy="4.6" r="0.9" fill="#2b2b2b"/></svg><div style="position:absolute;left:1373.4px;top:579.67px;height:10.66px;line-height:10.66px;font-size:8.2px;letter-spacing:-0.36px;color:#dadada;white-space:pre;-webkit-text-stroke:.22px;">Camera</div><svg style="position:absolute;left:1415.7px;top:579.3px;" width="9.8" height="9.8" viewBox="0 0 16 16"><path d="M3 2.5 H9 L4.5 9 Q4 11.5 7 11.5 H13 M10.5 9 L13.3 11.5 L10.5 14" fill="none" stroke="#c8c8c8" stroke-width="1.5" stroke-linecap="round" stroke-linejoin="round" /></svg><div style="position:absolute;left:1427.6px;top:578px;width:13.2px;height:12.4px;background:#2a6c64;border-radius:2.5px;"></div><svg style="position:absolute;left:1429.4px;top:579.4px;" width="9.6" height="9.6" viewBox="0 0 16 16"><circle cx="5" cy="5" r="2.4" fill="none" stroke="#2fd0ae" stroke-width="1.4"/><circle cx="11" cy="5" r="2.2" fill="none" stroke="#2fd0ae" stroke-width="1.4"/><path d="M3 9.5 H11 V13.5 H3 Z M11.5 11 L14 9.5 V13.5 Z" fill="none" stroke="#2fd0ae" stroke-width="1.4" stroke-linecap="round" stroke-linejoin="round" /></svg><svg style="position:absolute;left:1476.2px;top:578.6px;" width="10.4" height="10.4" viewBox="0 0 16 16"><path d="M1 8 Q8 0.5 15 8 Q8 15.5 1 8 Z" fill="none" stroke="#ececec" stroke-width="1.7" stroke-linecap="round" stroke-linejoin="round" /><circle cx="8" cy="8" r="3" fill="#ececec"/></svg><svg style="position:absolute;left:1489.7px;top:579px;" width="10.4" height="10.4" viewBox="0 0 16 16"><path d="M1 4.5 H4.5 L6 2.2 H10 L11.5 4.5 H15 V14 H1 Z M8 5.6 A3.4 3.4 0 1 0 8 12.4 A3.4 3.4 0 1 0 8 5.6 Z" fill="#ececec" fill-rule="evenodd"/><circle cx="8" cy="9" r="1.8" fill="#ececec"/></svg><svg style="position:absolute;left:1347px;top:594.42px;" width="6.6" height="6.6" viewBox="0 0 16 16"><path d="M5.5 3 L11 8 L5.5 13" fill="none" stroke="#b4b4b4" stroke-width="1.8" stroke-linecap="round" stroke-linejoin="round" /></svg><svg style="position:absolute;left:1358.5px;top:592.42px;" width="10.6" height="10.6" viewBox="0 0 16 16"><path d="M2 3 H14 L8 14 Z" fill="none" stroke="#e0883a" stroke-width="2.4" stroke-linecap="round" stroke-linejoin="round" /></svg><div style="position:absolute;left:1373.4px;top:593.19px;height:10.66px;line-height:10.66px;font-size:8.2px;letter-spacing:-0.1px;color:#dadada;white-space:pre;-webkit-text-stroke:.22px;">Cube</div><svg style="position:absolute;left:1407.7px;top:592.82px;" width="9.8" height="9.8" viewBox="0 0 16 16"><path d="M2.5 3 H13.5 L8 13.5 Z" fill="none" stroke="#19a583" stroke-width="1.5" stroke-linecap="round" stroke-linejoin="round" /><circle cx="2.5" cy="3" r="1.7" fill="#19a583"/><circle cx="13.5" cy="3" r="1.7" fill="#19a583"/><circle cx="8" cy="13.5" r="1.7" fill="#19a583"/></svg><svg style="position:absolute;left:1476.2px;top:592.12px;" width="10.4" height="10.4" viewBox="0 0 16 16"><path d="M1 8 Q8 0.5 15 8 Q8 15.5 1 8 Z" fill="none" stroke="#ececec" stroke-width="1.7" stroke-linecap="round" stroke-linejoin="round" /><circle cx="8" cy="8" r="3" fill="#ececec"/></svg><svg style="position:absolute;left:1489.7px;top:592.52px;" width="10.4" height="10.4" viewBox="0 0 16 16"><path d="M1 4.5 H4.5 L6 2.2 H10 L11.5 4.5 H15 V14 H1 Z M8 5.6 A3.4 3.4 0 1 0 8 12.4 A3.4 3.4 0 1 0 8 5.6 Z" fill="#ececec" fill-rule="evenodd"/><circle cx="8" cy="9" r="1.8" fill="#ececec"/></svg><svg style="position:absolute;left:1347px;top:607.94px;" width="6.6" height="6.6" viewBox="0 0 16 16"><path d="M5.5 3 L11 8 L5.5 13" fill="none" stroke="#b4b4b4" stroke-width="1.8" stroke-linecap="round" stroke-linejoin="round" /></svg><svg style="position:absolute;left:1358.5px;top:605.94px;" width="10.6" height="10.6" viewBox="0 0 16 16"><path d="M8 9.5 V1.5 M8 9.5 L1.5 13.5 M8 9.5 L14.5 12.5" fill="none" stroke="#e0883a" stroke-width="2.4" stroke-linecap="round" stroke-linejoin="round" /></svg><div style="position:absolute;left:1373.4px;top:606.71px;height:10.66px;line-height:10.66px;font-size:8.2px;letter-spacing:-0.05px;color:#dadada;white-space:pre;-webkit-text-stroke:.22px;">Empty</div><svg style="position:absolute;left:1411.9px;top:606.34px;" width="9.8" height="9.8" viewBox="0 0 16 16"><path d="M3 2.5 H9 L4.5 9 Q4 11.5 7 11.5 H13 M10.5 9 L13.3 11.5 L10.5 14" fill="none" stroke="#c8c8c8" stroke-width="1.5" stroke-linecap="round" stroke-linejoin="round" /></svg><svg style="position:absolute;left:1476.2px;top:605.64px;" width="10.4" height="10.4" viewBox="0 0 16 16"><path d="M1 8 Q8 0.5 15 8 Q8 15.5 1 8 Z" fill="none" stroke="#ececec" stroke-width="1.7" stroke-linecap="round" stroke-linejoin="round" /><circle cx="8" cy="8" r="3" fill="#ececec"/></svg><svg style="position:absolute;left:1489.7px;top:606.04px;" width="10.4" height="10.4" viewBox="0 0 16 16"><path d="M1 4.5 H4.5 L6 2.2 H10 L11.5 4.5 H15 V14 H1 Z M8 5.6 A3.4 3.4 0 1 0 8 12.4 A3.4 3.4 0 1 0 8 5.6 Z" fill="#ececec" fill-rule="evenodd"/><circle cx="8" cy="9" r="1.8" fill="#ececec"/></svg><svg style="position:absolute;left:1347px;top:621.46px;" width="6.6" height="6.6" viewBox="0 0 16 16"><path d="M5.5 3 L11 8 L5.5 13" fill="none" stroke="#b4b4b4" stroke-width="1.8" stroke-linecap="round" stroke-linejoin="round" /></svg><svg style="position:absolute;left:1358.5px;top:619.46px;" width="10.6" height="10.6" viewBox="0 0 16 16"><path d="M2 3 H14 L8 14 Z" fill="none" stroke="#e0883a" stroke-width="2.4" stroke-linecap="round" stroke-linejoin="round" /></svg><div style="position:absolute;left:1373.4px;top:620.23px;height:10.66px;line-height:10.66px;font-size:8.2px;letter-spacing:-0.19px;color:#dadada;white-space:pre;-webkit-text-stroke:.22px;">Plane</div><svg style="position:absolute;left:1408.1px;top:619.86px;" width="9.8" height="9.8" viewBox="0 0 16 16"><path d="M2.5 3 H13.5 L8 13.5 Z" fill="none" stroke="#19a583" stroke-width="1.5" stroke-linecap="round" stroke-linejoin="round" /><circle cx="2.5" cy="3" r="1.7" fill="#19a583"/><circle cx="13.5" cy="3" r="1.7" fill="#19a583"/><circle cx="8" cy="13.5" r="1.7" fill="#19a583"/></svg><svg style="position:absolute;left:1476.2px;top:619.16px;" width="10.4" height="10.4" viewBox="0 0 16 16"><path d="M1 8 Q8 0.5 15 8 Q8 15.5 1 8 Z" fill="none" stroke="#ececec" stroke-width="1.7" stroke-linecap="round" stroke-linejoin="round" /><circle cx="8" cy="8" r="3" fill="#ececec"/></svg><svg style="position:absolute;left:1489.7px;top:619.56px;" width="10.4" height="10.4" viewBox="0 0 16 16"><path d="M1 4.5 H4.5 L6 2.2 H10 L11.5 4.5 H15 V14 H1 Z M8 5.6 A3.4 3.4 0 1 0 8 12.4 A3.4 3.4 0 1 0 8 5.6 Z" fill="#ececec" fill-rule="evenodd"/><circle cx="8" cy="9" r="1.8" fill="#ececec"/></svg><svg style="position:absolute;left:1347px;top:634.98px;" width="6.6" height="6.6" viewBox="0 0 16 16"><path d="M5.5 3 L11 8 L5.5 13" fill="none" stroke="#6a6a6a" stroke-width="1.8" stroke-linecap="round" stroke-linejoin="round" /></svg><svg style="position:absolute;left:1358.5px;top:632.98px;" width="10.6" height="10.6" viewBox="0 0 16 16"><path d="M2 3 H14 L8 14 Z" fill="none" stroke="#805530" stroke-width="2.4" stroke-linecap="round" stroke-linejoin="round" /></svg><div style="position:absolute;left:1373.4px;top:633.75px;height:10.66px;line-height:10.66px;font-size:8.2px;letter-spacing:-0.19px;color:#8a8a8a;white-space:pre;-webkit-text-stroke:.22px;">Plane.001</div><svg style="position:absolute;left:1424.1px;top:633.38px;" width="9.8" height="9.8" viewBox="0 0 16 16"><path d="M2.5 3 H13.5 L8 13.5 Z" fill="none" stroke="#14705c" stroke-width="1.5" stroke-linecap="round" stroke-linejoin="round" /><circle cx="2.5" cy="3" r="1.7" fill="#14705c"/><circle cx="13.5" cy="3" r="1.7" fill="#14705c"/><circle cx="8" cy="13.5" r="1.7" fill="#14705c"/></svg><svg style="position:absolute;left:1476.6px;top:632.88px;" width="9.6" height="9.6" viewBox="0 0 16 16"><path d="M1.5 6 Q8 14 14.5 6" fill="none" stroke="#9a9a9a" stroke-width="1.6" stroke-linecap="round" stroke-linejoin="round" /></svg><svg style="position:absolute;left:1489.8px;top:633.18px;" width="10.2" height="10.2" viewBox="0 0 16 16"><path d="M1.8 5 H4.8 L6.2 2.8 H9.8 L11.2 5 H14.2 V13.4 H1.8 Z" fill="none" stroke="#9a9a9a" stroke-width="1.4" stroke-linecap="round" stroke-linejoin="round" /><path d="M6 7 L10 11 M10 7 L6 11" fill="none" stroke="#9a9a9a" stroke-width="1.4" stroke-linecap="round" stroke-linejoin="round" /></svg><svg style="position:absolute;left:1347px;top:648.5px;" width="6.6" height="6.6" viewBox="0 0 16 16"><path d="M5.5 3 L11 8 L5.5 13" fill="none" stroke="#6a6a6a" stroke-width="1.8" stroke-linecap="round" stroke-linejoin="round" /></svg><div style="position:absolute;left:1357.6px;top:645.8px;width:12.4px;height:12px;background:rgba(255,255,255,.16);border-radius:2.5px;"></div><svg style="position:absolute;left:1358.5px;top:646.5px;" width="10.6" height="10.6" viewBox="0 0 16 16"><path d="M2 3 H14 L8 14 Z" fill="none" stroke="#c48a6a" stroke-width="2.4" stroke-linecap="round" stroke-linejoin="round" /></svg><div style="position:absolute;left:1373.4px;top:647.27px;height:10.66px;line-height:10.66px;font-size:8.2px;letter-spacing:-0.19px;color:#9fb0d0;white-space:pre;-webkit-text-stroke:.22px;">Plane.004</div><svg style="position:absolute;left:1424.1px;top:646.9px;" width="9.8" height="9.8" viewBox="0 0 16 16"><path d="M2.5 3 H13.5 L8 13.5 Z" fill="none" stroke="#2c8fa0" stroke-width="1.5" stroke-linecap="round" stroke-linejoin="round" /><circle cx="2.5" cy="3" r="1.7" fill="#2c8fa0"/><circle cx="13.5" cy="3" r="1.7" fill="#2c8fa0"/><circle cx="8" cy="13.5" r="1.7" fill="#2c8fa0"/></svg><svg style="position:absolute;left:1476.6px;top:646.4px;" width="9.6" height="9.6" viewBox="0 0 16 16"><path d="M1.5 6 Q8 14 14.5 6" fill="none" stroke="#c4cfe6" stroke-width="1.6" stroke-linecap="round" stroke-linejoin="round" /></svg><svg style="position:absolute;left:1489.8px;top:646.7px;" width="10.2" height="10.2" viewBox="0 0 16 16"><path d="M1.8 5 H4.8 L6.2 2.8 H9.8 L11.2 5 H14.2 V13.4 H1.8 Z" fill="none" stroke="#c4cfe6" stroke-width="1.4" stroke-linecap="round" stroke-linejoin="round" /><path d="M6 7 L10 11 M10 7 L6 11" fill="none" stroke="#c4cfe6" stroke-width="1.4" stroke-linecap="round" stroke-linejoin="round" /></svg><svg style="position:absolute;left:1347px;top:662.02px;" width="6.6" height="6.6" viewBox="0 0 16 16"><path d="M5.5 3 L11 8 L5.5 13" fill="none" stroke="#b4b4b4" stroke-width="1.8" stroke-linecap="round" stroke-linejoin="round" /></svg><svg style="position:absolute;left:1358.5px;top:660.02px;" width="10.6" height="10.6" viewBox="0 0 16 16"><path d="M8 1 A5.3 5.3 0 0 1 11.3 10.4 V11.5 H4.7 V10.4 A5.3 5.3 0 0 1 8 1 Z" fill="#e0883a" /><path d="M5.3 12.4 H10.7 V13.5 H5.3 Z M6.2 14.2 H9.8 L9 15.5 H7 Z" fill="#e0883a" /><path d="M6 6.2 L7.2 8 L8 6.8 L8.8 8 L10 6.2" fill="none" stroke="#2b2b2b" stroke-width="1"/></svg><div style="position:absolute;left:1373.4px;top:660.79px;height:10.66px;line-height:10.66px;font-size:8.2px;letter-spacing:0.02px;color:#dadada;white-space:pre;-webkit-text-stroke:.22px;">Point</div><svg style="position:absolute;left:1407.7px;top:660.42px;" width="9.8" height="9.8" viewBox="0 0 16 16"><circle cx="8" cy="7" r="5.4" fill="none" stroke="#19a583" stroke-width="1.5"/><circle cx="8" cy="7.5" r="1.6" fill="#19a583"/><path d="M8 9 V15" fill="none" stroke="#19a583" stroke-width="1.5" stroke-linecap="round" stroke-linejoin="round" /></svg><svg style="position:absolute;left:1476.2px;top:659.72px;" width="10.4" height="10.4" viewBox="0 0 16 16"><path d="M1 8 Q8 0.5 15 8 Q8 15.5 1 8 Z" fill="none" stroke="#ececec" stroke-width="1.7" stroke-linecap="round" stroke-linejoin="round" /><circle cx="8" cy="8" r="3" fill="#ececec"/></svg><svg style="position:absolute;left:1489.7px;top:660.12px;" width="10.4" height="10.4" viewBox="0 0 16 16"><path d="M1 4.5 H4.5 L6 2.2 H10 L11.5 4.5 H15 V14 H1 Z M8 5.6 A3.4 3.4 0 1 0 8 12.4 A3.4 3.4 0 1 0 8 5.6 Z" fill="#ececec" fill-rule="evenodd"/><circle cx="8" cy="9" r="1.8" fill="#ececec"/></svg><svg style="position:absolute;left:1347px;top:675.54px;" width="6.6" height="6.6" viewBox="0 0 16 16"><path d="M5.5 3 L11 8 L5.5 13" fill="none" stroke="#b4b4b4" stroke-width="1.8" stroke-linecap="round" stroke-linejoin="round" /></svg><svg style="position:absolute;left:1358.5px;top:673.54px;" width="10.6" height="10.6" viewBox="0 0 16 16"><path d="M8 1 A5.3 5.3 0 0 1 11.3 10.4 V11.5 H4.7 V10.4 A5.3 5.3 0 0 1 8 1 Z" fill="#e0883a" /><path d="M5.3 12.4 H10.7 V13.5 H5.3 Z M6.2 14.2 H9.8 L9 15.5 H7 Z" fill="#e0883a" /><path d="M6 6.2 L7.2 8 L8 6.8 L8.8 8 L10 6.2" fill="none" stroke="#2b2b2b" stroke-width="1"/></svg><div style="position:absolute;left:1373.4px;top:674.31px;height:10.66px;line-height:10.66px;font-size:8.2px;letter-spacing:0.02px;color:#dadada;white-space:pre;-webkit-text-stroke:.22px;">Point.001</div><svg style="position:absolute;left:1423.9px;top:673.94px;" width="9.8" height="9.8" viewBox="0 0 16 16"><circle cx="8" cy="7" r="5.4" fill="none" stroke="#19a583" stroke-width="1.5"/><circle cx="8" cy="7.5" r="1.6" fill="#19a583"/><path d="M8 9 V15" fill="none" stroke="#19a583" stroke-width="1.5" stroke-linecap="round" stroke-linejoin="round" /></svg><svg style="position:absolute;left:1476.2px;top:673.24px;" width="10.4" height="10.4" viewBox="0 0 16 16"><path d="M1 8 Q8 0.5 15 8 Q8 15.5 1 8 Z" fill="none" stroke="#ececec" stroke-width="1.7" stroke-linecap="round" stroke-linejoin="round" /><circle cx="8" cy="8" r="3" fill="#ececec"/></svg><svg style="position:absolute;left:1489.7px;top:673.64px;" width="10.4" height="10.4" viewBox="0 0 16 16"><path d="M1 4.5 H4.5 L6 2.2 H10 L11.5 4.5 H15 V14 H1 Z M8 5.6 A3.4 3.4 0 1 0 8 12.4 A3.4 3.4 0 1 0 8 5.6 Z" fill="#ececec" fill-rule="evenodd"/><circle cx="8" cy="9" r="1.8" fill="#ececec"/></svg><svg style="position:absolute;left:1347px;top:689.06px;" width="6.6" height="6.6" viewBox="0 0 16 16"><path d="M5.5 3 L11 8 L5.5 13" fill="none" stroke="#b4b4b4" stroke-width="1.8" stroke-linecap="round" stroke-linejoin="round" /></svg><svg style="position:absolute;left:1358.5px;top:687.06px;" width="10.6" height="10.6" viewBox="0 0 16 16"><path d="M8 1 A5.3 5.3 0 0 1 11.3 10.4 V11.5 H4.7 V10.4 A5.3 5.3 0 0 1 8 1 Z" fill="#e0883a" /><path d="M5.3 12.4 H10.7 V13.5 H5.3 Z M6.2 14.2 H9.8 L9 15.5 H7 Z" fill="#e0883a" /><path d="M6 6.2 L7.2 8 L8 6.8 L8.8 8 L10 6.2" fill="none" stroke="#2b2b2b" stroke-width="1"/></svg><div style="position:absolute;left:1373.4px;top:687.83px;height:10.66px;line-height:10.66px;font-size:8.2px;letter-spacing:0.02px;color:#dadada;white-space:pre;-webkit-text-stroke:.22px;">Point.002</div><svg style="position:absolute;left:1423.9px;top:687.46px;" width="9.8" height="9.8" viewBox="0 0 16 16"><circle cx="8" cy="7" r="5.4" fill="none" stroke="#19a583" stroke-width="1.5"/><circle cx="8" cy="7.5" r="1.6" fill="#19a583"/><path d="M8 9 V15" fill="none" stroke="#19a583" stroke-width="1.5" stroke-linecap="round" stroke-linejoin="round" /></svg><svg style="position:absolute;left:1476.2px;top:686.76px;" width="10.4" height="10.4" viewBox="0 0 16 16"><path d="M1 8 Q8 0.5 15 8 Q8 15.5 1 8 Z" fill="none" stroke="#ececec" stroke-width="1.7" stroke-linecap="round" stroke-linejoin="round" /><circle cx="8" cy="8" r="3" fill="#ececec"/></svg><svg style="position:absolute;left:1489.7px;top:687.16px;" width="10.4" height="10.4" viewBox="0 0 16 16"><path d="M1 4.5 H4.5 L6 2.2 H10 L11.5 4.5 H15 V14 H1 Z M8 5.6 A3.4 3.4 0 1 0 8 12.4 A3.4 3.4 0 1 0 8 5.6 Z" fill="#ececec" fill-rule="evenodd"/><circle cx="8" cy="9" r="1.8" fill="#ececec"/></svg><svg style="position:absolute;left:1347px;top:702.58px;" width="6.6" height="6.6" viewBox="0 0 16 16"><path d="M5.5 3 L11 8 L5.5 13" fill="none" stroke="#b4b4b4" stroke-width="1.8" stroke-linecap="round" stroke-linejoin="round" /></svg><svg style="position:absolute;left:1358.5px;top:700.58px;" width="10.6" height="10.6" viewBox="0 0 16 16"><path d="M8 1 A5.3 5.3 0 0 1 11.3 10.4 V11.5 H4.7 V10.4 A5.3 5.3 0 0 1 8 1 Z" fill="#e0883a" /><path d="M5.3 12.4 H10.7 V13.5 H5.3 Z M6.2 14.2 H9.8 L9 15.5 H7 Z" fill="#e0883a" /><path d="M6 6.2 L7.2 8 L8 6.8 L8.8 8 L10 6.2" fill="none" stroke="#2b2b2b" stroke-width="1"/></svg><div style="position:absolute;left:1373.4px;top:701.35px;height:10.66px;line-height:10.66px;font-size:8.2px;letter-spacing:0.02px;color:#dadada;white-space:pre;-webkit-text-stroke:.22px;">Point.003</div><svg style="position:absolute;left:1423.9px;top:700.98px;" width="9.8" height="9.8" viewBox="0 0 16 16"><circle cx="8" cy="7" r="5.4" fill="none" stroke="#19a583" stroke-width="1.5"/><circle cx="8" cy="7.5" r="1.6" fill="#19a583"/><path d="M8 9 V15" fill="none" stroke="#19a583" stroke-width="1.5" stroke-linecap="round" stroke-linejoin="round" /></svg><svg style="position:absolute;left:1476.2px;top:700.28px;" width="10.4" height="10.4" viewBox="0 0 16 16"><path d="M1 8 Q8 0.5 15 8 Q8 15.5 1 8 Z" fill="none" stroke="#ececec" stroke-width="1.7" stroke-linecap="round" stroke-linejoin="round" /><circle cx="8" cy="8" r="3" fill="#ececec"/></svg><svg style="position:absolute;left:1489.7px;top:700.68px;" width="10.4" height="10.4" viewBox="0 0 16 16"><path d="M1 4.5 H4.5 L6 2.2 H10 L11.5 4.5 H15 V14 H1 Z M8 5.6 A3.4 3.4 0 1 0 8 12.4 A3.4 3.4 0 1 0 8 5.6 Z" fill="#ececec" fill-rule="evenodd"/><circle cx="8" cy="9" r="1.8" fill="#ececec"/></svg><svg style="position:absolute;left:1347px;top:716.1px;" width="6.6" height="6.6" viewBox="0 0 16 16"><path d="M5.5 3 L11 8 L5.5 13" fill="none" stroke="#b4b4b4" stroke-width="1.8" stroke-linecap="round" stroke-linejoin="round" /></svg><svg style="position:absolute;left:1358.5px;top:714.1px;" width="10.6" height="10.6" viewBox="0 0 16 16"><path d="M8 1 A5.3 5.3 0 0 1 11.3 10.4 V11.5 H4.7 V10.4 A5.3 5.3 0 0 1 8 1 Z" fill="#e0883a" /><path d="M5.3 12.4 H10.7 V13.5 H5.3 Z M6.2 14.2 H9.8 L9 15.5 H7 Z" fill="#e0883a" /><path d="M6 6.2 L7.2 8 L8 6.8 L8.8 8 L10 6.2" fill="none" stroke="#2b2b2b" stroke-width="1"/></svg><div style="position:absolute;left:1373.4px;top:714.87px;height:10.66px;line-height:10.66px;font-size:8.2px;letter-spacing:0.02px;color:#dadada;white-space:pre;-webkit-text-stroke:.22px;">Point.004</div><svg style="position:absolute;left:1423.9px;top:714.5px;" width="9.8" height="9.8" viewBox="0 0 16 16"><circle cx="8" cy="7" r="5.4" fill="none" stroke="#19a583" stroke-width="1.5"/><circle cx="8" cy="7.5" r="1.6" fill="#19a583"/><path d="M8 9 V15" fill="none" stroke="#19a583" stroke-width="1.5" stroke-linecap="round" stroke-linejoin="round" /></svg><svg style="position:absolute;left:1476.2px;top:713.8px;" width="10.4" height="10.4" viewBox="0 0 16 16"><path d="M1 8 Q8 0.5 15 8 Q8 15.5 1 8 Z" fill="none" stroke="#ececec" stroke-width="1.7" stroke-linecap="round" stroke-linejoin="round" /><circle cx="8" cy="8" r="3" fill="#ececec"/></svg><svg style="position:absolute;left:1489.7px;top:714.2px;" width="10.4" height="10.4" viewBox="0 0 16 16"><path d="M1 4.5 H4.5 L6 2.2 H10 L11.5 4.5 H15 V14 H1 Z M8 5.6 A3.4 3.4 0 1 0 8 12.4 A3.4 3.4 0 1 0 8 5.6 Z" fill="#ececec" fill-rule="evenodd"/><circle cx="8" cy="9" r="1.8" fill="#ececec"/></svg><svg style="position:absolute;left:1347px;top:729.62px;" width="6.6" height="6.6" viewBox="0 0 16 16"><path d="M5.5 3 L11 8 L5.5 13" fill="none" stroke="#b4b4b4" stroke-width="1.8" stroke-linecap="round" stroke-linejoin="round" /></svg><svg style="position:absolute;left:1358.5px;top:727.62px;" width="10.6" height="10.6" viewBox="0 0 16 16"><path d="M8 1 A5.3 5.3 0 0 1 11.3 10.4 V11.5 H4.7 V10.4 A5.3 5.3 0 0 1 8 1 Z" fill="#e0883a" /><path d="M5.3 12.4 H10.7 V13.5 H5.3 Z M6.2 14.2 H9.8 L9 15.5 H7 Z" fill="#e0883a" /><path d="M6 6.2 L7.2 8 L8 6.8 L8.8 8 L10 6.2" fill="none" stroke="#2b2b2b" stroke-width="1"/></svg><div style="position:absolute;left:1373.4px;top:728.39px;height:10.66px;line-height:10.66px;font-size:8.2px;letter-spacing:0.02px;color:#dadada;white-space:pre;-webkit-text-stroke:.22px;">Point.005</div><svg style="position:absolute;left:1423.9px;top:728.02px;" width="9.8" height="9.8" viewBox="0 0 16 16"><circle cx="8" cy="7" r="5.4" fill="none" stroke="#19a583" stroke-width="1.5"/><circle cx="8" cy="7.5" r="1.6" fill="#19a583"/><path d="M8 9 V15" fill="none" stroke="#19a583" stroke-width="1.5" stroke-linecap="round" stroke-linejoin="round" /></svg><svg style="position:absolute;left:1476.2px;top:727.32px;" width="10.4" height="10.4" viewBox="0 0 16 16"><path d="M1 8 Q8 0.5 15 8 Q8 15.5 1 8 Z" fill="none" stroke="#ececec" stroke-width="1.7" stroke-linecap="round" stroke-linejoin="round" /><circle cx="8" cy="8" r="3" fill="#ececec"/></svg><svg style="position:absolute;left:1489.7px;top:727.72px;" width="10.4" height="10.4" viewBox="0 0 16 16"><path d="M1 4.5 H4.5 L6 2.2 H10 L11.5 4.5 H15 V14 H1 Z M8 5.6 A3.4 3.4 0 1 0 8 12.4 A3.4 3.4 0 1 0 8 5.6 Z" fill="#ececec" fill-rule="evenodd"/><circle cx="8" cy="9" r="1.8" fill="#ececec"/></svg><svg style="position:absolute;left:1344.9px;top:741.14px;" width="10.6" height="10.6" viewBox="0 0 16 16"><path d="M1 1 H15 V4.5 H1 Z M2 6 H14 V15 H2 Z M5.5 8 H10.5 V10 H5.5 Z" fill="#bdbdbd" fill-rule="evenodd"/></svg><div style="position:absolute;left:1359.8px;top:741.91px;height:10.66px;line-height:10.66px;font-size:8.2px;letter-spacing:0.02px;color:#7a7a7a;white-space:pre;-webkit-text-stroke:.22px;">DCL-Master-Data</div><svg style="position:absolute;left:1462.7px;top:741.64px;" width="9.6" height="9.6" viewBox="0 0 16 16"><rect x="2.5" y="2.5" width="11" height="11" rx="1" fill="none" stroke="#b0b0b0" stroke-width="1.3"/></svg><svg style="position:absolute;left:1476.2px;top:740.84px;" width="10.4" height="10.4" viewBox="0 0 16 16"><path d="M1 8 Q8 0.5 15 8 Q8 15.5 1 8 Z" fill="none" stroke="#4a4a4a" stroke-width="1.7" stroke-linecap="round" stroke-linejoin="round" /><circle cx="8" cy="8" r="3" fill="#4a4a4a"/></svg><svg style="position:absolute;left:1489.7px;top:741.24px;" width="10.4" height="10.4" viewBox="0 0 16 16"><path d="M1 4.5 H4.5 L6 2.2 H10 L11.5 4.5 H15 V14 H1 Z M8 5.6 A3.4 3.4 0 1 0 8 12.4 A3.4 3.4 0 1 0 8 5.6 Z" fill="#4a4a4a" fill-rule="evenodd"/><circle cx="8" cy="9" r="1.8" fill="#4a4a4a"/></svg><svg style="position:absolute;left:1333.4px;top:756.66px;" width="6.6" height="6.6" viewBox="0 0 16 16"><path d="M5.5 3 L11 8 L5.5 13" fill="none" stroke="#b4b4b4" stroke-width="1.8" stroke-linecap="round" stroke-linejoin="round" /></svg><svg style="position:absolute;left:1344.9px;top:754.66px;" width="10.6" height="10.6" viewBox="0 0 16 16"><path d="M8 9.5 V1.5 M8 9.5 L1.5 13.5 M8 9.5 L14.5 12.5" fill="none" stroke="#e0883a" stroke-width="2.4" stroke-linecap="round" stroke-linejoin="round" /></svg><div style="position:absolute;left:1359.8px;top:755.43px;height:10.66px;line-height:10.66px;font-size:8.2px;letter-spacing:-0.12px;color:#dadada;white-space:pre;-webkit-text-stroke:.22px;">Sketchfab_model</div><svg style="position:absolute;left:1435.8px;top:754.76px;" width="10.4" height="10.4" viewBox="0 0 16 16"><path d="M8 9.5 V1.5 M8 9.5 L1.5 13.5 M8 9.5 L14.5 12.5" fill="none" stroke="#e0883a" stroke-width="2.4" stroke-linecap="round" stroke-linejoin="round" /></svg><svg style="position:absolute;left:1449.6px;top:754.76px;" width="10.4" height="10.4" viewBox="0 0 16 16"><path d="M2 3 H14 L8 14 Z" fill="none" stroke="#e0883a" stroke-width="2.4" stroke-linecap="round" stroke-linejoin="round" /></svg><div style="position:absolute;left:1446.2px;top:760.06px;height:7.8px;line-height:7.8px;font-size:6px;letter-spacing:-0.12px;color:#c8c8c8;white-space:pre;-webkit-text-stroke:.22px;">5</div><div style="position:absolute;left:1460px;top:760.46px;height:7.8px;line-height:7.8px;font-size:6px;letter-spacing:-0.06px;color:#c8c8c8;white-space:pre;-webkit-text-stroke:.22px;">,</div><svg style="position:absolute;left:1476.2px;top:754.36px;" width="10.4" height="10.4" viewBox="0 0 16 16"><path d="M1 8 Q8 0.5 15 8 Q8 15.5 1 8 Z" fill="none" stroke="#ececec" stroke-width="1.7" stroke-linecap="round" stroke-linejoin="round" /><circle cx="8" cy="8" r="3" fill="#ececec"/></svg><svg style="position:absolute;left:1489.7px;top:754.76px;" width="10.4" height="10.4" viewBox="0 0 16 16"><path d="M1 4.5 H4.5 L6 2.2 H10 L11.5 4.5 H15 V14 H1 Z M8 5.6 A3.4 3.4 0 1 0 8 12.4 A3.4 3.4 0 1 0 8 5.6 Z" fill="#ececec" fill-rule="evenodd"/><circle cx="8" cy="9" r="1.8" fill="#ececec"/></svg><div style="position:absolute;left:1322px;top:767.2px;width:176px;height:1.6px;background:#3a3a3a;border-radius:1px;"></div><div style="position:absolute;left:1316.6px;top:772px;width:190.4px;height:599px;background:#303030;border-radius:4px 0 0 0;"></div><div style="position:absolute;left:1316.6px;top:772px;width:190.4px;height:17px;background:#2e2e2e;border-radius:4px 0 0 0;"></div><svg style="position:absolute;left:1324.5px;top:775px;" width="10.6" height="10.6" viewBox="0 0 16 16"><rect x="2" y="1.5" width="12" height="5.6" rx="2.8" fill="#ececec"/><rect x="2" y="8.9" width="12" height="5.6" rx="2.8" fill="#ececec"/><circle cx="11" cy="4.3" r="1.7" fill="#2b2b2b"/><circle cx="5" cy="11.7" r="1.7" fill="#2b2b2b"/></svg><svg style="position:absolute;left:1336.2px;top:777.5px;" width="6.4" height="6.4" viewBox="0 0 16 16"><path d="M2.5 5.5 L8 11 L13.5 5.5" fill="none" stroke="#e4e4e4" stroke-width="2.5" stroke-linecap="round" stroke-linejoin="round" /></svg><div style="position:absolute;left:1371.2px;top:774.6px;width:77.6px;height:11.6px;background:#1d1d1d;border-radius:2.5px;border:.6px solid #3a3a3a;"></div><svg style="position:absolute;left:1373.8px;top:775.5px;" width="9.6" height="9.6" viewBox="0 0 16 16"><circle cx="9.8" cy="6.2" r="4.3" fill="none" stroke="#e0e0e0" stroke-width="1.7"/><path d="M6.6 9.4 L2 14" fill="none" stroke="#e0e0e0" stroke-width="2" stroke-linecap="round" stroke-linejoin="round" /></svg><div style="position:absolute;left:1387.8px;top:776.47px;height:10.66px;line-height:10.66px;font-size:8.2px;letter-spacing:-0.5px;color:#6a6a6a;white-space:pre;-webkit-text-stroke:.22px;">Search</div><div style="position:absolute;left:1489.6px;top:774px;width:12.6px;height:12.6px;background:#2a2a2a;border-radius:2.5px;"></div><svg style="position:absolute;left:1492.8px;top:777.5px;" width="6.4" height="6.4" viewBox="0 0 16 16"><path d="M2.5 5.5 L8 11 L13.5 5.5" fill="none" stroke="#e4e4e4" stroke-width="2.5" stroke-linecap="round" stroke-linejoin="round" /></svg><div style="position:absolute;left:1316.6px;top:789px;width:19.2px;height:582px;background:#1c1c1c;"></div><div style="position:absolute;left:1318.6px;top:791.6px;width:17.2px;height:24.4px;background:#262626;border-radius:2.5px;"></div><div style="position:absolute;left:1318.6px;top:818.6px;width:17.2px;height:18.6px;background:#303030;border-radius:2.5px 0 0 2.5px;"></div><svg style="position:absolute;left:1321.5px;top:798.4px;" width="10.8" height="10.8" viewBox="0 0 16 16"><path d="M4 2 V9" fill="none" stroke="#e0e0e0" stroke-width="1.6" stroke-linecap="round" stroke-linejoin="round" /><circle cx="4" cy="12" r="2.2" fill="#e0e0e0"/><path d="M9.5 2 V5 L11.5 7 L13.5 5 V2 M11.5 7 V14.5" fill="none" stroke="#e0e0e0" stroke-width="1.6" stroke-linecap="round" stroke-linejoin="round" /></svg><svg style="position:absolute;left:1321.5px;top:822.4px;" width="10.8" height="10.8" viewBox="0 0 16 16"><path d="M1.5 5 H10.5 V13.5 H1.5 Z M10.5 7.5 H14.5 V11 H10.5 M4 5 V2.5 H8 V5" fill="none" stroke="#e8e8e8" stroke-width="1.6" stroke-linecap="round" stroke-linejoin="round" /></svg><svg style="position:absolute;left:1321.5px;top:841px;" width="10.8" height="10.8" viewBox="0 0 16 16"><rect x="1.5" y="2" width="13" height="4" rx="0.8" fill="#d8d8d8"/><path d="M4 8 H12 V14 H4 Z M2.5 6 V9 H4 M13.5 6 V9 H12" fill="none" stroke="#d8d8d8" stroke-width="1.4" stroke-linecap="round" stroke-linejoin="round" /><path d="M5.5 13 L8 10 L10.5 13 Z" fill="#d8d8d8" /></svg><svg style="position:absolute;left:1321.5px;top:860.6px;" width="10.8" height="10.8" viewBox="0 0 16 16"><rect x="1.5" y="5.5" width="9.5" height="9" rx="1" fill="none" stroke="#c0c0c0" stroke-width="1.3"/><rect x="5" y="1.5" width="9.5" height="9.5" rx="1" fill="#c0c0c0"/><path d="M6.2 9.5 L9 5.5 L10.6 7.8 L11.6 6.8 L13.4 9.5 Z" fill="#2b2b2b" /></svg><svg style="position:absolute;left:1321.5px;top:879.2px;" width="10.8" height="10.8" viewBox="0 0 16 16"><path d="M5 1.5 L8.5 9 A3.6 3.6 0 1 1 1.5 9 Z" fill="#d8d8d8" /><circle cx="11.5" cy="3.3" r="1.6" fill="#d8d8d8"/><circle cx="11.8" cy="10.8" r="2.6" fill="none" stroke="#d8d8d8" stroke-width="1.5"/></svg><svg style="position:absolute;left:1321.5px;top:898.2px;" width="10.8" height="10.8" viewBox="0 0 16 16"><circle cx="8" cy="7.5" r="5.6" fill="none" stroke="#d4666f" stroke-width="1.5"/><path d="M4 5 Q7.5 4.5 8 7.5 Q6 10.5 4 9 Z M9.5 3 Q13 4 12.5 8 Q10 8 9.5 5.5 Z" fill="#d4666f" /><path d="M3.5 14.8 H12.5" fill="none" stroke="#d4666f" stroke-width="1.4" stroke-linecap="round" stroke-linejoin="round" /></svg><svg style="position:absolute;left:1321.5px;top:922.2px;" width="10.8" height="10.8" viewBox="0 0 16 16"><path d="M1.8 2.5 H14.2 V5.5 H1.8 Z M3 5.5 V14 H13 V5.5" fill="none" stroke="#e0e0e0" stroke-width="1.5" stroke-linecap="round" stroke-linejoin="round" /><rect x="5.5" y="8" width="5" height="3" rx="0.5" fill="#e0e0e0"/></svg><svg style="position:absolute;left:1321.5px;top:947px;" width="10.8" height="10.8" viewBox="0 0 16 16"><rect x="4" y="4" width="8" height="8" rx="1" fill="#e08a3c"/><path d="M1.5 5 V3 Q1.5 1.5 3 1.5 H5 M11 1.5 H13 Q14.5 1.5 14.5 3 V5 M14.5 11 V13 Q14.5 14.5 13 14.5 H11 M5 14.5 H3 Q1.5 14.5 1.5 13 V11" fill="none" stroke="#e08a3c" stroke-width="1.5" stroke-linecap="round" stroke-linejoin="round" /></svg><svg style="position:absolute;left:1321.5px;top:965.4px;" width="10.8" height="10.8" viewBox="0 0 16 16"><path d="M10.8 1.2 A4 4 0 0 0 7.2 6.8 L1.6 12.4 Q1 14.2 2.6 14.8 Q4 15 4.6 13.8 L9.8 8.6 A4 4 0 0 0 14.8 4.6 L12.4 6.6 L10 5.6 L9.8 3.2 Z" fill="#4a86d8" /></svg><svg style="position:absolute;left:1321.5px;top:984.8px;" width="10.8" height="10.8" viewBox="0 0 16 16"><circle cx="3" cy="3.5" r="1.9" fill="#4a86d8"/><path d="M5.5 3.5 H13 M4 5.5 L11.5 13 M3 6.5 V13.5" fill="none" stroke="#4a86d8" stroke-width="1.4" stroke-linecap="round" stroke-linejoin="round" /><circle cx="13" cy="3.5" r="1" fill="#4a86d8"/><circle cx="12" cy="13.3" r="1" fill="#4a86d8"/><circle cx="3" cy="13.5" r="1" fill="#4a86d8"/></svg><svg style="position:absolute;left:1321.5px;top:1003.6px;" width="10.8" height="10.8" viewBox="0 0 16 16"><circle cx="7.5" cy="8.5" r="2.6" fill="#4a86d8"/><path d="M12.2 11.5 A5.8 5.8 0 1 1 12 5.2" fill="none" stroke="#4a86d8" stroke-width="1.5" stroke-linecap="round" stroke-linejoin="round" /><circle cx="12.8" cy="3.2" r="1.5" fill="#4a86d8"/></svg><svg style="position:absolute;left:1321.5px;top:1022.6px;" width="10.8" height="10.8" viewBox="0 0 16 16"><path d="M9.2 2.2 L13.8 6.8 M9.2 2.2 Q4 3 2.6 8.8 Q2 13 6.2 13.4 Q11.8 12 13.8 6.8" fill="none" stroke="#4a86d8" stroke-width="1.5" stroke-linecap="round" stroke-linejoin="round" /><circle cx="5.8" cy="9.8" r="1.9" fill="none" stroke="#4a86d8" stroke-width="1.4"/></svg><svg style="position:absolute;left:1321.5px;top:1041.2px;" width="10.8" height="10.8" viewBox="0 0 16 16"><path d="M2.5 3 H13.5 L8 13.5 Z" fill="none" stroke="#1fb58a" stroke-width="1.6" stroke-linecap="round" stroke-linejoin="round" /><circle cx="2.5" cy="3" r="1.6" fill="#1fb58a"/><circle cx="13.5" cy="3" r="1.6" fill="#1fb58a"/><circle cx="8" cy="13.5" r="1.6" fill="#1fb58a"/></svg><svg style="position:absolute;left:1321.5px;top:1060.2px;" width="10.8" height="10.8" viewBox="0 0 16 16"><circle cx="8" cy="8" r="6.4" fill="#d4666f"/><path d="M8 8 V1.6 A6.4 6.4 0 0 1 14.4 8 Z" fill="#3a1518" /><path d="M8 8 H1.6 A6.4 6.4 0 0 0 8 14.4 Z" fill="#3a1518" /></svg><svg style="position:absolute;left:1342.2px;top:795.8px;" width="10.8" height="10.8" viewBox="0 0 16 16"><path d="M5 1.5 L8.5 9 A3.6 3.6 0 1 1 1.5 9 Z" fill="#e6e6e6" /><circle cx="11.5" cy="3.3" r="1.6" fill="#e6e6e6"/><circle cx="11.8" cy="10.8" r="2.6" fill="none" stroke="#e6e6e6" stroke-width="1.5"/></svg><div style="position:absolute;left:1358.5px;top:797.47px;height:10.66px;line-height:10.66px;font-size:8.2px;letter-spacing:-0.33px;color:#d6d6d6;white-space:pre;-webkit-text-stroke:.22px;">Scene</div><svg style="position:absolute;left:1491.6px;top:796px;" width="10" height="10" viewBox="0 0 16 16"><path d="M9.5 1.5 L14.5 6.5 L13 7 L10.5 9.5 L10.5 12 L4 5.5 L6.5 5.5 L9 3 Z M7 9 L2 14" fill="none" stroke="#8a8a8a" stroke-width="1.3" stroke-linecap="round" stroke-linejoin="round" /></svg><div style="position:absolute;left:1349.62px;top:822.17px;height:10.66px;line-height:10.66px;font-size:8.2px;letter-spacing:-0.16px;color:#d6d6d6;white-space:pre;-webkit-text-stroke:.22px;">Render Engine</div><div style="position:absolute;left:1409px;top:820.3px;width:93px;height:11.4px;background:#282828;border-radius:2.5px;border:0.6px solid #3e3e3e;"></div><div style="position:absolute;left:1413.6px;top:822.17px;height:10.66px;line-height:10.66px;font-size:8.2px;letter-spacing:-0.2px;color:#d6d6d6;white-space:pre;-webkit-text-stroke:.22px;">Cycles</div><svg style="position:absolute;left:1494.8px;top:823.2px;" width="6.4" height="6.4" viewBox="0 0 16 16"><path d="M2.5 5.5 L8 11 L13.5 5.5" fill="none" stroke="#e4e4e4" stroke-width="2.5" stroke-linecap="round" stroke-linejoin="round" /></svg><div style="position:absolute;left:1361.04px;top:838.77px;height:10.66px;line-height:10.66px;font-size:8.2px;letter-spacing:-0.14px;color:#d6d6d6;white-space:pre;-webkit-text-stroke:.22px;">Feature Set</div><div style="position:absolute;left:1409px;top:836.9px;width:93px;height:11.4px;background:#282828;border-radius:2.5px;border:0.6px solid #3e3e3e;"></div><div style="position:absolute;left:1413.6px;top:838.77px;height:10.66px;line-height:10.66px;font-size:8.2px;letter-spacing:-0.03px;color:#d6d6d6;white-space:pre;-webkit-text-stroke:.22px;">Supported</div><svg style="position:absolute;left:1494.8px;top:839.8px;" width="6.4" height="6.4" viewBox="0 0 16 16"><path d="M2.5 5.5 L8 11 L13.5 5.5" fill="none" stroke="#e4e4e4" stroke-width="2.5" stroke-linecap="round" stroke-linejoin="round" /></svg><div style="position:absolute;left:1378.16px;top:855.37px;height:10.66px;line-height:10.66px;font-size:8.2px;letter-spacing:-0.15px;color:#d6d6d6;white-space:pre;-webkit-text-stroke:.22px;">Device</div><div style="position:absolute;left:1409px;top:853.5px;width:93px;height:11.4px;background:#282828;border-radius:2.5px;border:0.6px solid #3e3e3e;"></div><div style="position:absolute;left:1413.6px;top:855.37px;height:10.66px;line-height:10.66px;font-size:8.2px;letter-spacing:-0.25px;color:#d6d6d6;white-space:pre;-webkit-text-stroke:.22px;">GPU Compute</div><svg style="position:absolute;left:1494.8px;top:856.4px;" width="6.4" height="6.4" viewBox="0 0 16 16"><path d="M2.5 5.5 L8 11 L13.5 5.5" fill="none" stroke="#e4e4e4" stroke-width="2.5" stroke-linecap="round" stroke-linejoin="round" /></svg><svg style="position:absolute;left:1408.8px;top:872px;" width="8.4" height="8.4" viewBox="0 0 16 16"><rect x="1" y="1" width="14" height="14" rx="2.5" fill="#545454"/></svg><div style="position:absolute;left:1419.8px;top:872.37px;height:10.66px;line-height:10.66px;font-size:8.2px;letter-spacing:-0.16px;color:#d6d6d6;white-space:pre;-webkit-text-stroke:.22px;">Open Shading Lang...</div><div style="position:absolute;left:1341.3px;top:890.6px;width:160.9px;height:239.4px;background:#343434;border-radius:3px;"></div><div style="position:absolute;left:1341.3px;top:890.6px;width:160.9px;height:16.7px;background:#3a3a3a;border-radius:3px 3px 0 0;"></div><svg style="position:absolute;left:1346.6px;top:895.6px;" width="6.8" height="6.8" viewBox="0 0 16 16"><path d="M2.5 5.5 L8 11 L13.5 5.5" fill="none" stroke="#e4e4e4" stroke-width="2.5" stroke-linecap="round" stroke-linejoin="round" /></svg><div style="position:absolute;left:1355.7px;top:894.77px;height:10.66px;line-height:10.66px;font-size:8.2px;letter-spacing:-0.07px;color:#d6d6d6;white-space:pre;-webkit-text-stroke:.22px;">Sampling</div><svg style="position:absolute;left:1490.8px;top:894.4px;" width="8" height="8" viewBox="0 0 16 16"><circle cx="2.5" cy="6" r="0.75" fill="#555"/><circle cx="6.2" cy="6" r="0.75" fill="#555"/><circle cx="9.9" cy="6" r="0.75" fill="#555"/><circle cx="13.6" cy="6" r="0.75" fill="#555"/><circle cx="2.5" cy="10" r="0.75" fill="#555"/><circle cx="6.2" cy="10" r="0.75" fill="#555"/><circle cx="9.9" cy="10" r="0.75" fill="#555"/><circle cx="13.6" cy="10" r="0.75" fill="#555"/></svg><div style="position:absolute;left:1341.3px;top:907.3px;width:160.9px;height:16.7px;background:#3c3c3c;"></div><svg style="position:absolute;left:1355.6px;top:912.3px;" width="6.8" height="6.8" viewBox="0 0 16 16"><path d="M2.5 5.5 L8 11 L13.5 5.5" fill="none" stroke="#e4e4e4" stroke-width="2.5" stroke-linecap="round" stroke-linejoin="round" /></svg><div style="position:absolute;left:1365px;top:911.47px;height:10.66px;line-height:10.66px;font-size:8.2px;letter-spacing:0.08px;color:#d6d6d6;white-space:pre;-webkit-text-stroke:.22px;">Viewport</div><svg style="position:absolute;left:1473.4px;top:910.1px;" width="10.4" height="10.4" viewBox="0 0 16 16"><circle cx="3" cy="3" r="1.4" fill="#e6e6e6"/><circle cx="3" cy="8" r="1.4" fill="#e6e6e6"/><circle cx="3" cy="13" r="1.4" fill="#e6e6e6"/><path d="M6.5 3 H14 M6.5 8 H14 M6.5 13 H14" fill="none" stroke="#e6e6e6" stroke-width="1.3" stroke-linecap="round" stroke-linejoin="round" /></svg><div style="position:absolute;left:1349.3px;top:931.77px;height:10.66px;line-height:10.66px;font-size:8.2px;letter-spacing:-0.11px;color:#d6d6d6;white-space:pre;-webkit-text-stroke:.22px;">Noise Thresh...</div><svg style="position:absolute;left:1410px;top:931px;" width="9.2" height="9.2" viewBox="0 0 16 16"><rect x="1" y="1" width="14" height="14" rx="2.5" fill="#4772b3"/><path d="M4 8.2 L7 11.2 L12.2 4.8" fill="none" stroke="#fff" stroke-width="2" stroke-linecap="round" stroke-linejoin="round" /></svg><div style="position:absolute;left:1423.6px;top:929.5px;width:73px;height:12.2px;background:#545454;border-radius:2.5px;"></div><div style="position:absolute;left:1447.31px;top:931.77px;height:10.66px;line-height:10.66px;font-size:8.2px;letter-spacing:0.08px;color:#e6e6e6;white-space:pre;-webkit-text-stroke:.22px;">0.1000</div><div style="position:absolute;left:1355.57px;top:948.47px;height:10.66px;line-height:10.66px;font-size:8.2px;letter-spacing:-0.17px;color:#d6d6d6;white-space:pre;-webkit-text-stroke:.22px;">Max Samples</div><div style="position:absolute;left:1410px;top:946.1px;width:86.6px;height:12.4px;background:#545454;border-radius:2.5px 2.5px 0 0;"></div><div style="position:absolute;left:1444px;top:948.47px;height:10.66px;line-height:10.66px;font-size:8.2px;letter-spacing:0.09px;color:#e6e6e6;white-space:pre;-webkit-text-stroke:.22px;">1024</div><div style="position:absolute;left:1357.76px;top:961.77px;height:10.66px;line-height:10.66px;font-size:8.2px;letter-spacing:-0.16px;color:#d6d6d6;white-space:pre;-webkit-text-stroke:.22px;">Min Samples</div><div style="position:absolute;left:1410px;top:959.2px;width:86.6px;height:12.4px;background:#545454;border-radius:0 0 2.5px 2.5px;"></div><div style="position:absolute;left:1450.97px;top:961.57px;height:10.66px;line-height:10.66px;font-size:8.2px;letter-spacing:0.09px;color:#e6e6e6;white-space:pre;-webkit-text-stroke:.22px;">0</div><div style="position:absolute;left:1410px;top:958.6px;width:86.6px;height:0.7px;background:#3a3a3a;"></div><div style="position:absolute;left:1341.3px;top:977px;width:160.9px;height:18.4px;background:#313131;"></div><svg style="position:absolute;left:1355.7px;top:983.5px;" width="6.6" height="6.6" viewBox="0 0 16 16"><path d="M5.5 3 L11 8 L5.5 13" fill="none" stroke="#ccc" stroke-width="1.8" stroke-linecap="round" stroke-linejoin="round" /></svg><svg style="position:absolute;left:1364.2px;top:982.6px;" width="8.4" height="8.4" viewBox="0 0 16 16"><rect x="1" y="1" width="14" height="14" rx="2.5" fill="#545454"/></svg><div style="position:absolute;left:1374.6px;top:982.97px;height:10.66px;line-height:10.66px;font-size:8.2px;letter-spacing:-0.13px;color:#d6d6d6;white-space:pre;-webkit-text-stroke:.22px;">Denoise</div><div style="position:absolute;left:1341.3px;top:995.4px;width:160.9px;height:16.6px;background:#3c3c3c;"></div><svg style="position:absolute;left:1355.6px;top:1000.4px;" width="6.8" height="6.8" viewBox="0 0 16 16"><path d="M2.5 5.5 L8 11 L13.5 5.5" fill="none" stroke="#e4e4e4" stroke-width="2.5" stroke-linecap="round" stroke-linejoin="round" /></svg><div style="position:absolute;left:1365px;top:999.57px;height:10.66px;line-height:10.66px;font-size:8.2px;letter-spacing:-0.28px;color:#d6d6d6;white-space:pre;-webkit-text-stroke:.22px;">Render</div><svg style="position:absolute;left:1473.4px;top:998.2px;" width="10.4" height="10.4" viewBox="0 0 16 16"><circle cx="3" cy="3" r="1.4" fill="#e6e6e6"/><circle cx="3" cy="8" r="1.4" fill="#e6e6e6"/><circle cx="3" cy="13" r="1.4" fill="#e6e6e6"/><path d="M6.5 3 H14 M6.5 8 H14 M6.5 13 H14" fill="none" stroke="#e6e6e6" stroke-width="1.3" stroke-linecap="round" stroke-linejoin="round" /></svg><div style="position:absolute;left:1349.3px;top:1019.97px;height:10.66px;line-height:10.66px;font-size:8.2px;letter-spacing:-0.11px;color:#d6d6d6;white-space:pre;-webkit-text-stroke:.22px;">Noise Thresh...</div><svg style="position:absolute;left:1410px;top:1019.2px;" width="9.2" height="9.2" viewBox="0 0 16 16"><rect x="1" y="1" width="14" height="14" rx="2.5" fill="#4772b3"/><path d="M4 8.2 L7 11.2 L12.2 4.8" fill="none" stroke="#fff" stroke-width="2" stroke-linecap="round" stroke-linejoin="round" /></svg><div style="position:absolute;left:1423.6px;top:1017.7px;width:73px;height:12.2px;background:#545454;border-radius:2.5px;"></div><div style="position:absolute;left:1447.31px;top:1019.97px;height:10.66px;line-height:10.66px;font-size:8.2px;letter-spacing:0.08px;color:#e6e6e6;white-space:pre;-webkit-text-stroke:.22px;">0.0600</div><div style="position:absolute;left:1355.57px;top:1036.97px;height:10.66px;line-height:10.66px;font-size:8.2px;letter-spacing:-0.17px;color:#d6d6d6;white-space:pre;-webkit-text-stroke:.22px;">Max Samples</div><div style="position:absolute;left:1410px;top:1034.3px;width:86.6px;height:12.6px;background:#545454;border-radius:2.5px 2.5px 0 0;"></div><div style="position:absolute;left:1446.32px;top:1036.77px;height:10.66px;line-height:10.66px;font-size:8.2px;letter-spacing:0.09px;color:#e6e6e6;white-space:pre;-webkit-text-stroke:.22px;">800</div><div style="position:absolute;left:1357.76px;top:1050.17px;height:10.66px;line-height:10.66px;font-size:8.2px;letter-spacing:-0.16px;color:#d6d6d6;white-space:pre;-webkit-text-stroke:.22px;">Min Samples</div><div style="position:absolute;left:1410px;top:1047.5px;width:86.6px;height:12.6px;background:#545454;border-radius:0;"></div><div style="position:absolute;left:1450.97px;top:1049.97px;height:10.66px;line-height:10.66px;font-size:8.2px;letter-spacing:0.09px;color:#e6e6e6;white-space:pre;-webkit-text-stroke:.22px;">0</div><div style="position:absolute;left:1367.28px;top:1063.67px;height:10.66px;line-height:10.66px;font-size:8.2px;letter-spacing:-0.14px;color:#d6d6d6;white-space:pre;-webkit-text-stroke:.22px;">Time Limit</div><div style="position:absolute;left:1410px;top:1060.9px;width:86.6px;height:12.6px;background:#545454;border-radius:0 0 2.5px 2.5px;"></div><div style="position:absolute;left:1447.72px;top:1063.37px;height:10.66px;line-height:10.66px;font-size:8.2px;letter-spacing:0.07px;color:#e6e6e6;white-space:pre;-webkit-text-stroke:.22px;">0 s</div><div style="position:absolute;left:1410px;top:1047px;width:86.6px;height:0.7px;background:#3a3a3a;"></div><div style="position:absolute;left:1410px;top:1060.4px;width:86.6px;height:0.7px;background:#3a3a3a;"></div><div style="position:absolute;left:1341.3px;top:1079.4px;width:160.9px;height:17.1px;background:#313131;"></div><svg style="position:absolute;left:1355.7px;top:1085.4px;" width="6.6" height="6.6" viewBox="0 0 16 16"><path d="M5.5 3 L11 8 L5.5 13" fill="none" stroke="#ccc" stroke-width="1.8" stroke-linecap="round" stroke-linejoin="round" /></svg><svg style="position:absolute;left:1363.8px;top:1084.1px;" width="9.2" height="9.2" viewBox="0 0 16 16"><rect x="1" y="1" width="14" height="14" rx="2.5" fill="#4772b3"/><path d="M4 8.2 L7 11.2 L12.2 4.8" fill="none" stroke="#fff" stroke-width="2" stroke-linecap="round" stroke-linejoin="round" /></svg><div style="position:absolute;left:1374.6px;top:1084.87px;height:10.66px;line-height:10.66px;font-size:8.2px;letter-spacing:-0.13px;color:#d6d6d6;white-space:pre;-webkit-text-stroke:.22px;">Denoise</div><div style="position:absolute;left:1341.3px;top:1096.5px;width:160.9px;height:16.9px;background:#3b3b3b;"></div><svg style="position:absolute;left:1355.7px;top:1102.2px;" width="6.6" height="6.6" viewBox="0 0 16 16"><path d="M5.5 3 L11 8 L5.5 13" fill="none" stroke="#ccc" stroke-width="1.8" stroke-linecap="round" stroke-linejoin="round" /></svg><div style="position:absolute;left:1365px;top:1101.67px;height:10.66px;line-height:10.66px;font-size:8.2px;letter-spacing:0.05px;color:#d6d6d6;white-space:pre;-webkit-text-stroke:.22px;">Lights</div><div style="position:absolute;left:1341.3px;top:1113.4px;width:160.9px;height:16.6px;background:#3b3b3b;border-radius:0 0 3px 3px;"></div><svg style="position:absolute;left:1355.7px;top:1119px;" width="6.6" height="6.6" viewBox="0 0 16 16"><path d="M5.5 3 L11 8 L5.5 13" fill="none" stroke="#ccc" stroke-width="1.8" stroke-linecap="round" stroke-linejoin="round" /></svg><div style="position:absolute;left:1365px;top:1118.47px;height:10.66px;line-height:10.66px;font-size:8.2px;letter-spacing:-0.11px;color:#d6d6d6;white-space:pre;-webkit-text-stroke:.22px;">Advanced</div><div style="position:absolute;left:1341.3px;top:1132.3px;width:160.9px;height:16.6px;background:#3a3a3a;border-radius:3px;"></div><svg style="position:absolute;left:1346.7px;top:1137.3px;" width="6.6" height="6.6" viewBox="0 0 16 16"><path d="M5.5 3 L11 8 L5.5 13" fill="none" stroke="#ccc" stroke-width="1.8" stroke-linecap="round" stroke-linejoin="round" /></svg><div style="position:absolute;left:1355.7px;top:1136.77px;height:10.66px;line-height:10.66px;font-size:8.2px;letter-spacing:-0.06px;color:#d6d6d6;white-space:pre;-webkit-text-stroke:.22px;">Light Paths</div><svg style="position:absolute;left:1473.4px;top:1135.4px;" width="10.4" height="10.4" viewBox="0 0 16 16"><circle cx="3" cy="3" r="1.4" fill="#e6e6e6"/><circle cx="3" cy="8" r="1.4" fill="#e6e6e6"/><circle cx="3" cy="13" r="1.4" fill="#e6e6e6"/><path d="M6.5 3 H14 M6.5 8 H14 M6.5 13 H14" fill="none" stroke="#e6e6e6" stroke-width="1.3" stroke-linecap="round" stroke-linejoin="round" /></svg><svg style="position:absolute;left:1490.8px;top:1136.4px;" width="8" height="8" viewBox="0 0 16 16"><circle cx="2.5" cy="6" r="0.75" fill="#555"/><circle cx="6.2" cy="6" r="0.75" fill="#555"/><circle cx="9.9" cy="6" r="0.75" fill="#555"/><circle cx="13.6" cy="6" r="0.75" fill="#555"/><circle cx="2.5" cy="10" r="0.75" fill="#555"/><circle cx="6.2" cy="10" r="0.75" fill="#555"/><circle cx="9.9" cy="10" r="0.75" fill="#555"/><circle cx="13.6" cy="10" r="0.75" fill="#555"/></svg><div style="position:absolute;left:1341.3px;top:1150.4px;width:160.9px;height:16.6px;background:#3a3a3a;border-radius:3px;"></div><svg style="position:absolute;left:1346.7px;top:1155.4px;" width="6.6" height="6.6" viewBox="0 0 16 16"><path d="M5.5 3 L11 8 L5.5 13" fill="none" stroke="#ccc" stroke-width="1.8" stroke-linecap="round" stroke-linejoin="round" /></svg><div style="position:absolute;left:1355.7px;top:1154.87px;height:10.66px;line-height:10.66px;font-size:8.2px;letter-spacing:-0.04px;color:#d6d6d6;white-space:pre;-webkit-text-stroke:.22px;">Volumes</div><svg style="position:absolute;left:1490.8px;top:1154.5px;" width="8" height="8" viewBox="0 0 16 16"><circle cx="2.5" cy="6" r="0.75" fill="#555"/><circle cx="6.2" cy="6" r="0.75" fill="#555"/><circle cx="9.9" cy="6" r="0.75" fill="#555"/><circle cx="13.6" cy="6" r="0.75" fill="#555"/><circle cx="2.5" cy="10" r="0.75" fill="#555"/><circle cx="6.2" cy="10" r="0.75" fill="#555"/><circle cx="9.9" cy="10" r="0.75" fill="#555"/><circle cx="13.6" cy="10" r="0.75" fill="#555"/></svg><div style="position:absolute;left:1341.3px;top:1168.5px;width:160.9px;height:16.6px;background:#3a3a3a;border-radius:3px;"></div><svg style="position:absolute;left:1346.7px;top:1173.5px;" width="6.6" height="6.6" viewBox="0 0 16 16"><path d="M5.5 3 L11 8 L5.5 13" fill="none" stroke="#ccc" stroke-width="1.8" stroke-linecap="round" stroke-linejoin="round" /></svg><div style="position:absolute;left:1355.7px;top:1172.97px;height:10.66px;line-height:10.66px;font-size:8.2px;letter-spacing:-0.23px;color:#d6d6d6;white-space:pre;-webkit-text-stroke:.22px;">Curves</div><svg style="position:absolute;left:1490.8px;top:1172.6px;" width="8" height="8" viewBox="0 0 16 16"><circle cx="2.5" cy="6" r="0.75" fill="#555"/><circle cx="6.2" cy="6" r="0.75" fill="#555"/><circle cx="9.9" cy="6" r="0.75" fill="#555"/><circle cx="13.6" cy="6" r="0.75" fill="#555"/><circle cx="2.5" cy="10" r="0.75" fill="#555"/><circle cx="6.2" cy="10" r="0.75" fill="#555"/><circle cx="9.9" cy="10" r="0.75" fill="#555"/><circle cx="13.6" cy="10" r="0.75" fill="#555"/></svg><div style="position:absolute;left:1341.3px;top:1186.7px;width:160.9px;height:16.6px;background:#3a3a3a;border-radius:3px;"></div><svg style="position:absolute;left:1346.7px;top:1191.7px;" width="6.6" height="6.6" viewBox="0 0 16 16"><path d="M5.5 3 L11 8 L5.5 13" fill="none" stroke="#ccc" stroke-width="1.8" stroke-linecap="round" stroke-linejoin="round" /></svg><svg style="position:absolute;left:1355px;top:1190.8px;" width="8.4" height="8.4" viewBox="0 0 16 16"><rect x="1" y="1" width="14" height="14" rx="2.5" fill="#545454"/></svg><div style="position:absolute;left:1365px;top:1191.17px;height:10.66px;line-height:10.66px;font-size:8.2px;letter-spacing:0.04px;color:#d6d6d6;white-space:pre;-webkit-text-stroke:.22px;">Simplify</div><svg style="position:absolute;left:1490.8px;top:1190.8px;" width="8" height="8" viewBox="0 0 16 16"><circle cx="2.5" cy="6" r="0.75" fill="#555"/><circle cx="6.2" cy="6" r="0.75" fill="#555"/><circle cx="9.9" cy="6" r="0.75" fill="#555"/><circle cx="13.6" cy="6" r="0.75" fill="#555"/><circle cx="2.5" cy="10" r="0.75" fill="#555"/><circle cx="6.2" cy="10" r="0.75" fill="#555"/><circle cx="9.9" cy="10" r="0.75" fill="#555"/><circle cx="13.6" cy="10" r="0.75" fill="#555"/></svg><div style="position:absolute;left:1341.3px;top:1204.9px;width:160.9px;height:16.6px;background:#3a3a3a;border-radius:3px;"></div><svg style="position:absolute;left:1346.7px;top:1209.9px;" width="6.6" height="6.6" viewBox="0 0 16 16"><path d="M5.5 3 L11 8 L5.5 13" fill="none" stroke="#ccc" stroke-width="1.8" stroke-linecap="round" stroke-linejoin="round" /></svg><svg style="position:absolute;left:1355px;top:1209px;" width="8.4" height="8.4" viewBox="0 0 16 16"><rect x="1" y="1" width="14" height="14" rx="2.5" fill="#545454"/></svg><div style="position:absolute;left:1365px;top:1209.37px;height:10.66px;line-height:10.66px;font-size:8.2px;letter-spacing:0.01px;color:#d6d6d6;white-space:pre;-webkit-text-stroke:.22px;">Motion Blur</div><svg style="position:absolute;left:1490.8px;top:1209px;" width="8" height="8" viewBox="0 0 16 16"><circle cx="2.5" cy="6" r="0.75" fill="#555"/><circle cx="6.2" cy="6" r="0.75" fill="#555"/><circle cx="9.9" cy="6" r="0.75" fill="#555"/><circle cx="13.6" cy="6" r="0.75" fill="#555"/><circle cx="2.5" cy="10" r="0.75" fill="#555"/><circle cx="6.2" cy="10" r="0.75" fill="#555"/><circle cx="9.9" cy="10" r="0.75" fill="#555"/><circle cx="13.6" cy="10" r="0.75" fill="#555"/></svg><div style="position:absolute;left:1341.3px;top:1223.2px;width:160.9px;height:147.8px;background:#343434;border-radius:3px 3px 0 0;"></div><div style="position:absolute;left:1341.3px;top:1223.2px;width:160.9px;height:16.8px;background:#3b3b3b;border-radius:3px 3px 0 0;"></div><svg style="position:absolute;left:1346.6px;top:1228.4px;" width="6.8" height="6.8" viewBox="0 0 16 16"><path d="M2.5 5.5 L8 11 L13.5 5.5" fill="none" stroke="#e4e4e4" stroke-width="2.5" stroke-linecap="round" stroke-linejoin="round" /></svg><div style="position:absolute;left:1355.7px;top:1227.57px;height:10.66px;line-height:10.66px;font-size:8.2px;letter-spacing:-0.02px;color:#d6d6d6;white-space:pre;-webkit-text-stroke:.22px;">Film</div><svg style="position:absolute;left:1490.8px;top:1227.2px;" width="8" height="8" viewBox="0 0 16 16"><circle cx="2.5" cy="6" r="0.75" fill="#555"/><circle cx="6.2" cy="6" r="0.75" fill="#555"/><circle cx="9.9" cy="6" r="0.75" fill="#555"/><circle cx="13.6" cy="6" r="0.75" fill="#555"/><circle cx="2.5" cy="10" r="0.75" fill="#555"/><circle cx="6.2" cy="10" r="0.75" fill="#555"/><circle cx="9.9" cy="10" r="0.75" fill="#555"/><circle cx="13.6" cy="10" r="0.75" fill="#555"/></svg><div style="position:absolute;left:1370.04px;top:1247.97px;height:10.66px;line-height:10.66px;font-size:8.2px;letter-spacing:-0.16px;color:#d6d6d6;white-space:pre;-webkit-text-stroke:.22px;">Exposure</div><div style="position:absolute;left:1410.3px;top:1245.6px;width:86.1px;height:12.2px;background:#545454;border-radius:2.5px;"></div><div style="position:absolute;left:1445.21px;top:1247.87px;height:10.66px;line-height:10.66px;font-size:8.2px;letter-spacing:0.08px;color:#e6e6e6;white-space:pre;-webkit-text-stroke:.22px;">1.00</div><div style="position:absolute;left:1341.3px;top:1264px;width:160.9px;height:16.6px;background:#3b3b3b;"></div><svg style="position:absolute;left:1355.6px;top:1269.8px;" width="6.8" height="6.8" viewBox="0 0 16 16"><path d="M2.5 5.5 L8 11 L13.5 5.5" fill="none" stroke="#e4e4e4" stroke-width="2.5" stroke-linecap="round" stroke-linejoin="round" /></svg><div style="position:absolute;left:1365px;top:1268.97px;height:10.66px;line-height:10.66px;font-size:8.2px;letter-spacing:-0.07px;color:#d6d6d6;white-space:pre;-webkit-text-stroke:.22px;">Pixel Filter</div><div style="position:absolute;left:1386.28px;top:1289.17px;height:10.66px;line-height:10.66px;font-size:8.2px;letter-spacing:-0.16px;color:#d6d6d6;white-space:pre;-webkit-text-stroke:.22px;">Type</div><div style="position:absolute;left:1410.4px;top:1287.4px;width:86px;height:11.2px;background:#282828;border-radius:2.5px;border:0.6px solid #3e3e3e;"></div><div style="position:absolute;left:1414.8px;top:1289.17px;height:10.66px;line-height:10.66px;font-size:8.2px;letter-spacing:-0.04px;color:#d6d6d6;white-space:pre;-webkit-text-stroke:.22px;">Blackman-Harris</div><svg style="position:absolute;left:1489.2px;top:1290.2px;" width="6.4" height="6.4" viewBox="0 0 16 16"><path d="M2.5 5.5 L8 11 L13.5 5.5" fill="none" stroke="#e4e4e4" stroke-width="2.5" stroke-linecap="round" stroke-linejoin="round" /></svg><div style="position:absolute;left:1383.22px;top:1303.97px;height:10.66px;line-height:10.66px;font-size:8.2px;letter-spacing:-0.16px;color:#d6d6d6;white-space:pre;-webkit-text-stroke:.22px;">Width</div><div style="position:absolute;left:1410.3px;top:1301.7px;width:86.1px;height:12.2px;background:#545454;border-radius:2.5px;"></div><div style="position:absolute;left:1439.63px;top:1303.97px;height:10.66px;line-height:10.66px;font-size:8.2px;letter-spacing:0.08px;color:#e6e6e6;white-space:pre;-webkit-text-stroke:.22px;">1.00 px</div><div style="position:absolute;left:1341.3px;top:1320px;width:160.9px;height:17.4px;background:#3b3b3b;"></div><svg style="position:absolute;left:1355.6px;top:1325.6px;" width="6.8" height="6.8" viewBox="0 0 16 16"><path d="M2.5 5.5 L8 11 L13.5 5.5" fill="none" stroke="#e4e4e4" stroke-width="2.5" stroke-linecap="round" stroke-linejoin="round" /></svg><svg style="position:absolute;left:1363.4px;top:1324.4px;" width="8.4" height="8.4" viewBox="0 0 16 16"><rect x="1" y="1" width="14" height="14" rx="2.5" fill="#545454"/></svg><div style="position:absolute;left:1374.6px;top:1324.77px;height:10.66px;line-height:10.66px;font-size:8.2px;letter-spacing:-0.12px;color:#d6d6d6;white-space:pre;-webkit-text-stroke:.22px;">Transparent</div><svg style="position:absolute;left:1410.2px;top:1344.6px;" width="8.4" height="8.4" viewBox="0 0 16 16"><rect x="1" y="1" width="14" height="14" rx="2.5" fill="#444"/></svg><div style="position:absolute;left:1421.4px;top:1344.97px;height:10.66px;line-height:10.66px;font-size:8.2px;letter-spacing:-0.15px;color:#7c7c7c;white-space:pre;-webkit-text-stroke:.22px;">Transparent Glass</div><div style="position:absolute;left:1349.4px;top:1359.67px;height:10.66px;line-height:10.66px;font-size:8.2px;letter-spacing:-0.08px;color:#7c7c7c;white-space:pre;-webkit-text-stroke:.22px;">Roughness T...</div><div style="position:absolute;left:1410.3px;top:1357.7px;width:86.1px;height:12.2px;background:#424242;border-radius:2.5px;"></div><div style="position:absolute;left:1445.21px;top:1359.97px;height:10.66px;line-height:10.66px;font-size:8.2px;letter-spacing:0.08px;color:#8a8a8a;white-space:pre;-webkit-text-stroke:.22px;">0.10</div><div style="position:absolute;left:1503.6px;top:1040px;width:1.8px;height:330px;background:#3e3e3e;border-radius:1px;"></div><div style="position:absolute;left:412px;top:1322.8px;width:474.5px;height:49.2px;background:#161616;"></div><div style="position:absolute;left:412px;top:1342px;width:474.5px;height:30px;background:#1d1d1d;"></div><div style="position:absolute;left:412px;top:1324.6px;width:474.5px;height:17.4px;background:#2d2d2d;"></div><svg style="position:absolute;left:418.5px;top:1328.1px;" width="10.6" height="10.6" viewBox="0 0 16 16"><circle cx="8" cy="8" r="6.3" fill="#e6e6e6"/><path d="M8 8 L8 3 A5 5 0 0 1 12.3 10.5 Z" fill="#222" /></svg><svg style="position:absolute;left:429.6px;top:1330.6px;" width="6.4" height="6.4" viewBox="0 0 16 16"><path d="M2.5 5.5 L8 11 L13.5 5.5" fill="none" stroke="#e4e4e4" stroke-width="2.5" stroke-linecap="round" stroke-linejoin="round" /></svg><div style="position:absolute;left:443.4px;top:1326.6px;width:44.6px;height:13.6px;background:#272727;border-radius:2.5px;border:0.6px solid #343434;"></div><div style="position:absolute;left:446.2px;top:1329.07px;height:10.66px;line-height:10.66px;font-size:8.2px;letter-spacing:-0.16px;color:#d6d6d6;white-space:pre;-webkit-text-stroke:.22px;">Playback</div><svg style="position:absolute;left:481.2px;top:1330.6px;" width="6.4" height="6.4" viewBox="0 0 16 16"><path d="M2.5 5.5 L8 11 L13.5 5.5" fill="none" stroke="#e4e4e4" stroke-width="2.5" stroke-linecap="round" stroke-linejoin="round" /></svg><div style="position:absolute;left:490.4px;top:1326.6px;width:39.8px;height:13.6px;background:#272727;border-radius:2.5px;border:0.6px solid #343434;"></div><div style="position:absolute;left:493.8px;top:1329.07px;height:10.66px;line-height:10.66px;font-size:8.2px;letter-spacing:-0.11px;color:#d6d6d6;white-space:pre;-webkit-text-stroke:.22px;">Keying</div><svg style="position:absolute;left:522.8px;top:1330.6px;" width="6.4" height="6.4" viewBox="0 0 16 16"><path d="M2.5 5.5 L8 11 L13.5 5.5" fill="none" stroke="#e4e4e4" stroke-width="2.5" stroke-linecap="round" stroke-linejoin="round" /></svg><div style="position:absolute;left:536.4px;top:1329.07px;height:10.66px;line-height:10.66px;font-size:8.2px;letter-spacing:-0.01px;color:#d6d6d6;white-space:pre;-webkit-text-stroke:.22px;">View</div><div style="position:absolute;left:564px;top:1329.07px;height:10.66px;line-height:10.66px;font-size:8.2px;letter-spacing:-0.19px;color:#d6d6d6;white-space:pre;-webkit-text-stroke:.22px;">Marker</div><div style="position:absolute;left:605.4px;top:1326.7px;width:12.4px;height:13.4px;background:#4f4f4f;border-radius:2.5px 0 0 2.5px;"></div><svg style="position:absolute;left:606.9px;top:1328.7px;" width="9.4" height="9.4" viewBox="0 0 16 16"><circle cx="8" cy="8" r="4.8" fill="none" stroke="#8c8c8c" stroke-width="1.8"/></svg><div style="position:absolute;left:618.4px;top:1326.7px;width:11.4px;height:13.4px;background:#2a2a2a;border-radius:0 2.5px 2.5px 0;"></div><svg style="position:absolute;left:621.4px;top:1331px;" width="5.6" height="5.6" viewBox="0 0 16 16"><path d="M2.5 5.5 L8 11 L13.5 5.5" fill="none" stroke="#4a4a4a" stroke-width="2.5" stroke-linecap="round" stroke-linejoin="round" /></svg><div style="position:absolute;left:635.8px;top:1326.7px;width:79.2px;height:13.4px;background:#4f4f4f;border-radius:2.5px;"></div><svg style="position:absolute;left:636.8px;top:1328.6px;" width="9.6" height="9.6" viewBox="0 0 16 16"><rect x="2.5" y="3" width="2" height="10" rx="0" fill="#f2f2f2"/><path d="M13.5 3 V13 L5.5 8 Z" fill="#f2f2f2" /></svg><svg style="position:absolute;left:649.9px;top:1328.6px;" width="9.6" height="9.6" viewBox="0 0 16 16"><path d="M5 3.6 L9.4 8 L5 12.4 L0.6 8 Z" fill="#f2f2f2" /><path d="M15.5 3.5 V12.5 L9.5 8 Z" fill="#f2f2f2" /></svg><svg style="position:absolute;left:663.6px;top:1328.6px;" width="9.6" height="9.6" viewBox="0 0 16 16"><path d="M13 2.5 V13.5 L3 8 Z" fill="#f2f2f2" /></svg><svg style="position:absolute;left:676.7px;top:1328.6px;" width="9.6" height="9.6" viewBox="0 0 16 16"><path d="M3 2.5 V13.5 L13 8 Z" fill="#f2f2f2" /></svg><svg style="position:absolute;left:690.1px;top:1328.6px;" width="9.6" height="9.6" viewBox="0 0 16 16"><path d="M11 3.6 L15.4 8 L11 12.4 L6.6 8 Z" fill="#f2f2f2" /><path d="M0.5 3.5 V12.5 L6.5 8 Z" fill="#f2f2f2" /></svg><svg style="position:absolute;left:704.5px;top:1328.6px;" width="9.6" height="9.6" viewBox="0 0 16 16"><rect x="11.5" y="3" width="2" height="10" rx="0" fill="#f2f2f2"/><path d="M2.5 3 V13 L10.5 8 Z" fill="#f2f2f2" /></svg><div style="position:absolute;left:648.3px;top:1326.7px;width:0.6px;height:13.4px;background:#3a3a3a;"></div><div style="position:absolute;left:661.5px;top:1326.7px;width:0.6px;height:13.4px;background:#3a3a3a;"></div><div style="position:absolute;left:675px;top:1326.7px;width:0.6px;height:13.4px;background:#3a3a3a;"></div><div style="position:absolute;left:688.3px;top:1326.7px;width:0.6px;height:13.4px;background:#3a3a3a;"></div><div style="position:absolute;left:702px;top:1326.7px;width:0.6px;height:13.4px;background:#3a3a3a;"></div><div style="position:absolute;left:727px;top:1326.7px;width:49px;height:13.4px;background:#545454;border-radius:2.5px;"></div><div style="position:absolute;left:747px;top:1329.07px;height:10.66px;line-height:10.66px;font-size:8.2px;letter-spacing:-0.16px;color:#e8e8e8;white-space:pre;-webkit-text-stroke:.22px;">34</div><div style="position:absolute;left:781.2px;top:1326.7px;width:12px;height:13.4px;background:#4f4f4f;border-radius:2.5px 0 0 2.5px;"></div><svg style="position:absolute;left:782.2px;top:1328.4px;" width="10" height="10" viewBox="0 0 16 16"><circle cx="8" cy="9" r="5.4" fill="none" stroke="#e6e6e6" stroke-width="1.5"/><path d="M8 9 V5.8 M8 9 L10.4 10.4 M6 1.5 H10 M12.5 3.5 L13.8 4.8" fill="none" stroke="#e6e6e6" stroke-width="1.4" stroke-linecap="round" stroke-linejoin="round" /></svg><div style="position:absolute;left:793.8px;top:1326.7px;width:59.4px;height:13.4px;background:#545454;"></div><div style="position:absolute;left:804px;top:1329.07px;height:10.66px;line-height:10.66px;font-size:8.2px;letter-spacing:-0.02px;color:#e2e2e2;white-space:pre;-webkit-text-stroke:.22px;">Start</div><div style="position:absolute;left:840.2px;top:1329.07px;height:10.66px;line-height:10.66px;font-size:8.2px;letter-spacing:-0.96px;color:#e8e8e8;white-space:pre;-webkit-text-stroke:.22px;">1</div><div style="position:absolute;left:853.8px;top:1326.7px;width:31.4px;height:13.4px;background:#545454;border-radius:0 2.5px 2.5px 0;"></div><div style="position:absolute;left:864px;top:1329.07px;height:10.66px;line-height:10.66px;font-size:8.2px;letter-spacing:-0.13px;color:#e2e2e2;white-space:pre;-webkit-text-stroke:.22px;">End</div><div style="position:absolute;left:423.58px;top:1345.87px;height:10.66px;line-height:10.66px;font-size:8.2px;letter-spacing:0.27px;color:#b8b8b8;white-space:pre;-webkit-text-stroke:.22px;">0</div><div style="position:absolute;left:456.56px;top:1345.87px;height:10.66px;line-height:10.66px;font-size:8.2px;letter-spacing:0.27px;color:#b8b8b8;white-space:pre;-webkit-text-stroke:.22px;">20</div><div style="position:absolute;left:491.95px;top:1345.87px;height:10.66px;line-height:10.66px;font-size:8.2px;letter-spacing:0.27px;color:#b8b8b8;white-space:pre;-webkit-text-stroke:.22px;">40</div><div style="position:absolute;left:527.34px;top:1345.87px;height:10.66px;line-height:10.66px;font-size:8.2px;letter-spacing:0.27px;color:#b8b8b8;white-space:pre;-webkit-text-stroke:.22px;">60</div><div style="position:absolute;left:562.73px;top:1345.87px;height:10.66px;line-height:10.66px;font-size:8.2px;letter-spacing:0.27px;color:#b8b8b8;white-space:pre;-webkit-text-stroke:.22px;">80</div><div style="position:absolute;left:595.7px;top:1345.87px;height:10.66px;line-height:10.66px;font-size:8.2px;letter-spacing:0.27px;color:#b8b8b8;white-space:pre;-webkit-text-stroke:.22px;">100</div><div style="position:absolute;left:631.09px;top:1345.87px;height:10.66px;line-height:10.66px;font-size:8.2px;letter-spacing:0.27px;color:#b8b8b8;white-space:pre;-webkit-text-stroke:.22px;">120</div><div style="position:absolute;left:666.48px;top:1345.87px;height:10.66px;line-height:10.66px;font-size:8.2px;letter-spacing:0.27px;color:#b8b8b8;white-space:pre;-webkit-text-stroke:.22px;">140</div><div style="position:absolute;left:701.87px;top:1345.87px;height:10.66px;line-height:10.66px;font-size:8.2px;letter-spacing:0.27px;color:#b8b8b8;white-space:pre;-webkit-text-stroke:.22px;">160</div><div style="position:absolute;left:737.26px;top:1345.87px;height:10.66px;line-height:10.66px;font-size:8.2px;letter-spacing:0.27px;color:#b8b8b8;white-space:pre;-webkit-text-stroke:.22px;">180</div><div style="position:absolute;left:772.65px;top:1345.87px;height:10.66px;line-height:10.66px;font-size:8.2px;letter-spacing:0.27px;color:#b8b8b8;white-space:pre;-webkit-text-stroke:.22px;">200</div><div style="position:absolute;left:808.04px;top:1345.87px;height:10.66px;line-height:10.66px;font-size:8.2px;letter-spacing:0.27px;color:#b8b8b8;white-space:pre;-webkit-text-stroke:.22px;">220</div><div style="position:absolute;left:843.43px;top:1345.87px;height:10.66px;line-height:10.66px;font-size:8.2px;letter-spacing:0.27px;color:#b8b8b8;white-space:pre;-webkit-text-stroke:.22px;">240</div><div style="position:absolute;left:429px;top:1357.2px;width:138px;height:5.6px;background:#2b2b2b;"></div><div style="position:absolute;left:446.5px;top:1357.2px;width:0.6px;height:5.6px;background:#242424;"></div><div style="position:absolute;left:481px;top:1357.2px;width:0.6px;height:5.6px;background:#242424;"></div><div style="position:absolute;left:515.5px;top:1357.2px;width:0.6px;height:5.6px;background:#242424;"></div><div style="position:absolute;left:550px;top:1357.2px;width:0.6px;height:5.6px;background:#242424;"></div><div style="position:absolute;left:417px;top:1365.2px;width:464px;height:5.2px;background:#4a4a4a;border-radius:2.6px;"></div><div style="position:absolute;left:417.6px;top:1365.8px;width:4px;height:4px;background:#1d1d1d;border-radius:2px;border:.7px solid #666;"></div><div style="position:absolute;left:876.4px;top:1365.8px;width:4px;height:4px;background:#1d1d1d;border-radius:2px;border:.7px solid #666;"></div><div style="position:absolute;left:478.3px;top:1345px;width:16.2px;height:10.3px;background:#4772b3;border-radius:2.5px;"></div><div style="position:absolute;left:481.8px;top:1345.87px;height:10.66px;line-height:10.66px;font-size:8.2px;letter-spacing:0.04px;color:#fff;white-space:pre;-webkit-text-stroke:.22px;">34</div><div style="position:absolute;left:485.9px;top:1355px;width:1.1px;height:17px;background:#4772b3;"></div><svg style="position:absolute;left:411px;top:1353.9px;" width="5" height="5" viewBox="0 0 16 16"><path d="M5.5 3 L11 8 L5.5 13" fill="none" stroke="#777" stroke-width="1.8" stroke-linecap="round" stroke-linejoin="round" /></svg><div style="position:absolute;left:886.5px;top:1323px;width:1.5px;height:49px;background:#161616;"></div><div style="position:absolute;left:888px;top:1322.8px;width:426.5px;height:49.2px;background:#161616;"></div><div style="position:absolute;left:888px;top:1342px;width:426.5px;height:30px;background:#1d1d1d;"></div><div style="position:absolute;left:888px;top:1324.6px;width:426.5px;height:17.4px;background:#2d2d2d;"></div><svg style="position:absolute;left:881.9px;top:1353.9px;" width="5" height="5" viewBox="0 0 16 16"><path d="M10.5 3 L5 8 L10.5 13" fill="none" stroke="#777" stroke-width="1.8" stroke-linecap="round" stroke-linejoin="round" /></svg><svg style="position:absolute;left:886.9px;top:1353.9px;" width="5" height="5" viewBox="0 0 16 16"><path d="M5.5 3 L11 8 L5.5 13" fill="none" stroke="#b8b8b8" stroke-width="1.8" stroke-linecap="round" stroke-linejoin="round" /></svg><svg style="position:absolute;left:895.3px;top:1328.1px;" width="10.6" height="10.6" viewBox="0 0 16 16"><circle cx="8" cy="8" r="6" fill="none" stroke="#e6e6e6" stroke-width="1.5"/><path d="M8 8 L8 2.5 M8 8 L3.5 11" fill="none" stroke="#e6e6e6" stroke-width="1.2" stroke-linecap="round" stroke-linejoin="round" /><circle cx="8" cy="8" r="1.2" fill="#e6e6e6"/></svg><svg style="position:absolute;left:906.8px;top:1330.6px;" width="6.4" height="6.4" viewBox="0 0 16 16"><path d="M2.5 5.5 L8 11 L13.5 5.5" fill="none" stroke="#e4e4e4" stroke-width="2.5" stroke-linecap="round" stroke-linejoin="round" /></svg><div style="position:absolute;left:918.3px;top:1326.6px;width:60.4px;height:13.6px;background:#272727;border-radius:2.5px;border:0.6px solid #343434;"></div><svg style="position:absolute;left:920.5px;top:1328.3px;" width="10.2" height="10.2" viewBox="0 0 16 16"><rect x="4.2" y="4.2" width="7.6" height="7.6" rx="1" fill="#e8e8e8"/><path d="M1.5 5 V3 Q1.5 1.5 3 1.5 H5 M11 1.5 H13 Q14.5 1.5 14.5 3 V5 M14.5 11 V13 Q14.5 14.5 13 14.5 H11 M5 14.5 H3 Q1.5 14.5 1.5 13 V11" fill="none" stroke="#e8e8e8" stroke-width="1.4" stroke-linecap="round" stroke-linejoin="round" /></svg><div style="position:absolute;left:934.7px;top:1329.07px;height:10.66px;line-height:10.66px;font-size:8.2px;letter-spacing:-0.15px;color:#d6d6d6;white-space:pre;-webkit-text-stroke:.22px;">Object</div><svg style="position:absolute;left:971.2px;top:1330.6px;" width="6.4" height="6.4" viewBox="0 0 16 16"><path d="M2.5 5.5 L8 11 L13.5 5.5" fill="none" stroke="#e4e4e4" stroke-width="2.5" stroke-linecap="round" stroke-linejoin="round" /></svg><div style="position:absolute;left:987px;top:1329.07px;height:10.66px;line-height:10.66px;font-size:8.2px;letter-spacing:-0.01px;color:#d6d6d6;white-space:pre;-webkit-text-stroke:.22px;">View</div><div style="position:absolute;left:1014.5px;top:1329.07px;height:10.66px;line-height:10.66px;font-size:8.2px;letter-spacing:-0.23px;color:#d6d6d6;white-space:pre;-webkit-text-stroke:.22px;">Select</div><div style="position:absolute;left:1046px;top:1329.07px;height:10.66px;line-height:10.66px;font-size:8.2px;letter-spacing:0px;color:#d6d6d6;white-space:pre;-webkit-text-stroke:.22px;">Add</div><div style="position:absolute;left:1071px;top:1329.07px;height:10.66px;line-height:10.66px;font-size:8.2px;letter-spacing:-0.15px;color:#d6d6d6;white-space:pre;-webkit-text-stroke:.22px;">Node</div><div style="position:absolute;left:1106.3px;top:1326.6px;width:53.7px;height:13.6px;background:#272727;border-radius:2.5px;border:0.6px solid #343434;"></div><div style="position:absolute;left:1111.6px;top:1329.07px;height:10.66px;line-height:10.66px;font-size:8.2px;letter-spacing:-0.13px;color:#d6d6d6;white-space:pre;-webkit-text-stroke:.22px;">Slot</div><svg style="position:absolute;left:1152.4px;top:1330.6px;" width="6.4" height="6.4" viewBox="0 0 16 16"><path d="M2.5 5.5 L8 11 L13.5 5.5" fill="none" stroke="#e4e4e4" stroke-width="2.5" stroke-linecap="round" stroke-linejoin="round" /></svg><div style="position:absolute;left:1164px;top:1326.7px;width:20.4px;height:13.4px;background:#252525;border-radius:2.5px 0 0 2.5px;border:0.6px solid #383838;"></div><svg style="position:absolute;left:1166.4px;top:1328.2px;" width="10.4" height="10.4" viewBox="0 0 16 16"><circle cx="8" cy="8" r="6.2" fill="none" stroke="#f0f0f0" stroke-width="1.4"/><path d="M8 1.8 A6.2 6.2 0 0 0 8 14.2 Z" fill="#f0f0f0" /><path d="M8 8 H14.2 A6.2 6.2 0 0 0 8 1.8 Z" fill="#f0f0f0" opacity=".55"/></svg><svg style="position:absolute;left:1177.2px;top:1330.6px;" width="6.4" height="6.4" viewBox="0 0 16 16"><path d="M2.5 5.5 L8 11 L13.5 5.5" fill="none" stroke="#e4e4e4" stroke-width="2.5" stroke-linecap="round" stroke-linejoin="round" /></svg><div style="position:absolute;left:1184.8px;top:1326.7px;width:81px;height:13.4px;background:#555;border-radius:0 2.5px 2.5px 0;"></div><svg style="position:absolute;left:1189.3px;top:1329.7px;" width="7.4" height="7.4" viewBox="0 0 16 16"><path d="M8 3 V13 M3 8 H13" fill="none" stroke="#e6e6e6" stroke-width="1.5" stroke-linecap="round" stroke-linejoin="round" /></svg><div style="position:absolute;left:1223.3px;top:1329.07px;height:10.66px;line-height:10.66px;font-size:8.2px;letter-spacing:-0.33px;color:#e8e8e8;white-space:pre;-webkit-text-stroke:.22px;">New</div><svg style="position:absolute;left:1271px;top:1328.4px;" width="10" height="10" viewBox="0 0 16 16"><path d="M9.5 1.5 L14.5 6.5 L13 7 L10.5 9.5 L10.5 12 L4 5.5 L6.5 5.5 L9 3 Z M7 9 L2 14" fill="none" stroke="#c8c8c8" stroke-width="1.3" stroke-linecap="round" stroke-linejoin="round" /></svg><div style="position:absolute;left:1294px;top:1326.7px;width:12.2px;height:13.4px;background:#4f4f4f;border-radius:2.5px;"></div><svg style="position:absolute;left:1295.2px;top:1328.6px;" width="9.6" height="9.6" viewBox="0 0 16 16"><path d="M3 13 V7 A5 5 0 0 1 13 7 V13 M6.3 13 V7.3 A1.7 1.7 0 0 1 9.7 7.3 V13" fill="none" stroke="#9a9a9a" stroke-width="1.5" stroke-linecap="round" stroke-linejoin="round" transform="rotate(35 8 8)"/></svg><svg style="position:absolute;left:1307.2px;top:1329.4px;" width="8" height="8" viewBox="0 0 16 16"><rect x="5" y="1.5" width="6" height="5" rx="0.6" fill="#f0f0f0"/><path d="M8 7.5 V14 M5 11 H11" fill="none" stroke="#f0f0f0" stroke-width="1.2" stroke-linecap="round" stroke-linejoin="round" /></svg><div style="position:absolute;left:1124px;top:1343px;width:8px;height:29px;background:#232323;"></div><div style="position:absolute;left:1125.6px;top:1348px;width:0.8px;height:21px;background:#3a3a3a;"></div><div style="position:absolute;left:1132px;top:1343.6px;width:180.5px;height:28.4px;background:#353535;border-radius:3px 3px 0 0;"></div><svg style="position:absolute;left:1137.3px;top:1349.3px;" width="6.6" height="6.6" viewBox="0 0 16 16"><path d="M2.5 5.5 L8 11 L13.5 5.5" fill="none" stroke="#e4e4e4" stroke-width="2.5" stroke-linecap="round" stroke-linejoin="round" /></svg><div style="position:absolute;left:1146.6px;top:1347.97px;height:10.66px;line-height:10.66px;font-size:8.2px;letter-spacing:0.08px;color:#d6d6d6;white-space:pre;-webkit-text-stroke:.22px;">Active Tool</div><svg style="position:absolute;left:1296px;top:1348.4px;" width="8" height="8" viewBox="0 0 16 16"><circle cx="2.5" cy="6" r="0.75" fill="#555"/><circle cx="6.2" cy="6" r="0.75" fill="#555"/><circle cx="9.9" cy="6" r="0.75" fill="#555"/><circle cx="13.6" cy="6" r="0.75" fill="#555"/><circle cx="2.5" cy="10" r="0.75" fill="#555"/><circle cx="6.2" cy="10" r="0.75" fill="#555"/><circle cx="9.9" cy="10" r="0.75" fill="#555"/><circle cx="13.6" cy="10" r="0.75" fill="#555"/></svg><div style="position:absolute;left:1141.8px;top:1364.2px;width:15.8px;height:7.8px;overflow:hidden"><svg width="15.8" height="15.8" viewBox="0 0 16 16"><rect x="1" y="1.5" width="14" height="13" rx="1.6" fill="none" stroke="#cfa65e" stroke-width="1.15" stroke-dasharray="2.6 1.5"/><path d="M6 4.2 L6 12.8 L8.1 11 L9.6 14 L11.1 13.3 L9.6 10.4 L12.4 10.2 Z" fill="#eee" /></svg></div><div style="position:absolute;left:1162.8px;top:1368.6px;width:52px;height:3.4px;overflow:hidden;white-space:pre;font-size:8.2px;line-height:8px;color:#d6d6d6;letter-spacing:.35px">Select Box</div><div style="position:absolute;left:893px;top:1367.6px;width:227px;height:2.2px;background:#333;border-radius:1.1px;"></div><div style="position:absolute;left:1313px;top:1346px;width:1.4px;height:22px;background:#3a3a3a;border-radius:1px;"></div><div style="position:absolute;left:412px;top:1372px;width:1095px;height:14px;background:#181818;"></div><svg style="position:absolute;left:416.2px;top:1374.6px;" width="10.4" height="10.4" viewBox="0 0 16 16"><rect x="3.5" y="1.5" width="9" height="13" rx="4" fill="none" stroke="#c4c4c4" stroke-width="1.3"/><path d="M3.5 7 V5.5 A4.5 4 0 0 1 8 1.5 V7 Z" fill="#c4c4c4" /><path d="M11.5 1 L14.5 1.8 M12.8 3.5 L15.3 5" fill="none" stroke="#c4c4c4" stroke-width="0.9" stroke-linecap="round" stroke-linejoin="round" /></svg><div style="position:absolute;left:429.8px;top:1375.97px;height:10.66px;line-height:10.66px;font-size:8.2px;letter-spacing:-0.41px;color:#a8a8a8;white-space:pre;-webkit-text-stroke:.22px;">Resize</div><svg style="position:absolute;left:458.4px;top:1374.6px;" width="10.4" height="10.4" viewBox="0 0 16 16"><rect x="3.5" y="1.5" width="9" height="13" rx="4" fill="none" stroke="#c4c4c4" stroke-width="1.3"/><path d="M12.5 7 V5.5 A4.5 4 0 0 0 8 1.5 V7 Z" fill="#c4c4c4" /></svg><div style="position:absolute;left:470.4px;top:1375.97px;height:10.66px;line-height:10.66px;font-size:8.2px;letter-spacing:-0.04px;color:#a8a8a8;white-space:pre;-webkit-text-stroke:.22px;">Options</div><div style="position:absolute;left:1482.8px;top:1375.97px;height:10.66px;line-height:10.66px;font-size:8.2px;letter-spacing:-0.09px;color:#9a9a9a;white-space:pre;-webkit-text-stroke:.22px;">4.3.2</div><div id="th0" style="position:absolute;left:412px;top:1527.5px;width:121.4px;height:121.3px;overflow:hidden;background:#222"><svg width="121.4" height="121.3" viewBox="0 0 121.4 121.3" style="display:block"><defs><filter id="tb0" x="-5%" y="-5%" width="110%" height="110%"><feGaussianBlur color-interpolation-filters="sRGB" stdDeviation="0.35"/></filter><filter id="tc0" x="-20%" y="-20%" width="140%" height="140%"><feGaussianBlur color-interpolation-filters="sRGB" stdDeviation="2.5"/></filter></defs><g filter="url(#tb0)"><rect width="121.4" height="121.3" fill="#9a9b9b"/><rect x="0" y="0" width="121.47" height="7.57" fill="#2b2b2b" /><rect x="16.69" y="0.96" width="2.6" height="0.74" fill="#777" opacity="0.6"/><rect x="90.74" y="0.96" width="1.3" height="0.74" fill="#777" opacity="0.6"/><rect x="59.17" y="0.96" width="1.73" height="0.74" fill="#777" opacity="0.6"/><rect x="77.54" y="0.96" width="2.48" height="0.74" fill="#777" opacity="0.6"/><rect x="11.92" y="0.96" width="0.8" height="0.74" fill="#777" opacity="0.6"/><rect x="99.21" y="0.96" width="1.69" height="0.74" fill="#777" opacity="0.6"/><rect x="90.56" y="0.96" width="0.74" height="0.74" fill="#777" opacity="0.6"/><rect x="53.28" y="0.96" width="2.33" height="0.74" fill="#777" opacity="0.6"/><rect x="27.8" y="0.96" width="2.82" height="0.74" fill="#777" opacity="0.6"/><rect x="106.93" y="0.96" width="0.8" height="0.74" fill="#777" opacity="0.6"/><rect x="3.88" y="0.96" width="1.93" height="0.74" fill="#777" opacity="0.6"/><rect x="111.37" y="0.96" width="1.58" height="0.74" fill="#777" opacity="0.6"/><rect x="26.36" y="0.96" width="1.67" height="0.74" fill="#777" opacity="0.6"/><rect x="4.3" y="0.96" width="1.22" height="0.74" fill="#777" opacity="0.6"/><rect x="52.4" y="0.96" width="1.83" height="0.74" fill="#777" opacity="0.6"/><rect x="28.3" y="0.96" width="1.24" height="0.74" fill="#777" opacity="0.6"/><rect x="26.62" y="0.96" width="1.75" height="0.74" fill="#777" opacity="0.6"/><rect x="34.97" y="0.96" width="0.78" height="0.74" fill="#777" opacity="0.6"/><rect x="99.42" y="0.96" width="1.96" height="0.74" fill="#777" opacity="0.6"/><rect x="76.45" y="0.96" width="1.15" height="0.74" fill="#777" opacity="0.6"/><rect x="117.65" y="0.96" width="2.63" height="0.74" fill="#777" opacity="0.6"/><rect x="15.1" y="0.96" width="1.47" height="0.74" fill="#777" opacity="0.6"/><rect x="85.76" y="3.53" width="2.3" height="0.74" fill="#8a8a8a" opacity="0.6"/><rect x="111.05" y="3.53" width="1.67" height="0.74" fill="#8a8a8a" opacity="0.6"/><rect x="98.53" y="3.53" width="2.21" height="0.74" fill="#8a8a8a" opacity="0.6"/><rect x="36.57" y="3.53" width="2.03" height="0.74" fill="#8a8a8a" opacity="0.6"/><rect x="104.7" y="3.53" width="2.6" height="0.74" fill="#8a8a8a" opacity="0.6"/><rect x="60.33" y="3.53" width="2.03" height="0.74" fill="#8a8a8a" opacity="0.6"/><rect x="4.94" y="3.53" width="1.27" height="0.74" fill="#8a8a8a" opacity="0.6"/><rect x="94.69" y="3.53" width="1.65" height="0.74" fill="#8a8a8a" opacity="0.6"/><rect x="21.24" y="3.53" width="1.95" height="0.74" fill="#8a8a8a" opacity="0.6"/><rect x="83.59" y="3.53" width="2.22" height="0.74" fill="#8a8a8a" opacity="0.6"/><rect x="44.97" y="3.53" width="1.7" height="0.74" fill="#8a8a8a" opacity="0.6"/><rect x="60.7" y="3.53" width="2.45" height="0.74" fill="#8a8a8a" opacity="0.6"/><rect x="62.17" y="3.53" width="1.6" height="0.74" fill="#8a8a8a" opacity="0.6"/><rect x="58.49" y="3.53" width="0.8" height="0.74" fill="#8a8a8a" opacity="0.6"/><rect x="6" y="3.53" width="2.29" height="0.74" fill="#8a8a8a" opacity="0.6"/><rect x="116.55" y="3.53" width="2.04" height="0.74" fill="#8a8a8a" opacity="0.6"/><rect x="47.19" y="3.53" width="1.11" height="0.74" fill="#8a8a8a" opacity="0.6"/><rect x="59.97" y="3.53" width="2.9" height="0.74" fill="#8a8a8a" opacity="0.6"/><rect x="91.53" y="3.53" width="1.93" height="0.74" fill="#8a8a8a" opacity="0.6"/><rect x="102.09" y="3.53" width="1.25" height="0.74" fill="#8a8a8a" opacity="0.6"/><rect x="61.33" y="3.53" width="2.84" height="0.74" fill="#8a8a8a" opacity="0.6"/><rect x="68.86" y="3.53" width="1.75" height="0.74" fill="#8a8a8a" opacity="0.6"/><rect x="32.56" y="3.53" width="1.94" height="0.74" fill="#8a8a8a" opacity="0.6"/><rect x="113.48" y="3.53" width="0.75" height="0.74" fill="#8a8a8a" opacity="0.6"/><rect x="93.08" y="3.53" width="2.55" height="0.74" fill="#8a8a8a" opacity="0.6"/><rect x="105.14" y="3.53" width="2.37" height="0.74" fill="#8a8a8a" opacity="0.6"/><rect x="34.71" y="5" width="38.24" height="1.84" fill="#151515" /><rect x="74.53" y="5.37" width="1.88" height="1.03" fill="#eee" opacity="0.8"/><rect x="63.24" y="5.37" width="1.68" height="1.03" fill="#eee" opacity="0.8"/><rect x="40.21" y="5.37" width="2.65" height="1.03" fill="#eee" opacity="0.8"/><rect x="63.63" y="5.37" width="1.18" height="1.03" fill="#eee" opacity="0.8"/><rect x="60.66" y="5.37" width="1.8" height="1.03" fill="#eee" opacity="0.8"/><rect x="53.91" y="5.37" width="1.5" height="1.03" fill="#eee" opacity="0.8"/><rect x="62.2" y="5.37" width="2.11" height="1.03" fill="#eee" opacity="0.8"/><rect x="65.57" y="5.37" width="1.75" height="1.03" fill="#eee" opacity="0.8"/><rect x="38.92" y="5.37" width="1.24" height="1.03" fill="#eee" opacity="0.8"/><rect x="45.73" y="5.37" width="2.02" height="1.03" fill="#eee" opacity="0.8"/><rect x="76.9" y="5.37" width="2.5" height="1.03" fill="#eee" opacity="0.8"/><rect x="73.99" y="5.37" width="2.54" height="1.03" fill="#eee" opacity="0.8"/><rect x="49.29" y="5.37" width="2.59" height="1.03" fill="#eee" opacity="0.8"/><rect x="68.33" y="5.37" width="0.92" height="1.03" fill="#eee" opacity="0.8"/><rect x="102.35" y="2.06" width="1.47" height="2.21" fill="#4a7ad0" /><rect x="114.12" y="2.06" width="3.68" height="2.21" fill="#6aa0e0" /><rect x="0.51" y="7.57" width="4.04" height="29.78" fill="#2a2a2a" /><rect x="0.88" y="17.87" width="3.38" height="2.94" fill="#4a7ad0" /><rect x="1.47" y="9.04" width="2.21" height="1.62" fill="#d8d8d8" opacity=".7"/><rect x="1.47" y="12.35" width="2.21" height="1.62" fill="#d8d8d8" opacity=".7"/><rect x="1.47" y="15.29" width="2.21" height="1.62" fill="#d8d8d8" opacity=".7"/><rect x="1.47" y="22.28" width="2.21" height="1.62" fill="#d8d8d8" opacity=".7"/><rect x="1.47" y="25.59" width="2.21" height="1.62" fill="#d8d8d8" opacity=".7"/><rect x="1.47" y="28.53" width="2.21" height="1.62" fill="#d8d8d8" opacity=".7"/><rect x="1.47" y="31.84" width="2.21" height="1.62" fill="#d8d8d8" opacity=".7"/><rect x="1.47" y="34.78" width="2.21" height="1.62" fill="#d8d8d8" opacity=".7"/><circle cx="117.06" cy="8.82" r="0.81" fill="#3a78d0" /><circle cx="114.12" cy="11.25" r="0.81" fill="#c03a4a" /><circle cx="116.91" cy="11.25" r="0.81" fill="#7ab020" /><circle cx="119.85" cy="11.25" r="0.81" fill="#d04a5a" /><circle cx="117.06" cy="14.19" r="0.81" fill="#3a78d0" /><circle cx="119.41" cy="17.5" r="0.88" fill="#707070" /><circle cx="119.41" cy="21.54" r="0.88" fill="#707070" /><circle cx="119.41" cy="24.12" r="0.88" fill="#707070" /><polygon points="56.03,11.99 61.91,12.35 67.79,22.65 67.94,44.71 64.12,49.12 62.65,54.26 59.71,57.21 64.12,61.62 61.91,67.5 58.24,68.24 59.71,76.32 46.47,74.85 45,67.5 44.26,54.26 41.32,37.35 45,22.65 49.41,17.5" fill="#a7a8a8" /><polyline points="56.03,11.99 49.41,17.5 45,22.65 41.69,37.35 44.26,49.12" fill="none" stroke="#8c8d8d" stroke-width="0.45" stroke-linecap="round" stroke-linejoin="round" stroke-dasharray="1 1.2"/><polygon points="67.79,22.65 73.31,27.79 74.04,37.35 67.06,70.44 61.91,77.79 64.12,61.62 67.43,49.12 67.94,44.71" fill="#b4b5b5" /><polygon points="73.31,21.18 81.03,28.53 81.4,37.35 71.47,74.85 67.79,72.65 74.04,37.35 73.31,27.79" fill="#a2a3a3" /><polyline points="62.28,10.15 71.47,20.44 81.03,28.53 81.4,37.35 71.47,74.85" fill="none" stroke="#3c3c3c" stroke-width="0.55" stroke-linecap="round" stroke-linejoin="round" /><polyline points="63.75,12.72 73.31,27.79 73.82,37.35 67.79,57.94 64.12,72.65 61.18,80 58.24,88.09" fill="none" stroke="#343434" stroke-width="1.0" stroke-linecap="round" stroke-linejoin="round" /><polyline points="67.79,22.65 67.94,44.71 65.22,46.18 63.75,52.06 60.07,55.74 60.81,58.68 64.49,59.41 62.65,66.76 58.97,68.24" fill="none" stroke="#4a4a4a" stroke-width="0.5" stroke-linecap="round" stroke-linejoin="round" /><polyline points="65.96,47.65 64.49,53.53" fill="none" stroke="#3a3a3a" stroke-width="0.6" stroke-linecap="round" stroke-linejoin="round" /><polyline points="74.78,49.12 73.31,54.26" fill="none" stroke="#3a3a3a" stroke-width="0.7" stroke-linecap="round" stroke-linejoin="round" /><polyline points="67.79,58.31 70.37,58.53" fill="none" stroke="#3a3a3a" stroke-width="0.7" stroke-linecap="round" stroke-linejoin="round" /><polyline points="43.9,48.38 45,53.53" fill="none" stroke="#3a3a3a" stroke-width="0.7" stroke-linecap="round" stroke-linejoin="round" /><polyline points="45.74,66.76 50.15,67.13" fill="none" stroke="#666" stroke-width="0.4" stroke-linecap="round" stroke-linejoin="round" /><ellipse cx="62.28" cy="10.51" rx="1.6" ry="2.6" fill="#4a4a4a"/><circle cx="62.43" cy="10.74" r="0.74" fill="#c8c8c8" /><circle cx="54.19" cy="33.31" r="2.5" fill="none" stroke="#4a4a4a" stroke-width=".5"/><circle cx="54.19" cy="33.31" r="1.03" fill="none" stroke="#7a7a7a" stroke-width=".3"/><circle cx="53.46" cy="66.76" r="3.38" fill="#b0b1b1" stroke="#4a4a4a" stroke-width=".5"/><circle cx="53.46" cy="66.76" r="1.62" fill="none" stroke="#7a7a7a" stroke-width=".3"/><polygon points="47.21,74.85 59.71,76.32 58.24,82.94 49.41,84.41" fill="#a2a3a3" /><path d="M53.82 83.68 Q45 88.09 46.47 97.65 Q50.88 107.94 59.71 106.47 Q67.06 102.79 66.32 91.03 L61.91 92.5 Q62.65 99.12 57.5 99.85 Q52.35 97.65 58.24 87.35 Z" fill="#b3b4b4" stroke="#8a8b8b" stroke-width=".3"/><path d="M58.6 86.62 Q51.62 96.18 57.5 99.85 Q60.07 99.12 58.24 96.18 Q57.5 91.76 61.54 85.88 Z" fill="#3a3a3a"/><path d="M66.32 91.03 Q69.26 99.12 62.28 105.74 L64.49 101.32 Q65.22 96.18 64.49 91.76 Z" fill="#444"/><rect x="0" y="113.46" width="121.47" height="7.72" fill="#262626" /><rect x="6.46" y="114.56" width="0.77" height="0.66" fill="#9a9a9a" opacity="0.55"/><rect x="90.67" y="114.56" width="1.29" height="0.66" fill="#9a9a9a" opacity="0.55"/><rect x="17.04" y="114.56" width="2.11" height="0.66" fill="#9a9a9a" opacity="0.55"/><rect x="43.81" y="114.56" width="0.89" height="0.66" fill="#9a9a9a" opacity="0.55"/><rect x="22.75" y="114.56" width="1.9" height="0.66" fill="#9a9a9a" opacity="0.55"/><rect x="23.72" y="114.56" width="1.34" height="0.66" fill="#9a9a9a" opacity="0.55"/><rect x="85.66" y="114.56" width="1.74" height="0.66" fill="#9a9a9a" opacity="0.55"/><rect x="41.26" y="114.56" width="1.78" height="0.66" fill="#9a9a9a" opacity="0.55"/><rect x="7.25" y="114.56" width="1.59" height="0.66" fill="#9a9a9a" opacity="0.55"/><rect x="52.53" y="114.56" width="1.15" height="0.66" fill="#9a9a9a" opacity="0.55"/><rect x="16.95" y="114.56" width="2.72" height="0.66" fill="#9a9a9a" opacity="0.55"/><rect x="62.7" y="114.56" width="1.2" height="0.66" fill="#9a9a9a" opacity="0.55"/><rect x="73.58" y="114.56" width="2.54" height="0.66" fill="#9a9a9a" opacity="0.55"/><rect x="6.93" y="114.56" width="0.77" height="0.66" fill="#9a9a9a" opacity="0.55"/><rect x="21.25" y="114.56" width="2.32" height="0.66" fill="#9a9a9a" opacity="0.55"/><rect x="22.82" y="114.56" width="2.29" height="0.66" fill="#9a9a9a" opacity="0.55"/><rect x="81.85" y="114.56" width="1.94" height="0.66" fill="#9a9a9a" opacity="0.55"/><rect x="29.7" y="114.56" width="2.89" height="0.66" fill="#9a9a9a" opacity="0.55"/><rect x="95.49" y="114.56" width="1.87" height="0.66" fill="#9a9a9a" opacity="0.55"/><rect x="30" y="114.56" width="2.17" height="0.66" fill="#9a9a9a" opacity="0.55"/><rect x="49.57" y="114.56" width="2.01" height="0.66" fill="#9a9a9a" opacity="0.55"/><rect x="41.17" y="114.56" width="2.13" height="0.66" fill="#9a9a9a" opacity="0.55"/><rect x="11.26" y="114.56" width="1.39" height="0.66" fill="#9a9a9a" opacity="0.55"/><rect x="114.87" y="114.56" width="2.67" height="0.66" fill="#9a9a9a" opacity="0.55"/><rect x="39.48" y="114.56" width="2.63" height="0.66" fill="#9a9a9a" opacity="0.55"/><rect x="39.93" y="114.56" width="2.81" height="0.66" fill="#9a9a9a" opacity="0.55"/><rect x="89.33" y="114.56" width="1.65" height="0.66" fill="#9a9a9a" opacity="0.55"/><rect x="33.32" y="114.56" width="0.75" height="0.66" fill="#9a9a9a" opacity="0.55"/><rect x="104.71" y="114.56" width="0.82" height="0.66" fill="#9a9a9a" opacity="0.55"/><rect x="97.95" y="114.56" width="2.86" height="0.66" fill="#9a9a9a" opacity="0.55"/><rect x="69.55" y="114.56" width="1.11" height="0.66" fill="#9a9a9a" opacity="0.55"/><rect x="103.46" y="114.56" width="2.88" height="0.66" fill="#9a9a9a" opacity="0.55"/><rect x="84.8" y="114.56" width="1.86" height="0.66" fill="#9a9a9a" opacity="0.55"/><rect x="47.64" y="114.56" width="1.5" height="0.66" fill="#9a9a9a" opacity="0.55"/><rect x="30.29" y="114.34" width="10.29" height="1.18" fill="#e0e0e0" /><rect x="76.48" y="117.5" width="2.22" height="0.66" fill="#8a8a8a" opacity="0.5"/><rect x="88.51" y="117.5" width="1.16" height="0.66" fill="#8a8a8a" opacity="0.5"/><rect x="71.12" y="117.5" width="2.2" height="0.66" fill="#8a8a8a" opacity="0.5"/><rect x="81.26" y="117.5" width="1.84" height="0.66" fill="#8a8a8a" opacity="0.5"/><rect x="82.81" y="117.5" width="2.66" height="0.66" fill="#8a8a8a" opacity="0.5"/><rect x="113.22" y="117.5" width="0.78" height="0.66" fill="#8a8a8a" opacity="0.5"/><rect x="76.22" y="117.5" width="1.46" height="0.66" fill="#8a8a8a" opacity="0.5"/><rect x="117.84" y="117.5" width="2.46" height="0.66" fill="#8a8a8a" opacity="0.5"/><rect x="83.54" y="117.5" width="1.21" height="0.66" fill="#8a8a8a" opacity="0.5"/><rect x="101.29" y="117.5" width="2.58" height="0.66" fill="#8a8a8a" opacity="0.5"/><rect x="114.94" y="117.5" width="1.49" height="0.66" fill="#8a8a8a" opacity="0.5"/><rect x="112.3" y="117.5" width="2.25" height="0.66" fill="#8a8a8a" opacity="0.5"/><rect x="91.24" y="117.5" width="2.91" height="0.66" fill="#8a8a8a" opacity="0.5"/><rect x="78.01" y="117.5" width="2.34" height="0.66" fill="#8a8a8a" opacity="0.5"/><rect x="70.07" y="117.5" width="1.11" height="0.66" fill="#8a8a8a" opacity="0.5"/><rect x="113.82" y="117.5" width="1.21" height="0.66" fill="#8a8a8a" opacity="0.5"/><rect x="85.81" y="117.13" width="7.72" height="1.32" fill="#2f6a3a" /><rect x="96.47" y="117.13" width="5.15" height="1.32" fill="#5a3030" /><rect x="0.88" y="116.76" width="2.94" height="1.84" fill="#3a6ac0" /><rect x="1.25" y="114.19" width="1.47" height="1.25" fill="#eee" /></g></svg></div><div id="th1" style="position:absolute;left:551.1px;top:1527.5px;width:121.4px;height:121.3px;overflow:hidden;background:#222"><svg width="121.4" height="121.3" viewBox="0 0 121.4 121.3" style="display:block"><defs><filter id="tb1" x="-5%" y="-5%" width="110%" height="110%"><feGaussianBlur color-interpolation-filters="sRGB" stdDeviation="0.35"/></filter><filter id="tc1" x="-20%" y="-20%" width="140%" height="140%"><feGaussianBlur color-interpolation-filters="sRGB" stdDeviation="2.5"/></filter><linearGradient id="sky1" x1="0" y1="0" x2="0" y2="1"><stop offset="0" stop-color="#e4e8ea"/><stop offset=".4" stop-color="#d3dadd"/><stop offset="1" stop-color="#8e9ca3"/></linearGradient><linearGradient id="mt1" x1="0" y1="0" x2="0" y2="1"><stop offset="0" stop-color="#83939b"/><stop offset=".4" stop-color="#4a5b64"/><stop offset=".75" stop-color="#2a363d"/><stop offset="1" stop-color="#1f2a30"/></linearGradient></defs><g filter="url(#tb1)"><rect width="121.4" height="121.3" fill="#1c1c1c"/><rect x="2.21" y="1.69" width="10.66" height="1.47" fill="#8a8a8a" opacity=".8"/><rect x="43.16" y="1.99" width="2.83" height="0.59" fill="#777" opacity="0.6"/><rect x="16.04" y="1.99" width="0.92" height="0.59" fill="#777" opacity="0.6"/><rect x="39.53" y="1.99" width="2.36" height="0.59" fill="#777" opacity="0.6"/><rect x="34.53" y="1.99" width="1.42" height="0.59" fill="#777" opacity="0.6"/><rect x="32.61" y="1.99" width="2.07" height="0.59" fill="#777" opacity="0.6"/><rect x="31.86" y="1.99" width="1.08" height="0.59" fill="#777" opacity="0.6"/><rect x="27.32" y="1.99" width="1.6" height="0.59" fill="#777" opacity="0.6"/><rect x="36.13" y="1.99" width="2.93" height="0.59" fill="#777" opacity="0.6"/><rect x="0" y="10.66" width="118.01" height="0.74" fill="#161616" /><rect x="0" y="17.28" width="118.01" height="1.1" fill="#222" /><rect x="0.37" y="20.96" width="117.65" height="66.18" fill="url(#sky1)" /><polygon points="20.96,45.96 37.13,46.69 51.84,51.84 59.93,55.51 70.22,49.63 84.93,45.96 99.63,44.49 99.63,66.54 20.96,66.54" fill="#8a9ca5" opacity=".75" filter="url(#tc1)"/><polygon points="0.37,41.54 6.25,40.81 12.13,42.43 18.01,42.13 24.63,44.85 31.25,49.26 40.07,51.1 48.9,55.51 57.72,63.97 63.6,87.13 0.37,87.13" fill="url(#mt1)" /><polygon points="118.01,43.38 112.13,44.85 103.31,43.75 95.96,42.43 90.07,45.96 81.25,49.26 72.43,55.51 63.6,61.4 59.19,66.54 56.25,87.13 118.01,87.13" fill="url(#mt1)" /><polygon points="0.37,66.54 29.78,72.43 59.19,73.9 88.6,72.43 118.01,68.01 118.01,87.13 0.37,87.13" fill="#25323a" opacity=".85"/><polyline points="42.29,56.15 45.4,58.14" fill="none" stroke="#dfe6e9" stroke-width="0.32" stroke-linecap="round" stroke-linejoin="round" opacity=".6"/><polyline points="2.66,44.38 5.84,46.53" fill="none" stroke="#dfe6e9" stroke-width="0.32" stroke-linecap="round" stroke-linejoin="round" opacity=".6"/><polyline points="17.59,64.08 20.99,67.04" fill="none" stroke="#dfe6e9" stroke-width="0.32" stroke-linecap="round" stroke-linejoin="round" opacity=".6"/><polyline points="15.21,46.87 18.55,51.27" fill="none" stroke="#dfe6e9" stroke-width="0.32" stroke-linecap="round" stroke-linejoin="round" opacity=".6"/><polyline points="39.87,61.91 44.04,66.01" fill="none" stroke="#dfe6e9" stroke-width="0.32" stroke-linecap="round" stroke-linejoin="round" opacity=".6"/><polyline points="34.2,61.75 36.97,66.1" fill="none" stroke="#dfe6e9" stroke-width="0.32" stroke-linecap="round" stroke-linejoin="round" opacity=".6"/><polyline points="33.81,60.05 36.98,62.91" fill="none" stroke="#dfe6e9" stroke-width="0.32" stroke-linecap="round" stroke-linejoin="round" opacity=".6"/><polyline points="22.36,64.83 25.67,68.69" fill="none" stroke="#dfe6e9" stroke-width="0.32" stroke-linecap="round" stroke-linejoin="round" opacity=".6"/><polyline points="16.46,63.87 21.24,66.5" fill="none" stroke="#dfe6e9" stroke-width="0.32" stroke-linecap="round" stroke-linejoin="round" opacity=".6"/><polyline points="25.73,64.73 29.86,67.44" fill="none" stroke="#dfe6e9" stroke-width="0.32" stroke-linecap="round" stroke-linejoin="round" opacity=".6"/><polyline points="10.73,51.15 14.77,52.8" fill="none" stroke="#dfe6e9" stroke-width="0.32" stroke-linecap="round" stroke-linejoin="round" opacity=".6"/><polyline points="42.64,59.85 45.96,62.66" fill="none" stroke="#dfe6e9" stroke-width="0.32" stroke-linecap="round" stroke-linejoin="round" opacity=".6"/><polyline points="29.36,57.15 31.98,58.94" fill="none" stroke="#dfe6e9" stroke-width="0.32" stroke-linecap="round" stroke-linejoin="round" opacity=".6"/><polyline points="23.31,65.04 27.07,66.4" fill="none" stroke="#dfe6e9" stroke-width="0.32" stroke-linecap="round" stroke-linejoin="round" opacity=".6"/><polyline points="36.69,60.3 41.5,62.03" fill="none" stroke="#dfe6e9" stroke-width="0.32" stroke-linecap="round" stroke-linejoin="round" opacity=".6"/><polyline points="10.93,63.71 12.8,66.54" fill="none" stroke="#dfe6e9" stroke-width="0.32" stroke-linecap="round" stroke-linejoin="round" opacity=".6"/><polyline points="10.23,63.82 13.26,67.3" fill="none" stroke="#dfe6e9" stroke-width="0.32" stroke-linecap="round" stroke-linejoin="round" opacity=".6"/><polyline points="2.49,52.01 4.59,55.34" fill="none" stroke="#dfe6e9" stroke-width="0.32" stroke-linecap="round" stroke-linejoin="round" opacity=".6"/><polyline points="4.7,65.51 6.26,69.02" fill="none" stroke="#dfe6e9" stroke-width="0.32" stroke-linecap="round" stroke-linejoin="round" opacity=".6"/><polyline points="2.02,49.58 6.48,51.2" fill="none" stroke="#dfe6e9" stroke-width="0.32" stroke-linecap="round" stroke-linejoin="round" opacity=".6"/><polyline points="9.07,59.51 11.96,60.76" fill="none" stroke="#dfe6e9" stroke-width="0.32" stroke-linecap="round" stroke-linejoin="round" opacity=".6"/><polyline points="2.68,51.6 6.41,55.16" fill="none" stroke="#dfe6e9" stroke-width="0.32" stroke-linecap="round" stroke-linejoin="round" opacity=".6"/><polyline points="6.01,51.44 7.59,54.02" fill="none" stroke="#dfe6e9" stroke-width="0.32" stroke-linecap="round" stroke-linejoin="round" opacity=".6"/><polyline points="34.33,60.62 39.12,64.22" fill="none" stroke="#dfe6e9" stroke-width="0.32" stroke-linecap="round" stroke-linejoin="round" opacity=".6"/><polyline points="38.52,59.83 41.73,61.68" fill="none" stroke="#dfe6e9" stroke-width="0.32" stroke-linecap="round" stroke-linejoin="round" opacity=".6"/><polyline points="5.53,53.96 10.22,55.48" fill="none" stroke="#dfe6e9" stroke-width="0.32" stroke-linecap="round" stroke-linejoin="round" opacity=".6"/><polyline points="26.48,52.71 29.84,54.29" fill="none" stroke="#dfe6e9" stroke-width="0.32" stroke-linecap="round" stroke-linejoin="round" opacity=".6"/><polyline points="27.4,53.32 28.93,56.27" fill="none" stroke="#dfe6e9" stroke-width="0.32" stroke-linecap="round" stroke-linejoin="round" opacity=".6"/><polyline points="7.2,45.04 8.8,46.68" fill="none" stroke="#dfe6e9" stroke-width="0.32" stroke-linecap="round" stroke-linejoin="round" opacity=".6"/><polyline points="5.26,58.23 8.6,62.58" fill="none" stroke="#dfe6e9" stroke-width="0.32" stroke-linecap="round" stroke-linejoin="round" opacity=".6"/><polyline points="41.63,66.42 43.95,68.99" fill="none" stroke="#dfe6e9" stroke-width="0.32" stroke-linecap="round" stroke-linejoin="round" opacity=".6"/><polyline points="11.98,57.23 15.75,60.98" fill="none" stroke="#dfe6e9" stroke-width="0.32" stroke-linecap="round" stroke-linejoin="round" opacity=".6"/><polyline points="19.45,55.74 20.94,56.96" fill="none" stroke="#dfe6e9" stroke-width="0.32" stroke-linecap="round" stroke-linejoin="round" opacity=".6"/><polyline points="5.43,47.89 7.75,49.72" fill="none" stroke="#dfe6e9" stroke-width="0.32" stroke-linecap="round" stroke-linejoin="round" opacity=".6"/><polyline points="23.69,54.34 26.3,57.56" fill="none" stroke="#dfe6e9" stroke-width="0.32" stroke-linecap="round" stroke-linejoin="round" opacity=".6"/><polyline points="10.32,64.41 15.33,67.93" fill="none" stroke="#dfe6e9" stroke-width="0.32" stroke-linecap="round" stroke-linejoin="round" opacity=".6"/><polyline points="19.92,55.41 23.53,56.68" fill="none" stroke="#dfe6e9" stroke-width="0.32" stroke-linecap="round" stroke-linejoin="round" opacity=".6"/><polyline points="19.24,55.72 21.37,57.13" fill="none" stroke="#dfe6e9" stroke-width="0.32" stroke-linecap="round" stroke-linejoin="round" opacity=".6"/><polyline points="23.63,64.75 27.34,66.81" fill="none" stroke="#dfe6e9" stroke-width="0.32" stroke-linecap="round" stroke-linejoin="round" opacity=".6"/><polyline points="1.93,59.37 3.77,61.49" fill="none" stroke="#dfe6e9" stroke-width="0.32" stroke-linecap="round" stroke-linejoin="round" opacity=".6"/><polyline points="37.57,59.08 39.1,61.68" fill="none" stroke="#dfe6e9" stroke-width="0.32" stroke-linecap="round" stroke-linejoin="round" opacity=".6"/><polyline points="18.92,54.82 21.16,57.88" fill="none" stroke="#dfe6e9" stroke-width="0.32" stroke-linecap="round" stroke-linejoin="round" opacity=".6"/><polyline points="4.3,50.23 7.15,54.43" fill="none" stroke="#dfe6e9" stroke-width="0.32" stroke-linecap="round" stroke-linejoin="round" opacity=".6"/><polyline points="4.42,60.96 6.6,63.95" fill="none" stroke="#dfe6e9" stroke-width="0.32" stroke-linecap="round" stroke-linejoin="round" opacity=".6"/><polyline points="18.1,54.31 22.34,56.72" fill="none" stroke="#dfe6e9" stroke-width="0.32" stroke-linecap="round" stroke-linejoin="round" opacity=".6"/><polyline points="6.38,46.53 8.15,50.44" fill="none" stroke="#dfe6e9" stroke-width="0.32" stroke-linecap="round" stroke-linejoin="round" opacity=".6"/><polyline points="28.91,65.62 32.93,66.81" fill="none" stroke="#dfe6e9" stroke-width="0.32" stroke-linecap="round" stroke-linejoin="round" opacity=".6"/><polyline points="29.7,61.47 33.83,64.22" fill="none" stroke="#dfe6e9" stroke-width="0.32" stroke-linecap="round" stroke-linejoin="round" opacity=".6"/><polyline points="16.62,54.17 21.02,56.16" fill="none" stroke="#dfe6e9" stroke-width="0.32" stroke-linecap="round" stroke-linejoin="round" opacity=".6"/><polyline points="23.94,54.64 28.92,58.4" fill="none" stroke="#dfe6e9" stroke-width="0.32" stroke-linecap="round" stroke-linejoin="round" opacity=".6"/><polyline points="41.54,62.81 44.1,64.68" fill="none" stroke="#dfe6e9" stroke-width="0.32" stroke-linecap="round" stroke-linejoin="round" opacity=".6"/><polyline points="22.31,49.66 25.35,53.01" fill="none" stroke="#dfe6e9" stroke-width="0.32" stroke-linecap="round" stroke-linejoin="round" opacity=".6"/><polyline points="40.95,57.11 45.43,58.53" fill="none" stroke="#dfe6e9" stroke-width="0.32" stroke-linecap="round" stroke-linejoin="round" opacity=".6"/><polyline points="16.55,66.49 18.56,68.97" fill="none" stroke="#dfe6e9" stroke-width="0.32" stroke-linecap="round" stroke-linejoin="round" opacity=".6"/><polyline points="112.36,66.31 108.51,67.84" fill="none" stroke="#dfe6e9" stroke-width="0.32" stroke-linecap="round" stroke-linejoin="round" opacity=".6"/><polyline points="101.78,59.98 98.7,62.82" fill="none" stroke="#dfe6e9" stroke-width="0.32" stroke-linecap="round" stroke-linejoin="round" opacity=".6"/><polyline points="114.92,61.52 113.1,64.33" fill="none" stroke="#dfe6e9" stroke-width="0.32" stroke-linecap="round" stroke-linejoin="round" opacity=".6"/><polyline points="103.88,51.25 99.12,53.88" fill="none" stroke="#dfe6e9" stroke-width="0.32" stroke-linecap="round" stroke-linejoin="round" opacity=".6"/><polyline points="103.31,54.28 98.18,57.97" fill="none" stroke="#dfe6e9" stroke-width="0.32" stroke-linecap="round" stroke-linejoin="round" opacity=".6"/><polyline points="98.23,64.11 96.09,66.9" fill="none" stroke="#dfe6e9" stroke-width="0.32" stroke-linecap="round" stroke-linejoin="round" opacity=".6"/><polyline points="92.92,54.29 88.84,58.49" fill="none" stroke="#dfe6e9" stroke-width="0.32" stroke-linecap="round" stroke-linejoin="round" opacity=".6"/><polyline points="103.42,55.68 98.41,57.88" fill="none" stroke="#dfe6e9" stroke-width="0.32" stroke-linecap="round" stroke-linejoin="round" opacity=".6"/><polyline points="105.31,59.51 101.04,63.44" fill="none" stroke="#dfe6e9" stroke-width="0.32" stroke-linecap="round" stroke-linejoin="round" opacity=".6"/><polyline points="80.81,58.75 77.86,62.06" fill="none" stroke="#dfe6e9" stroke-width="0.32" stroke-linecap="round" stroke-linejoin="round" opacity=".6"/><polyline points="116.21,59.03 114.69,61.67" fill="none" stroke="#dfe6e9" stroke-width="0.32" stroke-linecap="round" stroke-linejoin="round" opacity=".6"/><polyline points="103.71,64.14 99.85,67.94" fill="none" stroke="#dfe6e9" stroke-width="0.32" stroke-linecap="round" stroke-linejoin="round" opacity=".6"/><polyline points="71.03,65.38 66.87,68.48" fill="none" stroke="#dfe6e9" stroke-width="0.32" stroke-linecap="round" stroke-linejoin="round" opacity=".6"/><polyline points="112.82,64.17 110.98,67.97" fill="none" stroke="#dfe6e9" stroke-width="0.32" stroke-linecap="round" stroke-linejoin="round" opacity=".6"/><polyline points="106.31,50.06 102.11,53.11" fill="none" stroke="#dfe6e9" stroke-width="0.32" stroke-linecap="round" stroke-linejoin="round" opacity=".6"/><polyline points="79.23,62.51 77.25,65.64" fill="none" stroke="#dfe6e9" stroke-width="0.32" stroke-linecap="round" stroke-linejoin="round" opacity=".6"/><polyline points="96.86,55.57 94.64,59.87" fill="none" stroke="#dfe6e9" stroke-width="0.32" stroke-linecap="round" stroke-linejoin="round" opacity=".6"/><polyline points="93.06,63.19 89.17,66.79" fill="none" stroke="#dfe6e9" stroke-width="0.32" stroke-linecap="round" stroke-linejoin="round" opacity=".6"/><polyline points="93.04,59.85 90.34,61.84" fill="none" stroke="#dfe6e9" stroke-width="0.32" stroke-linecap="round" stroke-linejoin="round" opacity=".6"/><polyline points="73.98,61.48 71.87,65.06" fill="none" stroke="#dfe6e9" stroke-width="0.32" stroke-linecap="round" stroke-linejoin="round" opacity=".6"/><polyline points="107.13,54.28 103.18,57.99" fill="none" stroke="#dfe6e9" stroke-width="0.32" stroke-linecap="round" stroke-linejoin="round" opacity=".6"/><polyline points="110.88,48.73 108.81,51.1" fill="none" stroke="#dfe6e9" stroke-width="0.32" stroke-linecap="round" stroke-linejoin="round" opacity=".6"/><polyline points="115.72,53.5 112.27,55.87" fill="none" stroke="#dfe6e9" stroke-width="0.32" stroke-linecap="round" stroke-linejoin="round" opacity=".6"/><polyline points="91.06,63.88 88.45,67.13" fill="none" stroke="#dfe6e9" stroke-width="0.32" stroke-linecap="round" stroke-linejoin="round" opacity=".6"/><polyline points="92.99,57.04 88.15,58.4" fill="none" stroke="#dfe6e9" stroke-width="0.32" stroke-linecap="round" stroke-linejoin="round" opacity=".6"/><polyline points="109.01,52.22 105.17,55.95" fill="none" stroke="#dfe6e9" stroke-width="0.32" stroke-linecap="round" stroke-linejoin="round" opacity=".6"/><polyline points="100.97,54.05 96.41,55.46" fill="none" stroke="#dfe6e9" stroke-width="0.32" stroke-linecap="round" stroke-linejoin="round" opacity=".6"/><polyline points="100.02,54.01 96.6,57.93" fill="none" stroke="#dfe6e9" stroke-width="0.32" stroke-linecap="round" stroke-linejoin="round" opacity=".6"/><polyline points="107.77,58.9 105.16,60.78" fill="none" stroke="#dfe6e9" stroke-width="0.32" stroke-linecap="round" stroke-linejoin="round" opacity=".6"/><polyline points="83.28,65.67 81.4,69.49" fill="none" stroke="#dfe6e9" stroke-width="0.32" stroke-linecap="round" stroke-linejoin="round" opacity=".6"/><polyline points="112.32,64.93 109.22,68.15" fill="none" stroke="#dfe6e9" stroke-width="0.32" stroke-linecap="round" stroke-linejoin="round" opacity=".6"/><polyline points="113.97,52.67 112.13,54.56" fill="none" stroke="#dfe6e9" stroke-width="0.32" stroke-linecap="round" stroke-linejoin="round" opacity=".6"/><polyline points="79.14,59.92 76.3,62.21" fill="none" stroke="#dfe6e9" stroke-width="0.32" stroke-linecap="round" stroke-linejoin="round" opacity=".6"/><polyline points="107.64,50.76 103.19,53.95" fill="none" stroke="#dfe6e9" stroke-width="0.32" stroke-linecap="round" stroke-linejoin="round" opacity=".6"/><polyline points="89.06,62.91 86.33,66.92" fill="none" stroke="#dfe6e9" stroke-width="0.32" stroke-linecap="round" stroke-linejoin="round" opacity=".6"/><polyline points="113.79,56.3 109.79,60.55" fill="none" stroke="#dfe6e9" stroke-width="0.32" stroke-linecap="round" stroke-linejoin="round" opacity=".6"/><polyline points="105.16,61.42 100.5,65.62" fill="none" stroke="#dfe6e9" stroke-width="0.32" stroke-linecap="round" stroke-linejoin="round" opacity=".6"/><polyline points="105.68,66.11 103.14,69.28" fill="none" stroke="#dfe6e9" stroke-width="0.32" stroke-linecap="round" stroke-linejoin="round" opacity=".6"/><polyline points="101.78,53.52 98.86,55.2" fill="none" stroke="#dfe6e9" stroke-width="0.32" stroke-linecap="round" stroke-linejoin="round" opacity=".6"/><polyline points="115.29,53.24 112.07,57.3" fill="none" stroke="#dfe6e9" stroke-width="0.32" stroke-linecap="round" stroke-linejoin="round" opacity=".6"/><polyline points="78.99,65.73 77.06,66.93" fill="none" stroke="#dfe6e9" stroke-width="0.32" stroke-linecap="round" stroke-linejoin="round" opacity=".6"/><polyline points="113.4,64.14 109.13,66.69" fill="none" stroke="#dfe6e9" stroke-width="0.32" stroke-linecap="round" stroke-linejoin="round" opacity=".6"/><polyline points="109.45,53.98 106.93,57.2" fill="none" stroke="#dfe6e9" stroke-width="0.32" stroke-linecap="round" stroke-linejoin="round" opacity=".6"/><polyline points="113.81,47.91 111.81,49.69" fill="none" stroke="#dfe6e9" stroke-width="0.32" stroke-linecap="round" stroke-linejoin="round" opacity=".6"/><polyline points="98.95,52.88 96.11,56.53" fill="none" stroke="#dfe6e9" stroke-width="0.32" stroke-linecap="round" stroke-linejoin="round" opacity=".6"/><polyline points="110.26,54.8 105.93,56.35" fill="none" stroke="#dfe6e9" stroke-width="0.32" stroke-linecap="round" stroke-linejoin="round" opacity=".6"/><polyline points="94.83,63.36 92.12,67.01" fill="none" stroke="#dfe6e9" stroke-width="0.32" stroke-linecap="round" stroke-linejoin="round" opacity=".6"/><polyline points="98.94,54.08 93.81,56.48" fill="none" stroke="#dfe6e9" stroke-width="0.32" stroke-linecap="round" stroke-linejoin="round" opacity=".6"/><polyline points="59.78,40.07 59.78,59.19" fill="none" stroke="#66777f" stroke-width="0.2" stroke-linecap="round" stroke-linejoin="round" /><polyline points="82.35,31.99 82.35,44.49" fill="none" stroke="#b0bcc2" stroke-width="0.2" stroke-linecap="round" stroke-linejoin="round" /><polyline points="61.76,57.72 58.46,61.76 54.04,63.97 55.51,66.18 52.21,68.75 56.99,70.96 66.54,72.06 73.16,74.63 76.84,78.31 77.21,82.35 74.26,86.4" fill="none" stroke="#e8eef0" stroke-width="0.55" stroke-linecap="round" stroke-linejoin="round" /><rect x="39.12" y="48.31" width="2.65" height="2.65" fill="#f4f6f7" /><rect x="26.99" y="58.24" width="2.65" height="2.65" fill="#f4f6f7" /><rect x="85.07" y="49.41" width="2.65" height="2.65" fill="#f4f6f7" /><rect x="81.03" y="63.01" width="2.65" height="2.65" fill="#f4f6f7" /><rect x="4.04" y="22.43" width="7.35" height="2.35" fill="#d83a3a" /><rect x="19.53" y="23.16" width="2.1" height="0.59" fill="#556" opacity="0.6"/><rect x="17.56" y="23.16" width="2.58" height="0.59" fill="#556" opacity="0.6"/><rect x="21.07" y="23.16" width="2.03" height="0.59" fill="#556" opacity="0.6"/><rect x="20.34" y="23.16" width="2.91" height="0.59" fill="#556" opacity="0.6"/><rect x="86.1" y="23.16" width="2.59" height="0.59" fill="#556" opacity="0.6"/><rect x="71.56" y="23.16" width="1.64" height="0.59" fill="#556" opacity="0.6"/><rect x="73.47" y="23.16" width="0.84" height="0.59" fill="#556" opacity="0.6"/><rect x="62.14" y="23.16" width="2.93" height="0.59" fill="#556" opacity="0.6"/><rect x="62.68" y="23.16" width="2.8" height="0.59" fill="#556" opacity="0.6"/><rect x="77.68" y="23.16" width="2.75" height="0.59" fill="#556" opacity="0.6"/><rect x="103.31" y="22.06" width="11.76" height="2.72" fill="#f4f6f7" /><rect x="104.78" y="23.01" width="8.82" height="0.74" fill="#445" opacity=".6"/><text x="2.94" y="76.99" font-family="Liberation Sans, sans-serif" font-weight="700" font-size="6.5" fill="#fff" textLength="59.19" lengthAdjust="spacingAndGlyphs">АРЕНДА И МОНТАЖ</text><text x="2.94" y="83.01" font-family="Liberation Sans, sans-serif" font-weight="700" font-size="6.5" fill="#fff" textLength="62.13" lengthAdjust="spacingAndGlyphs">БАШЕННЫХ КРАНОВ</text><rect x="118.01" y="0" width="3.31" height="120.96" fill="#202020" /><rect x="0" y="103.31" width="118.01" height="1.1" fill="#242424" /><rect x="5.25" y="105.15" width="1.41" height="0.59" fill="#8a8a8a" opacity="0.5"/><rect x="43.93" y="105.15" width="0.75" height="0.59" fill="#8a8a8a" opacity="0.5"/><rect x="6.79" y="105.15" width="1.51" height="0.59" fill="#8a8a8a" opacity="0.5"/><rect x="10.4" y="105.15" width="1.06" height="0.59" fill="#8a8a8a" opacity="0.5"/><rect x="37.05" y="105.15" width="0.94" height="0.59" fill="#8a8a8a" opacity="0.5"/><rect x="53.25" y="105.15" width="2.17" height="0.59" fill="#8a8a8a" opacity="0.5"/><rect x="3.77" y="105.15" width="2.72" height="0.59" fill="#8a8a8a" opacity="0.5"/><rect x="14.07" y="105.15" width="1.8" height="0.59" fill="#8a8a8a" opacity="0.5"/><rect x="31.1" y="105.15" width="1.04" height="0.59" fill="#8a8a8a" opacity="0.5"/><rect x="28.06" y="105.15" width="0.87" height="0.59" fill="#8a8a8a" opacity="0.5"/><rect x="11.82" y="105.15" width="2.76" height="0.59" fill="#8a8a8a" opacity="0.5"/><rect x="45.23" y="105.15" width="1.89" height="0.59" fill="#8a8a8a" opacity="0.5"/><rect x="37.7" y="105.15" width="2.67" height="0.59" fill="#8a8a8a" opacity="0.5"/><rect x="8.62" y="105.15" width="1.82" height="0.59" fill="#8a8a8a" opacity="0.5"/><rect x="16.41" y="107.72" width="0.99" height="0.59" fill="#7a7a7a" opacity="0.5"/><rect x="13.68" y="107.72" width="1.2" height="0.59" fill="#7a7a7a" opacity="0.5"/><rect x="7.28" y="107.72" width="1.21" height="0.59" fill="#7a7a7a" opacity="0.5"/><rect x="45.15" y="107.72" width="2.11" height="0.59" fill="#7a7a7a" opacity="0.5"/><rect x="100.85" y="107.72" width="2.73" height="0.59" fill="#7a7a7a" opacity="0.5"/><rect x="84.47" y="107.72" width="1.85" height="0.59" fill="#7a7a7a" opacity="0.5"/><rect x="107.64" y="107.72" width="1.09" height="0.59" fill="#7a7a7a" opacity="0.5"/><rect x="13.35" y="107.72" width="2.54" height="0.59" fill="#7a7a7a" opacity="0.5"/><rect x="73.96" y="107.72" width="1.2" height="0.59" fill="#7a7a7a" opacity="0.5"/><rect x="44.94" y="107.72" width="1.39" height="0.59" fill="#7a7a7a" opacity="0.5"/><rect x="51.16" y="107.72" width="1.68" height="0.59" fill="#7a7a7a" opacity="0.5"/><rect x="47.36" y="107.72" width="2.5" height="0.59" fill="#7a7a7a" opacity="0.5"/><rect x="95.38" y="107.72" width="1.98" height="0.59" fill="#7a7a7a" opacity="0.5"/><rect x="56.03" y="107.72" width="1.36" height="0.59" fill="#7a7a7a" opacity="0.5"/><rect x="90.02" y="107.72" width="2.91" height="0.59" fill="#7a7a7a" opacity="0.5"/><rect x="27.72" y="107.72" width="2.29" height="0.59" fill="#7a7a7a" opacity="0.5"/><rect x="82.32" y="107.72" width="2.19" height="0.59" fill="#7a7a7a" opacity="0.5"/><rect x="4.66" y="107.72" width="1.95" height="0.59" fill="#7a7a7a" opacity="0.5"/><rect x="24.57" y="107.72" width="1.16" height="0.59" fill="#7a7a7a" opacity="0.5"/><rect x="68.46" y="107.72" width="2.16" height="0.59" fill="#7a7a7a" opacity="0.5"/><rect x="73.76" y="107.72" width="2.37" height="0.59" fill="#7a7a7a" opacity="0.5"/><rect x="82.73" y="107.72" width="1.78" height="0.59" fill="#7a7a7a" opacity="0.5"/><rect x="6.66" y="107.72" width="2.44" height="0.59" fill="#7a7a7a" opacity="0.5"/><rect x="96.73" y="107.72" width="2.58" height="0.59" fill="#7a7a7a" opacity="0.5"/><rect x="70.59" y="107.72" width="0.82" height="0.59" fill="#7a7a7a" opacity="0.5"/><rect x="23.86" y="107.72" width="0.97" height="0.59" fill="#7a7a7a" opacity="0.5"/><rect x="74.97" y="107.72" width="1.94" height="0.59" fill="#7a7a7a" opacity="0.5"/><rect x="22.77" y="107.72" width="2.84" height="0.59" fill="#7a7a7a" opacity="0.5"/><rect x="114.72" y="107.72" width="2.72" height="0.59" fill="#7a7a7a" opacity="0.5"/><rect x="55" y="107.72" width="1.38" height="0.59" fill="#7a7a7a" opacity="0.5"/><rect x="0" y="109.93" width="118.01" height="11.03" fill="#191919" /><rect x="45.96" y="110.07" width="71.32" height="1.47" fill="#2c2c2c" /><rect x="63.6" y="110.29" width="2.21" height="1.25" fill="#3a6ac0" /><rect x="45.96" y="112.87" width="71.32" height="0.66" fill="#8c7a58" /><rect x="61.4" y="112.28" width="3.89" height="1.47" fill="#3a352c" /><rect x="94.33" y="112.28" width="2.29" height="1.47" fill="#3a352c" /><rect x="107.81" y="112.28" width="3.14" height="1.47" fill="#3a352c" /><rect x="75.04" y="112.28" width="2.69" height="1.47" fill="#3a352c" /><rect x="95.63" y="112.28" width="2.81" height="1.47" fill="#3a352c" /><rect x="91.54" y="112.28" width="1.83" height="1.47" fill="#3a352c" /><rect x="94.42" y="112.28" width="2.27" height="1.47" fill="#3a352c" /><rect x="45.96" y="116.54" width="71.32" height="0.66" fill="#8c7a58" /><rect x="108.35" y="115.96" width="2.1" height="1.47" fill="#3a352c" /><rect x="69.72" y="115.96" width="3.05" height="1.47" fill="#3a352c" /><rect x="73.68" y="115.96" width="3.02" height="1.47" fill="#3a352c" /><rect x="109.24" y="115.96" width="2.06" height="1.47" fill="#3a352c" /><rect x="99.09" y="115.96" width="3.51" height="1.47" fill="#3a352c" /><rect x="100.03" y="115.96" width="2.79" height="1.47" fill="#3a352c" /><rect x="77.84" y="115.96" width="2.49" height="1.47" fill="#3a352c" /><rect x="45.96" y="119.63" width="71.32" height="0.66" fill="#8c7a58" /><rect x="79.09" y="119.04" width="2.22" height="1.47" fill="#3a352c" /><rect x="60.2" y="119.04" width="2.87" height="1.47" fill="#3a352c" /><rect x="60.28" y="119.04" width="2.85" height="1.47" fill="#3a352c" /><rect x="85.79" y="119.04" width="2.38" height="1.47" fill="#3a352c" /><rect x="58.83" y="119.04" width="3.25" height="1.47" fill="#3a352c" /><rect x="104.98" y="119.04" width="2.12" height="1.47" fill="#3a352c" /><rect x="88.62" y="119.04" width="3.41" height="1.47" fill="#3a352c" /><rect x="35.59" y="113.6" width="2.24" height="0.66" fill="#9a9a9a" opacity="0.5"/><rect x="13.1" y="113.6" width="1.19" height="0.66" fill="#9a9a9a" opacity="0.5"/><rect x="33.72" y="113.6" width="1.4" height="0.66" fill="#9a9a9a" opacity="0.5"/><rect x="1.59" y="113.6" width="2.66" height="0.66" fill="#9a9a9a" opacity="0.5"/><rect x="8.82" y="113.6" width="1.43" height="0.66" fill="#9a9a9a" opacity="0.5"/><rect x="13.53" y="113.6" width="1.3" height="0.66" fill="#9a9a9a" opacity="0.5"/><rect x="29.32" y="113.6" width="1.49" height="0.66" fill="#9a9a9a" opacity="0.5"/><rect x="18.27" y="113.6" width="1.66" height="0.66" fill="#9a9a9a" opacity="0.5"/><rect x="33.58" y="113.6" width="0.78" height="0.66" fill="#9a9a9a" opacity="0.5"/><rect x="23.7" y="113.6" width="1.03" height="0.66" fill="#9a9a9a" opacity="0.5"/><rect x="6.97" y="113.6" width="2.07" height="0.66" fill="#9a9a9a" opacity="0.5"/><rect x="15.74" y="113.6" width="0.88" height="0.66" fill="#9a9a9a" opacity="0.5"/><rect x="24.03" y="117.28" width="2.75" height="0.66" fill="#8a8a8a" opacity="0.5"/><rect x="26.24" y="117.28" width="1.83" height="0.66" fill="#8a8a8a" opacity="0.5"/><rect x="32.31" y="117.28" width="2.76" height="0.66" fill="#8a8a8a" opacity="0.5"/><rect x="7" y="117.28" width="1.4" height="0.66" fill="#8a8a8a" opacity="0.5"/><rect x="38.7" y="117.28" width="2.78" height="0.66" fill="#8a8a8a" opacity="0.5"/><rect x="9.01" y="117.28" width="2.29" height="0.66" fill="#8a8a8a" opacity="0.5"/><rect x="35.18" y="117.28" width="2.04" height="0.66" fill="#8a8a8a" opacity="0.5"/><rect x="28.47" y="117.28" width="1.89" height="0.66" fill="#8a8a8a" opacity="0.5"/><rect x="10.25" y="117.28" width="1.21" height="0.66" fill="#8a8a8a" opacity="0.5"/><rect x="3.52" y="117.28" width="2.2" height="0.66" fill="#8a8a8a" opacity="0.5"/><rect x="6.49" y="117.28" width="2.11" height="0.66" fill="#8a8a8a" opacity="0.5"/><rect x="16.35" y="117.28" width="1.7" height="0.66" fill="#8a8a8a" opacity="0.5"/><rect x="0.37" y="114.71" width="5.15" height="2.57" fill="#2a4a80" /></g></svg></div><div id="th2" style="position:absolute;left:690.2px;top:1527.5px;width:121.4px;height:121.3px;overflow:hidden;background:#222"><svg width="121.4" height="121.3" viewBox="0 0 121.4 121.3" style="display:block"><defs><filter id="tb2" x="-5%" y="-5%" width="110%" height="110%"><feGaussianBlur color-interpolation-filters="sRGB" stdDeviation="0.35"/></filter><filter id="tc2" x="-20%" y="-20%" width="140%" height="140%"><feGaussianBlur color-interpolation-filters="sRGB" stdDeviation="2.5"/></filter><radialGradient id="g2" cx="55%" cy="22%" r="75%"><stop offset="0" stop-color="#69757a"/><stop offset=".3" stop-color="#475155"/><stop offset=".65" stop-color="#2a3033"/><stop offset="1" stop-color="#181b1c"/></radialGradient></defs><g filter="url(#tb2)"><rect width="121.4" height="121.3" fill="#1d1f20"/><rect x="0" y="6.25" width="120.81" height="91.91" fill="url(#g2)" /><polygon points="59.04,17.28 72.28,15.07 84.78,22.43 110.51,15.07 120.81,18.75 120.81,37.13 88.46,31.25 62.72,28.31" fill="#6a777c" opacity=".35" filter="url(#tc2)"/><polygon points="0,44.49 29.63,40.07 59.04,45.96 88.46,40.81 120.81,48.9 120.81,98.16 0,98.16" fill="#1c2123" opacity=".75" filter="url(#tc2)"/><polygon points="44.34,98.16 50.22,87.87 69.34,93.75 73.75,98.16" fill="#2d3335" opacity=".8"/><rect x="0" y="0" width="120.81" height="6.62" fill="#1f2122" /><rect x="18.77" y="1.84" width="1.94" height="0.66" fill="#8a8a8a" opacity="0.55"/><rect x="27.02" y="1.84" width="2.07" height="0.66" fill="#8a8a8a" opacity="0.55"/><rect x="43" y="1.84" width="0.88" height="0.66" fill="#8a8a8a" opacity="0.55"/><rect x="4.72" y="1.84" width="2.58" height="0.66" fill="#8a8a8a" opacity="0.55"/><rect x="20.11" y="1.84" width="1.25" height="0.66" fill="#8a8a8a" opacity="0.55"/><rect x="66.12" y="1.84" width="1.77" height="0.66" fill="#8a8a8a" opacity="0.55"/><rect x="56.18" y="1.84" width="1.79" height="0.66" fill="#8a8a8a" opacity="0.55"/><rect x="43.84" y="1.84" width="1.07" height="0.66" fill="#8a8a8a" opacity="0.55"/><rect x="43.58" y="1.84" width="2.65" height="0.66" fill="#8a8a8a" opacity="0.55"/><rect x="36.6" y="1.84" width="2.37" height="0.66" fill="#8a8a8a" opacity="0.55"/><rect x="45.86" y="1.84" width="0.88" height="0.66" fill="#8a8a8a" opacity="0.55"/><rect x="51.29" y="1.84" width="2.04" height="0.66" fill="#8a8a8a" opacity="0.55"/><rect x="22.73" y="1.84" width="0.8" height="0.66" fill="#8a8a8a" opacity="0.55"/><rect x="57.99" y="1.84" width="1.78" height="0.66" fill="#8a8a8a" opacity="0.55"/><rect x="48.82" y="1.84" width="2.67" height="0.66" fill="#8a8a8a" opacity="0.55"/><rect x="48.53" y="1.84" width="2.77" height="0.66" fill="#8a8a8a" opacity="0.55"/><rect x="28.58" y="1.84" width="2.5" height="0.66" fill="#8a8a8a" opacity="0.55"/><rect x="31.69" y="1.84" width="2.8" height="0.66" fill="#8a8a8a" opacity="0.55"/><rect x="58.83" y="1.84" width="0.95" height="0.66" fill="#8a8a8a" opacity="0.55"/><rect x="12.4" y="1.84" width="1.21" height="0.66" fill="#8a8a8a" opacity="0.55"/><rect x="64.24" y="1.84" width="1.7" height="0.66" fill="#8a8a8a" opacity="0.55"/><rect x="43.06" y="1.84" width="1.4" height="0.66" fill="#8a8a8a" opacity="0.55"/><rect x="41.46" y="4.41" width="1.59" height="0.88" fill="#666" opacity="0.6"/><rect x="32.15" y="4.41" width="2.03" height="0.88" fill="#666" opacity="0.6"/><rect x="46.05" y="4.41" width="2.73" height="0.88" fill="#666" opacity="0.6"/><rect x="51.87" y="4.41" width="2.78" height="0.88" fill="#666" opacity="0.6"/><rect x="62.26" y="4.41" width="2.92" height="0.88" fill="#666" opacity="0.6"/><rect x="51.23" y="4.41" width="1.1" height="0.88" fill="#666" opacity="0.6"/><rect x="62.51" y="4.41" width="2.86" height="0.88" fill="#666" opacity="0.6"/><rect x="65.13" y="4.41" width="1.99" height="0.88" fill="#666" opacity="0.6"/><rect x="53.76" y="4.41" width="1.2" height="0.88" fill="#666" opacity="0.6"/><rect x="60.78" y="4.41" width="2" height="0.88" fill="#666" opacity="0.6"/><rect x="28.22" y="4.41" width="0.88" height="0.88" fill="#666" opacity="0.6"/><rect x="62.11" y="4.41" width="2.92" height="0.88" fill="#666" opacity="0.6"/><rect x="16.52" y="4.41" width="2.5" height="0.88" fill="#666" opacity="0.6"/><rect x="35.7" y="4.41" width="1.07" height="0.88" fill="#666" opacity="0.6"/><rect x="27.43" y="4.04" width="6.62" height="1.62" fill="#555" /><rect x="76.13" y="4.19" width="2.43" height="1.18" fill="#eee" opacity="0.9"/><rect x="80.81" y="4.19" width="0.83" height="1.18" fill="#eee" opacity="0.9"/><rect x="78.72" y="4.19" width="0.83" height="1.18" fill="#eee" opacity="0.9"/><rect x="79.56" y="4.19" width="1.47" height="1.18" fill="#eee" opacity="0.9"/><rect x="98.01" y="1.69" width="2.21" height="1.76" fill="#4a7ad0" /><rect x="108.31" y="1.69" width="6.62" height="1.76" fill="#9ab" /><rect x="1.1" y="8.82" width="2.06" height="1.62" fill="#c04040" opacity=".8"/><rect x="1.1" y="11.4" width="2.06" height="1.62" fill="#999" opacity=".8"/><rect x="1.1" y="18.38" width="2.06" height="1.62" fill="#ccc" opacity=".8"/><rect x="1.1" y="21.32" width="2.06" height="1.62" fill="#c9a050" opacity=".8"/><rect x="1.1" y="24.63" width="2.06" height="1.62" fill="#ccc" opacity=".8"/><rect x="1.1" y="27.94" width="2.06" height="1.62" fill="#ccc" opacity=".8"/><rect x="1.1" y="31.25" width="2.06" height="1.62" fill="#ccc" opacity=".8"/><rect x="1.1" y="34.56" width="2.06" height="1.62" fill="#777" opacity=".8"/><rect x="0.59" y="13.97" width="3.31" height="2.72" fill="#4a86e0" /><circle cx="114.93" cy="8.09" r="0.88" fill="#3a78d0" /><circle cx="112.35" cy="10.81" r="0.88" fill="#7ab020" /><circle cx="114.93" cy="10.81" r="0.88" fill="#d04a5a" /><circle cx="117.87" cy="10.81" r="0.88" fill="#d04a5a" /><rect x="116.99" y="15.44" width="1.76" height="1.47" fill="#ddd" opacity=".8"/><rect x="116.99" y="18.38" width="1.76" height="1.47" fill="#ddd" opacity=".8"/><rect x="116.99" y="20.96" width="1.76" height="1.47" fill="#ddd" opacity=".8"/><rect x="116.99" y="23.53" width="1.76" height="1.47" fill="#ddd" opacity=".8"/><rect x="116.99" y="26.1" width="1.76" height="1.47" fill="#ddd" opacity=".8"/><polygon points="32.21,30.15 43.6,32.72 75.96,47.43 73.75,50 59.04,45.96 32.57,41.54 27.43,40.81" fill="#2a1210" /><polyline points="32.21,30.51 75.59,47.79" fill="none" stroke="#7a3424" stroke-width="0.8" stroke-linecap="round" stroke-linejoin="round" /><polyline points="27.79,40.81 59.04,45.59 74.49,49.63" fill="none" stroke="#6a2a20" stroke-width="0.8" stroke-linecap="round" stroke-linejoin="round" /><polyline points="32.21,30.51 29.63,40.07 36.99,34.19 36.25,41.18 43.6,35.66 44.34,42.28 50.22,38.6 51.69,43.75 56.84,41.18 59.04,45.59 63.46,43.75 66.4,47.43 70.07,46.32 73.01,49.26" fill="none" stroke="#5e2a1e" stroke-width="0.55" stroke-linecap="round" stroke-linejoin="round" /><polygon points="40.66,34.93 45.81,34.19 43.6,40.07" fill="#b0502f" opacity=".85"/><circle cx="28.16" cy="41.18" r="1.62" fill="#151515" /><rect x="57.57" y="45.59" width="3.31" height="2.21" fill="#151515" /><polyline points="59.41,47.79 59.63,59.93" fill="none" stroke="#111" stroke-width="0.45" stroke-linecap="round" stroke-linejoin="round" /><polyline points="58.68,51.84 58.53,54.04" fill="none" stroke="#ccc" stroke-width="0.3" stroke-linecap="round" stroke-linejoin="round" /><polyline points="69.34,48.9 69.34,88.6" fill="none" stroke="#4a1a18" stroke-width="0.3" stroke-linecap="round" stroke-linejoin="round" opacity=".5"/><rect x="0" y="98.16" width="120.81" height="22.79" fill="#202020" /><rect x="0" y="98.16" width="120.81" height="2.35" fill="#2a2a2a" /><rect x="104.29" y="98.75" width="2.9" height="0.74" fill="#8a8a8a" opacity="0.55"/><rect x="61.5" y="98.75" width="2.94" height="0.74" fill="#8a8a8a" opacity="0.55"/><rect x="39.19" y="98.75" width="0.91" height="0.74" fill="#8a8a8a" opacity="0.55"/><rect x="72.25" y="98.75" width="0.8" height="0.74" fill="#8a8a8a" opacity="0.55"/><rect x="26.39" y="98.75" width="1.64" height="0.74" fill="#8a8a8a" opacity="0.55"/><rect x="73.47" y="98.75" width="1.08" height="0.74" fill="#8a8a8a" opacity="0.55"/><rect x="8.73" y="98.75" width="2.65" height="0.74" fill="#8a8a8a" opacity="0.55"/><rect x="39.66" y="98.75" width="2.85" height="0.74" fill="#8a8a8a" opacity="0.55"/><rect x="106.09" y="98.75" width="1.57" height="0.74" fill="#8a8a8a" opacity="0.55"/><rect x="56.37" y="98.75" width="1.88" height="0.74" fill="#8a8a8a" opacity="0.55"/><rect x="77.28" y="98.75" width="2.05" height="0.74" fill="#8a8a8a" opacity="0.55"/><rect x="67.64" y="98.75" width="2.1" height="0.74" fill="#8a8a8a" opacity="0.55"/><rect x="111.1" y="98.75" width="1.85" height="0.74" fill="#8a8a8a" opacity="0.55"/><rect x="53.04" y="98.75" width="2.32" height="0.74" fill="#8a8a8a" opacity="0.55"/><rect x="30.98" y="98.75" width="1.4" height="0.74" fill="#8a8a8a" opacity="0.55"/><rect x="115.34" y="98.75" width="1.88" height="0.74" fill="#8a8a8a" opacity="0.55"/><rect x="66.4" y="98.75" width="0.76" height="0.74" fill="#8a8a8a" opacity="0.55"/><rect x="51.22" y="98.75" width="2.01" height="0.74" fill="#8a8a8a" opacity="0.55"/><rect x="6.18" y="98.75" width="2.09" height="0.74" fill="#8a8a8a" opacity="0.55"/><rect x="75.95" y="98.75" width="0.87" height="0.74" fill="#8a8a8a" opacity="0.55"/><rect x="75.4" y="98.75" width="1.76" height="0.74" fill="#8a8a8a" opacity="0.55"/><rect x="81.32" y="98.75" width="1.51" height="0.74" fill="#8a8a8a" opacity="0.55"/><rect x="84.47" y="98.75" width="2.36" height="0.74" fill="#8a8a8a" opacity="0.55"/><rect x="6.43" y="98.75" width="0.87" height="0.74" fill="#8a8a8a" opacity="0.55"/><rect x="80.94" y="98.75" width="2.86" height="0.74" fill="#8a8a8a" opacity="0.55"/><rect x="32.52" y="98.75" width="1.74" height="0.74" fill="#8a8a8a" opacity="0.55"/><rect x="71.44" y="98.75" width="1.44" height="0.74" fill="#8a8a8a" opacity="0.55"/><rect x="45.38" y="98.75" width="1.43" height="0.74" fill="#8a8a8a" opacity="0.55"/><rect x="45.97" y="98.75" width="2.05" height="0.74" fill="#8a8a8a" opacity="0.55"/><rect x="38.13" y="98.75" width="1.57" height="0.74" fill="#8a8a8a" opacity="0.55"/><rect x="91.91" y="98.75" width="0.79" height="0.74" fill="#8a8a8a" opacity="0.55"/><rect x="68.78" y="98.75" width="2.36" height="0.74" fill="#8a8a8a" opacity="0.55"/><rect x="39.23" y="98.75" width="1.23" height="0.74" fill="#8a8a8a" opacity="0.55"/><rect x="95.51" y="98.75" width="1.26" height="0.74" fill="#8a8a8a" opacity="0.55"/><rect x="25.25" y="98.75" width="1.7" height="0.74" fill="#8a8a8a" opacity="0.55"/><rect x="83.46" y="98.75" width="0.96" height="0.74" fill="#8a8a8a" opacity="0.55"/><rect x="29.63" y="98.6" width="10.29" height="1.32" fill="#cfcfcf" /><rect x="0" y="100.51" width="61.99" height="17.5" fill="#1d1d1d" /><rect x="0" y="100.51" width="25.22" height="17.5" fill="#2a2a2a" /><rect x="12.72" y="100.51" width="1.62" height="2.06" fill="#4a86e0" /><polyline points="13.53,102.57 13.53,118.01" fill="none" stroke="#4a86e0" stroke-width="0.25" stroke-linecap="round" stroke-linejoin="round" /><rect x="5.74" y="101.25" width="1.1" height="0.74" fill="#888" opacity=".6"/><rect x="10.37" y="101.25" width="1.1" height="0.74" fill="#888" opacity=".6"/><rect x="15" y="101.25" width="1.1" height="0.74" fill="#888" opacity=".6"/><rect x="19.63" y="101.25" width="1.1" height="0.74" fill="#888" opacity=".6"/><rect x="24.26" y="101.25" width="1.1" height="0.74" fill="#888" opacity=".6"/><rect x="28.9" y="101.25" width="1.1" height="0.74" fill="#888" opacity=".6"/><rect x="33.53" y="101.25" width="1.1" height="0.74" fill="#888" opacity=".6"/><rect x="38.16" y="101.25" width="1.1" height="0.74" fill="#888" opacity=".6"/><rect x="42.79" y="101.25" width="1.1" height="0.74" fill="#888" opacity=".6"/><rect x="47.43" y="101.25" width="1.1" height="0.74" fill="#888" opacity=".6"/><rect x="52.06" y="101.25" width="1.1" height="0.74" fill="#888" opacity=".6"/><rect x="56.69" y="101.25" width="1.1" height="0.74" fill="#888" opacity=".6"/><rect x="61.32" y="101.25" width="1.1" height="0.74" fill="#888" opacity=".6"/><rect x="63.46" y="100.51" width="13.97" height="1.32" fill="#8c8c28" /><rect x="63.46" y="101.84" width="13.97" height="13.24" fill="#2f2f2f" /><rect x="64.56" y="104.78" width="11.76" height="1.18" fill="#5a5a5a" /><rect x="64.56" y="106.84" width="11.76" height="1.18" fill="#5a5a5a" /><rect x="64.56" y="109.56" width="11.76" height="1.18" fill="#5a5a5a" /><rect x="63.82" y="111.99" width="13.24" height="1.62" fill="#3a6ac8" /><rect x="95.07" y="100.51" width="25.74" height="17.5" fill="#2e2e2e" /><rect x="97.28" y="103.31" width="19.12" height="0.88" fill="#555" opacity=".7"/><rect x="97.28" y="105.51" width="19.12" height="0.88" fill="#555" opacity=".7"/><rect x="97.28" y="107.72" width="19.12" height="0.88" fill="#555" opacity=".7"/><rect x="97.28" y="110.66" width="19.12" height="0.88" fill="#555" opacity=".7"/><rect x="97.28" y="113.6" width="19.12" height="0.88" fill="#555" opacity=".7"/><rect x="97.28" y="115.81" width="19.12" height="0.88" fill="#555" opacity=".7"/><rect x="106.1" y="105.51" width="10.29" height="1.1" fill="#151515" /></g></svg></div><div id="th3" style="position:absolute;left:829.3px;top:1527.5px;width:121.4px;height:121.3px;overflow:hidden;background:#222"><svg width="121.4" height="121.3" viewBox="0 0 121.4 121.3" style="display:block"><defs><filter id="tb3" x="-5%" y="-5%" width="110%" height="110%"><feGaussianBlur color-interpolation-filters="sRGB" stdDeviation="0.35"/></filter><filter id="tc3" x="-20%" y="-20%" width="140%" height="140%"><feGaussianBlur color-interpolation-filters="sRGB" stdDeviation="2.5"/></filter></defs><g filter="url(#tb3)"><rect width="121.4" height="121.3" fill="#1a1a1a"/><rect x="0" y="0" width="114.71" height="5.88" fill="#1c1c1c" /><rect x="11.9" y="3.68" width="0.96" height="0.66" fill="#8a8a8a" opacity="0.6"/><rect x="18.73" y="3.68" width="1.08" height="0.66" fill="#8a8a8a" opacity="0.6"/><rect x="4.67" y="3.68" width="1.62" height="0.66" fill="#8a8a8a" opacity="0.6"/><rect x="40.99" y="3.68" width="2.5" height="0.66" fill="#8a8a8a" opacity="0.6"/><rect x="34.47" y="3.68" width="1.22" height="0.66" fill="#8a8a8a" opacity="0.6"/><rect x="24.73" y="3.68" width="1.35" height="0.66" fill="#8a8a8a" opacity="0.6"/><rect x="9.2" y="3.68" width="0.97" height="0.66" fill="#8a8a8a" opacity="0.6"/><rect x="10.98" y="3.68" width="2.78" height="0.66" fill="#8a8a8a" opacity="0.6"/><rect x="37.19" y="3.68" width="2.51" height="0.66" fill="#8a8a8a" opacity="0.6"/><rect x="35.97" y="3.68" width="1.16" height="0.66" fill="#8a8a8a" opacity="0.6"/><rect x="12.87" y="3.31" width="5.88" height="1.47" fill="#cfcfcf" /><rect x="0" y="5.88" width="114.71" height="96.32" fill="#efefef" /><rect x="73.9" y="62.87" width="17.65" height="25" fill="#f6f6f6" /><rect x="0.37" y="62.87" width="33.82" height="25" fill="#f3f3f3" /><polyline points="43.01,18.38 4.04,31.62" fill="none" stroke="#4c4c4c" stroke-width="0.22" stroke-linecap="round" stroke-linejoin="round" /><polyline points="43.01,18.38 20.22,31.62" fill="none" stroke="#4c4c4c" stroke-width="0.22" stroke-linecap="round" stroke-linejoin="round" /><polyline points="43.01,18.38 76.1,29.04" fill="none" stroke="#4c4c4c" stroke-width="0.22" stroke-linecap="round" stroke-linejoin="round" /><polyline points="43.01,18.38 51.84,29.04" fill="none" stroke="#4c4c4c" stroke-width="0.22" stroke-linecap="round" stroke-linejoin="round" /><polyline points="40.44,22.43 40.07,90.81 36.4,101.1" fill="none" stroke="#4c4c4c" stroke-width="0.28" stroke-linecap="round" stroke-linejoin="round" /><polyline points="45.59,22.43 46.1,90.81 50,101.1" fill="none" stroke="#4c4c4c" stroke-width="0.28" stroke-linecap="round" stroke-linejoin="round" /><polyline points="40.44,22.43 45.81,25.51 40.44,28.6 45.81,31.69 40.44,34.78 45.81,37.87 40.44,40.96 45.81,44.04 40.44,47.13 45.81,50.22 40.44,53.31 45.81,56.4 40.44,59.49 45.81,62.57 40.44,65.66 45.81,68.75 40.44,71.84 45.81,74.93 40.44,78.01 45.81,81.1 40.44,84.19 45.81,87.28 40.44,90.37" fill="none" stroke="#4c4c4c" stroke-width="0.25" stroke-linecap="round" stroke-linejoin="round" /><polyline points="45.81,22.43 40.44,25.51 45.81,28.6 40.44,31.69 45.81,34.78 40.44,37.87 45.81,40.96 40.44,44.04 45.81,47.13 40.44,50.22 45.81,53.31 40.44,56.4 45.81,59.49 40.44,62.57 45.81,65.66 40.44,68.75 45.81,71.84 40.44,74.93 45.81,78.01 40.44,81.1 45.81,84.19 40.44,87.28 45.81,90.37" fill="none" stroke="#4c4c4c" stroke-width="0.25" stroke-linecap="round" stroke-linejoin="round" /><polyline points="40.07,90.81 43.01,101.1 46.1,90.81 36.4,101.1 50,101.1" fill="none" stroke="#4c4c4c" stroke-width="0.22" stroke-linecap="round" stroke-linejoin="round" /><polyline points="41.54,18.38 44.49,18.38 45.59,23.9 40.44,23.9 41.54,18.38" fill="none" stroke="#4c4c4c" stroke-width="0.25" stroke-linecap="round" stroke-linejoin="round" /><polyline points="48.9,33.09 52.94,28.46 96.69,28.46 106.99,33.31 48.9,33.6" fill="none" stroke="#4c4c4c" stroke-width="0.28" stroke-linecap="round" stroke-linejoin="round" /><polyline points="52.94,28.46 55.74,33.31 58.53,28.46 61.32,33.31 64.12,28.46 66.91,33.31 69.71,28.46 72.5,33.31 75.29,28.46 78.09,33.31 80.88,28.46 83.68,33.31 86.47,28.46 89.26,33.31 92.06,28.46 94.85,33.31 97.65,28.46" fill="none" stroke="#4c4c4c" stroke-width="0.25" stroke-linecap="round" stroke-linejoin="round" /><polyline points="4.04,31.84 40.07,31.25 40.07,34.19 4.04,33.6 4.04,31.84" fill="none" stroke="#4c4c4c" stroke-width="0.28" stroke-linecap="round" stroke-linejoin="round" /><polyline points="4.78,31.84 6.99,33.82 9.19,31.84 11.4,33.82 13.6,31.84 15.81,33.82 18.01,31.84 20.22,33.82 22.43,31.84 24.63,33.82 26.84,31.84 29.04,33.82 31.25,31.84 33.46,33.82 35.66,31.84 37.87,33.82" fill="none" stroke="#4c4c4c" stroke-width="0.22" stroke-linecap="round" stroke-linejoin="round" /><rect x="9.19" y="34.19" width="5.15" height="1.47" fill="#6a6a6a" opacity=".6"/><polyline points="79.41,33.6 79.41,37.13 78.31,37.13 79.56,39.34 80.66,37.13 79.41,37.13" fill="none" stroke="#4c4c4c" stroke-width="0.25" stroke-linecap="round" stroke-linejoin="round" /><text x="-1.1" y="74.85" font-family="Liberation Sans, sans-serif" font-weight="700" font-size="5.4" fill="#222" textLength="9.93" lengthAdjust="spacingAndGlyphs">100</text><text x="54.63" y="72.57" font-family="Liberation Sans, sans-serif" font-weight="700" font-size="5.4" fill="#222" textLength="5.51" lengthAdjust="spacingAndGlyphs">10</text><text x="98.01" y="73.16" font-family="Liberation Sans, sans-serif" font-weight="700" font-size="5.4" fill="#222" textLength="6.03" lengthAdjust="spacingAndGlyphs">30</text><rect x="0.37" y="79.63" width="22.06" height="0.81" fill="#777" opacity=".55"/><rect x="54.78" y="76.99" width="16.18" height="0.81" fill="#777" opacity=".55"/><rect x="54.78" y="79.78" width="22.06" height="0.81" fill="#777" opacity=".55"/><rect x="54.78" y="82.35" width="6.99" height="0.81" fill="#777" opacity=".55"/><rect x="98.16" y="77.57" width="16.18" height="0.81" fill="#777" opacity=".55"/><rect x="98.16" y="80.37" width="14.71" height="0.81" fill="#777" opacity=".55"/><rect x="114.71" y="0" width="6.62" height="120.96" fill="#1b1b1b" /><rect x="115.81" y="7.72" width="5.15" height="2.21" fill="#7a5ae0" /><rect x="116.54" y="19.49" width="4.78" height="6.99" fill="#8a6cf0" /><rect x="116.54" y="5.51" width="3.68" height="0.88" fill="#777" opacity=".5"/><rect x="116.54" y="15.07" width="3.68" height="0.88" fill="#777" opacity=".5"/><rect x="116.54" y="29.04" width="3.68" height="0.88" fill="#777" opacity=".5"/><rect x="116.54" y="32.72" width="3.68" height="0.88" fill="#777" opacity=".5"/><rect x="116.54" y="35.66" width="3.68" height="0.88" fill="#777" opacity=".5"/><rect x="116.54" y="81.99" width="3.68" height="0.88" fill="#777" opacity=".5"/><rect x="116.54" y="85.66" width="3.68" height="0.88" fill="#777" opacity=".5"/><rect x="116.54" y="88.6" width="3.68" height="0.88" fill="#777" opacity=".5"/><rect x="116.54" y="93.01" width="3.68" height="0.88" fill="#777" opacity=".5"/><rect x="116.54" y="97.43" width="3.68" height="0.88" fill="#777" opacity=".5"/><rect x="116.54" y="101.84" width="3.68" height="0.88" fill="#777" opacity=".5"/><rect x="116.54" y="106.25" width="3.68" height="0.88" fill="#777" opacity=".5"/><rect x="116.54" y="110.66" width="3.68" height="0.88" fill="#777" opacity=".5"/><rect x="116.54" y="115.07" width="3.68" height="0.88" fill="#777" opacity=".5"/><rect x="0" y="102.21" width="114.71" height="18.75" fill="#161616" /><rect x="17.79" y="103.09" width="2.12" height="0.66" fill="#9a9a9a" opacity="0.55"/><rect x="39.51" y="103.09" width="2.62" height="0.66" fill="#9a9a9a" opacity="0.55"/><rect x="47.13" y="103.09" width="0.93" height="0.66" fill="#9a9a9a" opacity="0.55"/><rect x="33.02" y="103.09" width="2.22" height="0.66" fill="#9a9a9a" opacity="0.55"/><rect x="27.88" y="103.09" width="1.13" height="0.66" fill="#9a9a9a" opacity="0.55"/><rect x="26.21" y="103.09" width="0.93" height="0.66" fill="#9a9a9a" opacity="0.55"/><rect x="49.94" y="103.09" width="2.64" height="0.66" fill="#9a9a9a" opacity="0.55"/><rect x="30.03" y="103.09" width="1.4" height="0.66" fill="#9a9a9a" opacity="0.55"/><rect x="48.62" y="103.09" width="2" height="0.66" fill="#9a9a9a" opacity="0.55"/><rect x="47.25" y="103.09" width="2.61" height="0.66" fill="#9a9a9a" opacity="0.55"/><rect x="28" y="103.09" width="1.65" height="0.66" fill="#9a9a9a" opacity="0.55"/><rect x="32.66" y="103.09" width="1.69" height="0.66" fill="#9a9a9a" opacity="0.55"/><rect x="10.14" y="103.09" width="1.41" height="0.66" fill="#9a9a9a" opacity="0.55"/><rect x="43.66" y="103.09" width="0.83" height="0.66" fill="#9a9a9a" opacity="0.55"/><rect x="6.31" y="105.88" width="2.12" height="0.59" fill="#8a8a8a" opacity="0.5"/><rect x="32.65" y="105.88" width="1.91" height="0.59" fill="#8a8a8a" opacity="0.5"/><rect x="54.12" y="105.88" width="1.49" height="0.59" fill="#8a8a8a" opacity="0.5"/><rect x="113.3" y="105.88" width="1.17" height="0.59" fill="#8a8a8a" opacity="0.5"/><rect x="47.54" y="105.88" width="1.18" height="0.59" fill="#8a8a8a" opacity="0.5"/><rect x="72.28" y="105.88" width="1.34" height="0.59" fill="#8a8a8a" opacity="0.5"/><rect x="41.13" y="105.88" width="2.38" height="0.59" fill="#8a8a8a" opacity="0.5"/><rect x="37.18" y="105.88" width="1.97" height="0.59" fill="#8a8a8a" opacity="0.5"/><rect x="102.84" y="105.88" width="0.96" height="0.59" fill="#8a8a8a" opacity="0.5"/><rect x="8.03" y="105.88" width="1.24" height="0.59" fill="#8a8a8a" opacity="0.5"/><rect x="87.18" y="105.88" width="2.09" height="0.59" fill="#8a8a8a" opacity="0.5"/><rect x="27.81" y="105.88" width="1.47" height="0.59" fill="#8a8a8a" opacity="0.5"/><rect x="21.08" y="105.88" width="1.75" height="0.59" fill="#8a8a8a" opacity="0.5"/><rect x="5.92" y="105.88" width="2.27" height="0.59" fill="#8a8a8a" opacity="0.5"/><rect x="101.89" y="105.88" width="2.84" height="0.59" fill="#8a8a8a" opacity="0.5"/><rect x="83.78" y="105.88" width="2.85" height="0.59" fill="#8a8a8a" opacity="0.5"/><rect x="3.15" y="105.88" width="1.37" height="0.59" fill="#8a8a8a" opacity="0.5"/><rect x="109.78" y="105.88" width="2.45" height="0.59" fill="#8a8a8a" opacity="0.5"/><rect x="47.28" y="105.88" width="2.82" height="0.59" fill="#8a8a8a" opacity="0.5"/><rect x="70.91" y="105.88" width="2.54" height="0.59" fill="#8a8a8a" opacity="0.5"/><rect x="34.11" y="105.88" width="1.16" height="0.59" fill="#8a8a8a" opacity="0.5"/><rect x="51.07" y="105.88" width="1.04" height="0.59" fill="#8a8a8a" opacity="0.5"/><rect x="44.04" y="105.88" width="2.86" height="0.59" fill="#8a8a8a" opacity="0.5"/><rect x="38.38" y="105.88" width="0.76" height="0.59" fill="#8a8a8a" opacity="0.5"/><rect x="6.14" y="105.88" width="1.11" height="0.59" fill="#8a8a8a" opacity="0.5"/><rect x="89.27" y="105.88" width="1.54" height="0.59" fill="#8a8a8a" opacity="0.5"/><rect x="33.77" y="105.88" width="0.95" height="0.59" fill="#8a8a8a" opacity="0.5"/><rect x="111.55" y="105.88" width="1.67" height="0.59" fill="#8a8a8a" opacity="0.5"/><rect x="24.49" y="105.88" width="0.87" height="0.59" fill="#8a8a8a" opacity="0.5"/><rect x="7.32" y="105.88" width="1.11" height="0.59" fill="#8a8a8a" opacity="0.5"/><rect x="44.49" y="108.46" width="69.85" height="1.47" fill="#2a2a2a" /><rect x="44.49" y="111.54" width="69.85" height="0.51" fill="#c9a070" /><rect x="44.49" y="114.19" width="69.85" height="0.51" fill="#b0683a" /><rect x="44.49" y="117.28" width="69.85" height="0.51" fill="#6a7a3a" /><rect x="82.77" y="114.34" width="1.07" height="1.18" fill="#2a2a2a" opacity="0.9"/><rect x="64.07" y="114.34" width="1.82" height="1.18" fill="#2a2a2a" opacity="0.9"/><rect x="70.19" y="114.34" width="2.94" height="1.18" fill="#2a2a2a" opacity="0.9"/><rect x="66.46" y="114.34" width="1.9" height="1.18" fill="#2a2a2a" opacity="0.9"/><rect x="85.63" y="114.34" width="1.64" height="1.18" fill="#2a2a2a" opacity="0.9"/><rect x="91.92" y="114.34" width="1.79" height="1.18" fill="#2a2a2a" opacity="0.9"/><rect x="69.98" y="114.34" width="1.64" height="1.18" fill="#2a2a2a" opacity="0.9"/><rect x="63.95" y="114.34" width="1.66" height="1.18" fill="#2a2a2a" opacity="0.9"/><rect x="11.52" y="111.4" width="2.7" height="0.66" fill="#9a9a9a" opacity="0.5"/><rect x="35.93" y="111.4" width="1.84" height="0.66" fill="#9a9a9a" opacity="0.5"/><rect x="2.43" y="111.4" width="1.3" height="0.66" fill="#9a9a9a" opacity="0.5"/><rect x="11.26" y="111.4" width="1.19" height="0.66" fill="#9a9a9a" opacity="0.5"/><rect x="10.8" y="111.4" width="2.65" height="0.66" fill="#9a9a9a" opacity="0.5"/><rect x="7.04" y="111.4" width="0.85" height="0.66" fill="#9a9a9a" opacity="0.5"/><rect x="40" y="111.4" width="1.98" height="0.66" fill="#9a9a9a" opacity="0.5"/><rect x="42.62" y="111.4" width="1.62" height="0.66" fill="#9a9a9a" opacity="0.5"/><rect x="38.86" y="111.4" width="2.18" height="0.66" fill="#9a9a9a" opacity="0.5"/><rect x="34.25" y="111.4" width="2.38" height="0.66" fill="#9a9a9a" opacity="0.5"/><rect x="21.82" y="111.4" width="0.94" height="0.66" fill="#9a9a9a" opacity="0.5"/><rect x="9.94" y="111.4" width="2.66" height="0.66" fill="#9a9a9a" opacity="0.5"/><rect x="38.81" y="115.07" width="2.77" height="0.66" fill="#8a8a8a" opacity="0.5"/><rect x="15.21" y="115.07" width="2.18" height="0.66" fill="#8a8a8a" opacity="0.5"/><rect x="34.61" y="115.07" width="2.15" height="0.66" fill="#8a8a8a" opacity="0.5"/><rect x="35.25" y="115.07" width="1.9" height="0.66" fill="#8a8a8a" opacity="0.5"/><rect x="28.54" y="115.07" width="2.25" height="0.66" fill="#8a8a8a" opacity="0.5"/><rect x="12.35" y="115.07" width="2.77" height="0.66" fill="#8a8a8a" opacity="0.5"/><rect x="41.18" y="115.07" width="0.9" height="0.66" fill="#8a8a8a" opacity="0.5"/><rect x="41.8" y="115.07" width="2.86" height="0.66" fill="#8a8a8a" opacity="0.5"/><rect x="29.11" y="115.07" width="0.83" height="0.66" fill="#8a8a8a" opacity="0.5"/><rect x="38.78" y="115.07" width="1.02" height="0.66" fill="#8a8a8a" opacity="0.5"/><rect x="41.7" y="115.07" width="2.21" height="0.66" fill="#8a8a8a" opacity="0.5"/><rect x="3.64" y="115.07" width="1.1" height="0.66" fill="#8a8a8a" opacity="0.5"/><rect x="27.72" y="118.01" width="1.99" height="0.66" fill="#8a8a8a" opacity="0.5"/><rect x="32.39" y="118.01" width="2.78" height="0.66" fill="#8a8a8a" opacity="0.5"/><rect x="10.26" y="118.01" width="0.74" height="0.66" fill="#8a8a8a" opacity="0.5"/><rect x="39.76" y="118.01" width="0.76" height="0.66" fill="#8a8a8a" opacity="0.5"/><rect x="37.84" y="118.01" width="0.99" height="0.66" fill="#8a8a8a" opacity="0.5"/><rect x="35.05" y="118.01" width="2.46" height="0.66" fill="#8a8a8a" opacity="0.5"/><rect x="37.9" y="118.01" width="1.95" height="0.66" fill="#8a8a8a" opacity="0.5"/><rect x="37.93" y="118.01" width="1.18" height="0.66" fill="#8a8a8a" opacity="0.5"/><rect x="29.25" y="118.01" width="1.46" height="0.66" fill="#8a8a8a" opacity="0.5"/><rect x="38.48" y="118.01" width="2.44" height="0.66" fill="#8a8a8a" opacity="0.5"/><rect x="0.37" y="113.6" width="5.15" height="2.94" fill="#2a3a60" /><rect x="54.78" y="119.34" width="20.59" height="0.88" fill="#666" /></g></svg></div><div id="th4" style="position:absolute;left:968.4px;top:1527.5px;width:121.4px;height:121.3px;overflow:hidden;background:#222"><svg width="121.4" height="121.3" viewBox="0 0 121.4 121.3" style="display:block"><defs><filter id="tb4" x="-5%" y="-5%" width="110%" height="110%"><feGaussianBlur color-interpolation-filters="sRGB" stdDeviation="0.35"/></filter><filter id="tc4" x="-20%" y="-20%" width="140%" height="140%"><feGaussianBlur color-interpolation-filters="sRGB" stdDeviation="2.5"/></filter><linearGradient id="lp4" x1="0" y1="0" x2="0" y2="1"><stop offset="0" stop-color="#e6eaec"/><stop offset=".42" stop-color="#cfd6d9"/><stop offset=".5" stop-color="#5e6e76"/><stop offset="1" stop-color="#222c32"/></linearGradient><linearGradient id="kb4" x1="0" y1="0" x2="1" y2="1"><stop offset="0" stop-color="#111"/><stop offset=".6" stop-color="#3a3d3e"/><stop offset="1" stop-color="#1a1a1a"/></linearGradient></defs><g filter="url(#tb4)"><rect width="121.4" height="121.3" fill="#1a1d1e"/><rect x="0" y="6.25" width="120.96" height="103.68" fill="#181b1c" /><rect x="15.07" y="16.54" width="87.5" height="93.38" fill="#1f2324" /><rect x="17.28" y="18.75" width="83.09" height="37.5" fill="#222627" opacity=".8"/><polyline points="15.07,66.54 102.57,66.65" fill="none" stroke="#15181a" stroke-width="0.3" stroke-linecap="round" stroke-linejoin="round" /><polyline points="15.07,70.07 102.57,70.29" fill="none" stroke="#15181a" stroke-width="0.3" stroke-linecap="round" stroke-linejoin="round" /><polyline points="15.07,73.6 102.57,73.86" fill="none" stroke="#15181a" stroke-width="0.3" stroke-linecap="round" stroke-linejoin="round" /><polyline points="15.07,77.13 102.57,77.52" fill="none" stroke="#15181a" stroke-width="0.3" stroke-linecap="round" stroke-linejoin="round" /><polyline points="15.07,80.66 102.57,80.87" fill="none" stroke="#15181a" stroke-width="0.3" stroke-linecap="round" stroke-linejoin="round" /><polyline points="15.07,84.19 102.57,84.56" fill="none" stroke="#15181a" stroke-width="0.3" stroke-linecap="round" stroke-linejoin="round" /><polyline points="15.07,87.72 102.57,87.31" fill="none" stroke="#15181a" stroke-width="0.3" stroke-linecap="round" stroke-linejoin="round" /><polyline points="15.07,91.25 102.57,91.22" fill="none" stroke="#15181a" stroke-width="0.3" stroke-linecap="round" stroke-linejoin="round" /><polyline points="15.07,94.78 102.57,95.17" fill="none" stroke="#15181a" stroke-width="0.3" stroke-linecap="round" stroke-linejoin="round" /><polyline points="15.07,98.31 102.57,98.44" fill="none" stroke="#15181a" stroke-width="0.3" stroke-linecap="round" stroke-linejoin="round" /><polyline points="15.07,101.84 102.57,102.19" fill="none" stroke="#15181a" stroke-width="0.3" stroke-linecap="round" stroke-linejoin="round" /><polyline points="15.07,105.37 102.57,105.03" fill="none" stroke="#15181a" stroke-width="0.3" stroke-linecap="round" stroke-linejoin="round" /><rect x="0" y="0" width="120.96" height="6.25" fill="#1e2021" /><rect x="13.86" y="1.99" width="1.28" height="0.66" fill="#8a8a8a" opacity="0.55"/><rect x="15.9" y="1.99" width="2" height="0.66" fill="#8a8a8a" opacity="0.55"/><rect x="1.46" y="1.99" width="1.21" height="0.66" fill="#8a8a8a" opacity="0.55"/><rect x="8.71" y="1.99" width="2.76" height="0.66" fill="#8a8a8a" opacity="0.55"/><rect x="21.94" y="1.99" width="1.09" height="0.66" fill="#8a8a8a" opacity="0.55"/><rect x="22.79" y="1.99" width="1.04" height="0.66" fill="#8a8a8a" opacity="0.55"/><rect x="17.9" y="1.99" width="1.01" height="0.66" fill="#8a8a8a" opacity="0.55"/><rect x="1.15" y="1.99" width="2.66" height="0.66" fill="#8a8a8a" opacity="0.55"/><rect x="6.8" y="1.99" width="1.21" height="0.66" fill="#8a8a8a" opacity="0.55"/><rect x="27.83" y="1.99" width="2.66" height="0.66" fill="#8a8a8a" opacity="0.55"/><rect x="8.97" y="1.99" width="2.86" height="0.66" fill="#8a8a8a" opacity="0.55"/><rect x="15.77" y="1.99" width="2.23" height="0.66" fill="#8a8a8a" opacity="0.55"/><rect x="52.51" y="1.99" width="2.81" height="0.66" fill="#8a8a8a" opacity="0.55"/><rect x="61.08" y="1.99" width="2.87" height="0.66" fill="#8a8a8a" opacity="0.55"/><rect x="64.67" y="1.99" width="1.39" height="0.66" fill="#8a8a8a" opacity="0.55"/><rect x="55.27" y="1.99" width="1.1" height="0.66" fill="#8a8a8a" opacity="0.55"/><rect x="51.47" y="1.99" width="0.88" height="0.66" fill="#8a8a8a" opacity="0.55"/><rect x="54.22" y="1.99" width="2.07" height="0.66" fill="#8a8a8a" opacity="0.55"/><rect x="48.96" y="1.99" width="2.23" height="0.66" fill="#8a8a8a" opacity="0.55"/><rect x="54.86" y="1.99" width="1.42" height="0.66" fill="#8a8a8a" opacity="0.55"/><rect x="20.36" y="4.63" width="1.8" height="0.66" fill="#666" opacity="0.6"/><rect x="8.53" y="4.63" width="1.8" height="0.66" fill="#666" opacity="0.6"/><rect x="17.68" y="4.63" width="0.86" height="0.66" fill="#666" opacity="0.6"/><rect x="24.05" y="4.63" width="0.79" height="0.66" fill="#666" opacity="0.6"/><rect x="18.75" y="4.63" width="2.6" height="0.66" fill="#666" opacity="0.6"/><rect x="1.53" y="4.63" width="2.47" height="0.66" fill="#666" opacity="0.6"/><rect x="9.72" y="4.63" width="2.01" height="0.66" fill="#666" opacity="0.6"/><rect x="1.32" y="4.63" width="0.84" height="0.66" fill="#666" opacity="0.6"/><rect x="5.36" y="4.63" width="2.84" height="0.66" fill="#666" opacity="0.6"/><rect x="5.73" y="4.63" width="2.4" height="0.66" fill="#666" opacity="0.6"/><rect x="34.93" y="4.78" width="16.91" height="1.1" fill="#777" /><rect x="37.87" y="4.63" width="2.21" height="1.47" fill="#cfe" /><rect x="81.26" y="4.41" width="2.81" height="1.18" fill="#eee" opacity="0.9"/><rect x="75.24" y="4.41" width="1.52" height="1.18" fill="#eee" opacity="0.9"/><rect x="77.09" y="4.41" width="2.45" height="1.18" fill="#eee" opacity="0.9"/><rect x="72.8" y="4.41" width="2.39" height="1.18" fill="#eee" opacity="0.9"/><rect x="97.06" y="1.69" width="2.21" height="1.99" fill="#4a7ad0" /><rect x="101.1" y="1.69" width="2.21" height="1.99" fill="#5a8ae0" /><rect x="107.72" y="1.84" width="6.62" height="1.62" fill="#9ab" /><rect x="4.78" y="7.35" width="9.56" height="0.74" fill="#aaa" opacity=".7"/><rect x="4.78" y="9.04" width="17.65" height="0.88" fill="#ddd" opacity=".8"/><rect x="4.78" y="10.66" width="8.09" height="0.74" fill="#888" opacity=".6"/><rect x="0.15" y="13.97" width="3.16" height="2.94" fill="#4a86e0" /><rect x="0.96" y="8.09" width="1.76" height="1.47" fill="#c04040" opacity=".75"/><rect x="0.96" y="11.03" width="1.76" height="1.47" fill="#a33" opacity=".75"/><rect x="0.96" y="18.38" width="1.76" height="1.47" fill="#bbb" opacity=".75"/><rect x="0.96" y="21.32" width="1.76" height="1.47" fill="#c9a050" opacity=".75"/><rect x="0.96" y="24.63" width="1.76" height="1.47" fill="#ccc" opacity=".75"/><rect x="0.96" y="27.94" width="1.76" height="1.47" fill="#ccc" opacity=".75"/><rect x="0.96" y="31.25" width="1.76" height="1.47" fill="#ccc" opacity=".75"/><rect x="0.96" y="34.56" width="1.76" height="1.47" fill="#777" opacity=".75"/><circle cx="114.71" cy="7.72" r="0.66" fill="#3a78d0" /><circle cx="111.76" cy="10.81" r="0.74" fill="#7ab020" /><circle cx="116.18" cy="10.81" r="1.18" fill="#e04a5a" /><circle cx="114.34" cy="13.97" r="0.59" fill="#3a78d0" /><rect x="116.18" y="14.71" width="2.21" height="1.69" fill="#eee" /><rect x="115.96" y="17.87" width="2.65" height="1.62" fill="#eee" /><polygon points="51.84,20.96 54.78,15.07 59.93,12.72 65.81,15.07 68.75,22.43 68.01,31.25 65.81,40.81 59.19,41.54 56.25,37.13 53.31,29.78" fill="#b9bdbd" /><polygon points="51.1,21.69 54.04,17.28 54.04,31.25 56.99,40.07 55.51,40.81 51.84,29.78" fill="#8f9696" /><polyline points="57.72,18.01 59.56,19.85" fill="none" stroke="#c42a2e" stroke-width="1.5" stroke-linecap="round" stroke-linejoin="round" stroke-linecap="butt"/><polyline points="59.19,22.43 65.44,18.38" fill="none" stroke="#c42a2e" stroke-width="1.5" stroke-linecap="round" stroke-linejoin="round" stroke-linecap="butt"/><polyline points="59.56,27.57 66.54,23.16" fill="none" stroke="#c42a2e" stroke-width="1.5" stroke-linecap="round" stroke-linejoin="round" stroke-linecap="butt"/><polyline points="61.4,30.51 66.54,27.21" fill="none" stroke="#c42a2e" stroke-width="1.5" stroke-linecap="round" stroke-linejoin="round" stroke-linecap="butt"/><circle cx="62.13" cy="37.13" r="1.32" fill="#4a5050" /><circle cx="62.13" cy="37.13" r="0.59" fill="#9a9f9f" /><polyline points="56.99,40.81 59.56,44.49" fill="none" stroke="#333" stroke-width="0.5" stroke-linecap="round" stroke-linejoin="round" /><polyline points="63.6,40.81 61.4,44.49" fill="none" stroke="#333" stroke-width="0.5" stroke-linecap="round" stroke-linejoin="round" /><ellipse cx="59.04" cy="48.53" rx="3.4" ry="4.6" fill="#191b1c" stroke="#0c0d0e" stroke-width=".6"/><polygon points="61.4,48.9 66.54,44.49 67.28,45.96 62.87,51.1" fill="#1f2223" /><rect x="46.1" y="63.46" width="25.44" height="20.15" fill="#0c0c0c" /><rect x="47.06" y="64.19" width="23.75" height="18.68" fill="url(#lp4)" /><polygon points="47.06,72.43 51.1,70.22 55.51,74.63 59.19,76.84 62.87,73.9 67.28,70.96 70.81,73.16 70.81,82.87 47.06,82.87" fill="#2c3a42" opacity=".9"/><polygon points="56.25,82.87 59.19,76.1 61.4,82.87" fill="#aeb8bc" opacity=".6"/><rect x="47.43" y="80.15" width="16.18" height="1.99" fill="#e8e8e8" opacity=".85"/><rect x="58.64" y="80.51" width="2.63" height="1.18" fill="#333" opacity="0.8"/><rect x="48.29" y="80.51" width="2.82" height="1.18" fill="#333" opacity="0.8"/><rect x="49.03" y="80.51" width="1.49" height="1.18" fill="#333" opacity="0.8"/><rect x="56.1" y="80.51" width="2.76" height="1.18" fill="#333" opacity="0.8"/><rect x="52.42" y="80.51" width="2.77" height="1.18" fill="#333" opacity="0.8"/><rect x="55.21" y="80.51" width="1.42" height="1.18" fill="#333" opacity="0.8"/><rect x="52.1" y="80.51" width="1.13" height="1.18" fill="#333" opacity="0.8"/><polygon points="46.54,85.29 71.1,84.19 78.68,91.91 57.13,95.07" fill="url(#kb4)" /><polygon points="51.84,86.25 69.49,85.51 74.63,90.44 58.46,92.43" fill="#232526" opacity=".8"/><rect x="0" y="109.93" width="120.96" height="11.03" fill="#1c1c1c" /><rect x="0" y="109.93" width="120.96" height="2.06" fill="#262626" /><rect x="11.6" y="110.37" width="1.06" height="0.74" fill="#8a8a8a" opacity="0.55"/><rect x="82.13" y="110.37" width="2.93" height="0.74" fill="#8a8a8a" opacity="0.55"/><rect x="21.22" y="110.37" width="0.84" height="0.74" fill="#8a8a8a" opacity="0.55"/><rect x="116.48" y="110.37" width="1.91" height="0.74" fill="#8a8a8a" opacity="0.55"/><rect x="49.43" y="110.37" width="1.26" height="0.74" fill="#8a8a8a" opacity="0.55"/><rect x="71.14" y="110.37" width="2.56" height="0.74" fill="#8a8a8a" opacity="0.55"/><rect x="55.18" y="110.37" width="1.67" height="0.74" fill="#8a8a8a" opacity="0.55"/><rect x="9" y="110.37" width="2.76" height="0.74" fill="#8a8a8a" opacity="0.55"/><rect x="6.35" y="110.37" width="1.82" height="0.74" fill="#8a8a8a" opacity="0.55"/><rect x="99.36" y="110.37" width="1.02" height="0.74" fill="#8a8a8a" opacity="0.55"/><rect x="87.04" y="110.37" width="2.83" height="0.74" fill="#8a8a8a" opacity="0.55"/><rect x="75.35" y="110.37" width="2.47" height="0.74" fill="#8a8a8a" opacity="0.55"/><rect x="14.88" y="110.37" width="1.69" height="0.74" fill="#8a8a8a" opacity="0.55"/><rect x="19.8" y="110.37" width="2.6" height="0.74" fill="#8a8a8a" opacity="0.55"/><rect x="36.61" y="110.37" width="1.73" height="0.74" fill="#8a8a8a" opacity="0.55"/><rect x="117.93" y="110.37" width="2.62" height="0.74" fill="#8a8a8a" opacity="0.55"/><rect x="115.24" y="110.37" width="1.74" height="0.74" fill="#8a8a8a" opacity="0.55"/><rect x="58.93" y="110.37" width="2.34" height="0.74" fill="#8a8a8a" opacity="0.55"/><rect x="57.87" y="110.37" width="1.38" height="0.74" fill="#8a8a8a" opacity="0.55"/><rect x="49.19" y="110.37" width="1.06" height="0.74" fill="#8a8a8a" opacity="0.55"/><rect x="46.09" y="110.37" width="2.92" height="0.74" fill="#8a8a8a" opacity="0.55"/><rect x="113.38" y="110.37" width="2.12" height="0.74" fill="#8a8a8a" opacity="0.55"/><rect x="60.22" y="110.37" width="1.48" height="0.74" fill="#8a8a8a" opacity="0.55"/><rect x="12.86" y="110.37" width="1.34" height="0.74" fill="#8a8a8a" opacity="0.55"/><rect x="92.85" y="110.37" width="2.65" height="0.74" fill="#8a8a8a" opacity="0.55"/><rect x="44.29" y="110.37" width="2.47" height="0.74" fill="#8a8a8a" opacity="0.55"/><rect x="92.03" y="110.37" width="2.27" height="0.74" fill="#8a8a8a" opacity="0.55"/><rect x="79.23" y="110.37" width="2.41" height="0.74" fill="#8a8a8a" opacity="0.55"/><rect x="44.53" y="110.37" width="2.29" height="0.74" fill="#8a8a8a" opacity="0.55"/><rect x="35" y="110.37" width="1.81" height="0.74" fill="#8a8a8a" opacity="0.55"/><rect x="91.43" y="110.37" width="2.26" height="0.74" fill="#8a8a8a" opacity="0.55"/><rect x="36.5" y="110.37" width="2.82" height="0.74" fill="#8a8a8a" opacity="0.55"/><rect x="77.57" y="110.37" width="2.02" height="0.74" fill="#8a8a8a" opacity="0.55"/><rect x="3.91" y="110.37" width="1.94" height="0.74" fill="#8a8a8a" opacity="0.55"/><rect x="31.51" y="110.37" width="2.22" height="0.74" fill="#8a8a8a" opacity="0.55"/><rect x="56.02" y="110.37" width="2.54" height="0.74" fill="#8a8a8a" opacity="0.55"/><rect x="29.04" y="110.22" width="10.29" height="1.32" fill="#cfcfcf" /><rect x="0" y="111.99" width="62.13" height="6.03" fill="#242424" /><rect x="13.01" y="112.13" width="1.76" height="2.06" fill="#4a86e0" /><polyline points="13.9,114.19 13.9,118.01" fill="none" stroke="#4a86e0" stroke-width="0.25" stroke-linecap="round" stroke-linejoin="round" /><rect x="0.37" y="117.28" width="61.03" height="0.59" fill="#444" /><rect x="94.85" y="112.5" width="23.53" height="7.35" fill="#3a3a3a" /><rect x="95.96" y="113.24" width="5.88" height="0.88" fill="#999" opacity=".7"/><rect x="95.96" y="115.22" width="6.62" height="0.88" fill="#999" opacity=".7"/><rect x="95.22" y="117.65" width="5.15" height="1.25" fill="#4a7ad0" /></g></svg></div><div id="th5" style="position:absolute;left:1107.5px;top:1527.5px;width:121.4px;height:121.3px;overflow:hidden;background:#222"><svg width="121.4" height="121.3" viewBox="0 0 121.4 121.3" style="display:block"><defs><filter id="tb5" x="-5%" y="-5%" width="110%" height="110%"><feGaussianBlur color-interpolation-filters="sRGB" stdDeviation="0.35"/></filter><filter id="tc5" x="-20%" y="-20%" width="140%" height="140%"><feGaussianBlur color-interpolation-filters="sRGB" stdDeviation="2.5"/></filter><linearGradient id="a5" x1="0" y1="0" x2="0" y2="1"><stop offset="0" stop-color="#585858"/><stop offset="1" stop-color="#1c1c1c"/></linearGradient><linearGradient id="b5" x1="0" y1="0" x2="1" y2="0"><stop offset="0" stop-color="#2e2e2e"/><stop offset=".5" stop-color="#1a1a1a"/><stop offset="1" stop-color="#0a0a0a"/></linearGradient><linearGradient id="c5" x1="0" y1="0" x2="0" y2="1"><stop offset="0" stop-color="#303030"/><stop offset="1" stop-color="#121212"/></linearGradient><radialGradient id="d5" cx="50%" cy="0%" r="90%"><stop offset="0" stop-color="#4a4a4a"/><stop offset="1" stop-color="#0a0a0a" stop-opacity="0"/></radialGradient></defs><g filter="url(#tb5)"><rect width="121.4" height="121.3" fill="#030303"/><rect x="0" y="0" width="120.96" height="6.62" fill="#0c0c0c" /><rect x="14.98" y="1.84" width="2.55" height="0.66" fill="#8a8a8a" opacity="0.6"/><rect x="10.44" y="1.84" width="1.31" height="0.66" fill="#8a8a8a" opacity="0.6"/><rect x="3.32" y="1.84" width="2.2" height="0.66" fill="#8a8a8a" opacity="0.6"/><rect x="10.22" y="1.84" width="2.41" height="0.66" fill="#8a8a8a" opacity="0.6"/><rect x="8.8" y="1.84" width="2.43" height="0.66" fill="#8a8a8a" opacity="0.6"/><rect x="7.32" y="1.84" width="2.5" height="0.66" fill="#8a8a8a" opacity="0.6"/><rect x="61.58" y="1.99" width="1.65" height="0.66" fill="#777" opacity="0.6"/><rect x="58.06" y="1.99" width="2.24" height="0.66" fill="#777" opacity="0.6"/><rect x="51.71" y="1.99" width="1.96" height="0.66" fill="#777" opacity="0.6"/><rect x="62.96" y="1.99" width="1.32" height="0.66" fill="#777" opacity="0.6"/><rect x="62.93" y="1.99" width="2.25" height="0.66" fill="#777" opacity="0.6"/><rect x="63.68" y="1.99" width="1.48" height="0.66" fill="#777" opacity="0.6"/><rect x="49.87" y="1.99" width="2.5" height="0.66" fill="#777" opacity="0.6"/><rect x="62.96" y="1.99" width="1.72" height="0.66" fill="#777" opacity="0.6"/><rect x="3.08" y="4.63" width="1.17" height="0.66" fill="#666" opacity="0.6"/><rect x="10.24" y="4.63" width="1.38" height="0.66" fill="#666" opacity="0.6"/><rect x="14.43" y="4.63" width="2.03" height="0.66" fill="#666" opacity="0.6"/><rect x="4.5" y="4.63" width="2.18" height="0.66" fill="#666" opacity="0.6"/><rect x="6.61" y="4.63" width="2.79" height="0.66" fill="#666" opacity="0.6"/><rect x="13.88" y="4.63" width="1.87" height="0.66" fill="#666" opacity="0.6"/><rect x="34.93" y="4.19" width="16.18" height="1.47" fill="#888" /><rect x="78.11" y="4.19" width="2.27" height="1.18" fill="#eee" opacity="0.9"/><rect x="79.53" y="4.19" width="2.89" height="1.18" fill="#eee" opacity="0.9"/><rect x="72.68" y="4.19" width="1.53" height="1.18" fill="#eee" opacity="0.9"/><rect x="77.74" y="4.19" width="1.41" height="1.18" fill="#eee" opacity="0.9"/><rect x="108.09" y="1.69" width="2.21" height="1.76" fill="#4a7ad0" /><rect x="112.13" y="1.69" width="2.21" height="1.76" fill="#6aa0e8" /><rect x="17.28" y="11.76" width="84.56" height="84.93" fill="none" stroke="#3a2c14" stroke-width=".35"/><polyline points="13.97,7.72 13.97,104.78" fill="none" stroke="#151515" stroke-width="0.25" stroke-linecap="round" stroke-linejoin="round" /><polyline points="104.04,7.72 104.04,104.78" fill="none" stroke="#151515" stroke-width="0.25" stroke-linecap="round" stroke-linejoin="round" /><polyline points="4.04,101.1 118.01,101.1" fill="none" stroke="#151515" stroke-width="0.25" stroke-linecap="round" stroke-linejoin="round" /><rect x="51.1" y="23.16" width="22.79" height="21.69" fill="url(#b5)" /><rect x="33.09" y="23.16" width="18.01" height="14.71" rx="1.6" fill="url(#a5)"/><polygon points="27.57,40.07 48.9,37.87 48.9,45.96 34.19,48.9" fill="url(#d5)" opacity=".9"/><rect x="67.28" y="45.96" width="32.35" height="13.97" fill="#191919" /><rect x="58.46" y="45.96" width="8.46" height="16.18" fill="#242424" /><rect x="48.9" y="62.13" width="24.26" height="23.53" fill="url(#c5)" /><rect x="48.9" y="62.13" width="24.26" height="23.53" fill="none" stroke="#9a9a9a" stroke-width=".3" stroke-dasharray=".5 .9"/><polyline points="48.9,45.59 66.54,45.59 66.54,62.13" fill="none" stroke="#8a8a8a" stroke-width="0.25" stroke-linecap="round" stroke-linejoin="round" stroke-dasharray=".5 .9"/><polyline points="73.9,23.16 73.9,44.49" fill="none" stroke="#555" stroke-width="0.2" stroke-linecap="round" stroke-linejoin="round" stroke-dasharray=".5 .9"/><rect x="53.9" y="49.63" width="3.24" height="9.93" fill="#050505" stroke="#777" stroke-width=".2"/><rect x="54.63" y="55.51" width="1.76" height="1.47" fill="#ccc" /><polyline points="16.54,57.72 20.22,48.9" fill="none" stroke="#777" stroke-width="0.28" stroke-linecap="round" stroke-linejoin="round" opacity=".7"/><polyline points="40.07,57.72 46.69,49.63" fill="none" stroke="#777" stroke-width="0.28" stroke-linecap="round" stroke-linejoin="round" opacity=".7"/><polyline points="107.72,41.54 113.6,47.43" fill="none" stroke="#777" stroke-width="0.28" stroke-linecap="round" stroke-linejoin="round" opacity=".7"/><polyline points="94.49,44.49 98.16,47.43" fill="none" stroke="#777" stroke-width="0.28" stroke-linecap="round" stroke-linejoin="round" opacity=".7"/><polyline points="79.78,59.19 83.46,62.5" fill="none" stroke="#777" stroke-width="0.28" stroke-linecap="round" stroke-linejoin="round" opacity=".7"/><polyline points="94.49,59.19 98.16,62.13" fill="none" stroke="#777" stroke-width="0.28" stroke-linecap="round" stroke-linejoin="round" opacity=".7"/><polyline points="107.72,58.46 113.6,62.5" fill="none" stroke="#777" stroke-width="0.28" stroke-linecap="round" stroke-linejoin="round" opacity=".7"/><polyline points="72.43,45.96 74.63,44.49" fill="none" stroke="#777" stroke-width="0.28" stroke-linecap="round" stroke-linejoin="round" opacity=".7"/><polyline points="15.07,58.09 48.9,58.09" fill="none" stroke="#222" stroke-width="0.3" stroke-linecap="round" stroke-linejoin="round" /><polyline points="73.9,59.56 114.34,59.56" fill="none" stroke="#1c1c1c" stroke-width="0.3" stroke-linecap="round" stroke-linejoin="round" /><rect x="0" y="105.51" width="120.96" height="15.44" fill="#1a1b1c" /><rect x="9.33" y="107.35" width="0.93" height="0.74" fill="#9a9a9a" opacity="0.6"/><rect x="13.4" y="107.35" width="1.89" height="0.74" fill="#9a9a9a" opacity="0.6"/><rect x="2.74" y="107.35" width="2.2" height="0.74" fill="#9a9a9a" opacity="0.6"/><rect x="5.47" y="107.35" width="1.17" height="0.74" fill="#9a9a9a" opacity="0.6"/><rect x="7.86" y="107.35" width="1.04" height="0.74" fill="#9a9a9a" opacity="0.6"/><rect x="52.06" y="107.5" width="2.64" height="0.66" fill="#777" opacity="0.6"/><rect x="62.83" y="107.5" width="0.76" height="0.66" fill="#777" opacity="0.6"/><rect x="64.59" y="107.5" width="0.77" height="0.66" fill="#777" opacity="0.6"/><rect x="54.77" y="107.5" width="2.73" height="0.66" fill="#777" opacity="0.6"/><rect x="61.11" y="107.5" width="1.41" height="0.66" fill="#777" opacity="0.6"/><rect x="55.75" y="107.5" width="1.59" height="0.66" fill="#777" opacity="0.6"/><rect x="50.22" y="107.5" width="2.94" height="0.66" fill="#777" opacity="0.6"/><rect x="48.61" y="107.5" width="1.67" height="0.66" fill="#777" opacity="0.6"/><rect x="105.51" y="109.93" width="15.44" height="8.97" fill="#3a3a3a" /><rect x="106.62" y="111.54" width="6.99" height="0.88" fill="#999" opacity=".7"/><rect x="106.62" y="114.34" width="9.93" height="0.88" fill="#999" opacity=".6"/><rect x="106.25" y="116.54" width="5.15" height="1.47" fill="#5a8ae0" /></g></svg></div><div id="th6" style="position:absolute;left:1246.6px;top:1527.5px;width:121.4px;height:121.3px;overflow:hidden;background:#222"><svg width="121.4" height="121.3" viewBox="0 0 121.4 121.3" style="display:block"><defs><filter id="tb6" x="-5%" y="-5%" width="110%" height="110%"><feGaussianBlur color-interpolation-filters="sRGB" stdDeviation="0.35"/></filter><filter id="tc6" x="-20%" y="-20%" width="140%" height="140%"><feGaussianBlur color-interpolation-filters="sRGB" stdDeviation="2.5"/></filter></defs><g filter="url(#tb6)"><rect width="121.4" height="121.3" fill="#8b8c8c"/><rect x="18.01" y="11.4" width="2.94" height="3.68" fill="#f2f2f2" /><rect x="16.91" y="11.4" width="0.96" height="1.32" fill="#d88" opacity=".7"/><rect x="21.69" y="11.76" width="5.15" height="0.74" fill="#a0a0a0" opacity=".6"/><rect x="21.69" y="14.34" width="5.15" height="0.74" fill="#a0a0a0" opacity=".6"/><rect x="21.69" y="16.54" width="5.15" height="0.74" fill="#a0a0a0" opacity=".6"/><rect x="21.69" y="18.75" width="5.15" height="0.74" fill="#a0a0a0" opacity=".6"/><rect x="21.69" y="20.96" width="5.15" height="0.74" fill="#a0a0a0" opacity=".6"/><rect x="21.69" y="23.16" width="5.15" height="0.74" fill="#a0a0a0" opacity=".6"/><rect x="21.69" y="25.37" width="5.15" height="0.74" fill="#a0a0a0" opacity=".6"/><rect x="21.69" y="27.57" width="5.15" height="0.74" fill="#a0a0a0" opacity=".6"/><rect x="22.06" y="22.06" width="1.1" height="1.1" fill="#d66" opacity=".7"/><rect x="28.31" y="11.99" width="2.94" height="0.88" fill="#ddd" /><rect x="32.72" y="11.99" width="5.29" height="3.09" fill="#c4c4c4" /><rect x="32.72" y="16.18" width="1.47" height="2.57" fill="#e4e4e4" /><rect x="38.97" y="11.76" width="5.15" height="7.13" fill="#f2f2f2" /><rect x="44.85" y="11.99" width="15.96" height="6.91" fill="#474747" /><rect x="45.37" y="9.19" width="3.53" height="2.21" fill="#555" /><rect x="50.74" y="13.97" width="1.07" height="1.18" fill="#eee" opacity="0.85"/><rect x="54.83" y="13.97" width="0.9" height="1.18" fill="#eee" opacity="0.85"/><rect x="53.39" y="13.97" width="1.54" height="1.18" fill="#eee" opacity="0.85"/><rect x="47.42" y="13.97" width="1.85" height="1.18" fill="#eee" opacity="0.85"/><rect x="47.16" y="13.97" width="1.69" height="1.18" fill="#eee" opacity="0.85"/><rect x="47.56" y="13.97" width="0.94" height="1.18" fill="#eee" opacity="0.85"/><rect x="62.5" y="12.5" width="3.31" height="1.1" fill="#777" opacity=".6"/><rect x="62.5" y="18.01" width="3.46" height="1.91" fill="#222" /><rect x="22.06" y="36.03" width="5.66" height="35.81" fill="#f2f2f2" /><rect x="22.5" y="36.62" width="4.78" height="0.88" fill="#b8b8b8" opacity=".75"/><rect x="22.5" y="38.68" width="4.78" height="1.18" fill="#b8b8b8" opacity=".75"/><rect x="22.5" y="40.74" width="4.78" height="0.59" fill="#b8b8b8" opacity=".75"/><rect x="22.5" y="42.79" width="4.78" height="1.18" fill="#777" opacity=".75"/><rect x="22.5" y="44.85" width="4.78" height="0.59" fill="#9aa" opacity=".75"/><rect x="22.5" y="46.91" width="4.78" height="0.59" fill="#9aa" opacity=".75"/><rect x="22.5" y="48.97" width="4.78" height="0.88" fill="#777" opacity=".75"/><rect x="22.5" y="51.03" width="4.78" height="0.59" fill="#b8b8b8" opacity=".75"/><rect x="22.5" y="53.09" width="4.78" height="1.18" fill="#cfcfcf" opacity=".75"/><rect x="22.5" y="55.15" width="4.78" height="1.18" fill="#9aa" opacity=".75"/><rect x="22.5" y="57.21" width="4.78" height="0.59" fill="#9aa" opacity=".75"/><rect x="22.5" y="59.26" width="4.78" height="0.88" fill="#b8b8b8" opacity=".75"/><rect x="22.5" y="61.32" width="4.78" height="1.18" fill="#b8b8b8" opacity=".75"/><rect x="22.5" y="63.38" width="4.78" height="1.18" fill="#b8b8b8" opacity=".75"/><rect x="22.5" y="65.44" width="4.78" height="1.18" fill="#9aa" opacity=".75"/><rect x="22.06" y="67.43" width="5.66" height="4.41" fill="#3a3a3a" /><rect x="28.31" y="36.03" width="3.82" height="27.72" fill="#f2f2f2" /><rect x="28.75" y="36.62" width="2.94" height="0.88" fill="#777" opacity=".75"/><rect x="28.75" y="38.68" width="2.94" height="0.88" fill="#777" opacity=".75"/><rect x="28.75" y="40.74" width="2.94" height="1.18" fill="#777" opacity=".75"/><rect x="28.75" y="42.79" width="2.94" height="0.88" fill="#cfcfcf" opacity=".75"/><rect x="28.75" y="44.85" width="2.94" height="0.59" fill="#9aa" opacity=".75"/><rect x="28.75" y="46.91" width="2.94" height="1.18" fill="#9aa" opacity=".75"/><rect x="28.75" y="48.97" width="2.94" height="0.59" fill="#cfcfcf" opacity=".75"/><rect x="28.75" y="51.03" width="2.94" height="1.18" fill="#777" opacity=".75"/><rect x="28.75" y="53.09" width="2.94" height="0.88" fill="#777" opacity=".75"/><rect x="28.75" y="55.15" width="2.94" height="0.88" fill="#b8b8b8" opacity=".75"/><rect x="28.75" y="57.21" width="2.94" height="0.59" fill="#777" opacity=".75"/><rect x="28.75" y="59.26" width="2.94" height="0.59" fill="#cfcfcf" opacity=".75"/><rect x="28.31" y="60.81" width="3.82" height="2.94" fill="#3a3a3a" /><rect x="32.72" y="39.34" width="3.53" height="26.1" fill="#f2f2f2" /><rect x="33.16" y="39.93" width="2.65" height="0.59" fill="#777" opacity=".75"/><rect x="33.16" y="41.99" width="2.65" height="0.88" fill="#b8b8b8" opacity=".75"/><rect x="33.16" y="44.04" width="2.65" height="1.18" fill="#b8b8b8" opacity=".75"/><rect x="33.16" y="46.1" width="2.65" height="1.18" fill="#cfcfcf" opacity=".75"/><rect x="33.16" y="48.16" width="2.65" height="0.88" fill="#cfcfcf" opacity=".75"/><rect x="33.16" y="50.22" width="2.65" height="1.18" fill="#777" opacity=".75"/><rect x="33.16" y="52.28" width="2.65" height="1.18" fill="#777" opacity=".75"/><rect x="33.16" y="54.34" width="2.65" height="0.59" fill="#b8b8b8" opacity=".75"/><rect x="33.16" y="56.4" width="2.65" height="0.88" fill="#777" opacity=".75"/><rect x="33.16" y="58.46" width="2.65" height="1.18" fill="#b8b8b8" opacity=".75"/><rect x="33.16" y="60.51" width="2.65" height="0.59" fill="#cfcfcf" opacity=".75"/><rect x="32.72" y="63.24" width="3.53" height="2.21" fill="#3a3a3a" /><rect x="16.4" y="43.75" width="20" height="1.91" fill="#1c1c1c" /><rect x="22.06" y="54.78" width="5.66" height="2.94" fill="#3d5a70" /><rect x="28.31" y="51.84" width="7.94" height="2.21" fill="#4a6a78" opacity=".8"/><rect x="54.04" y="43.75" width="5.29" height="28.09" fill="#f2f2f2" /><rect x="54.49" y="44.34" width="4.41" height="1.18" fill="#777" opacity=".75"/><rect x="54.49" y="46.4" width="4.41" height="0.88" fill="#777" opacity=".75"/><rect x="54.49" y="48.46" width="4.41" height="1.18" fill="#cfcfcf" opacity=".75"/><rect x="54.49" y="50.51" width="4.41" height="0.59" fill="#777" opacity=".75"/><rect x="54.49" y="52.57" width="4.41" height="0.88" fill="#9aa" opacity=".75"/><rect x="54.49" y="54.63" width="4.41" height="1.18" fill="#b8b8b8" opacity=".75"/><rect x="54.49" y="56.69" width="4.41" height="0.88" fill="#b8b8b8" opacity=".75"/><rect x="54.49" y="58.75" width="4.41" height="0.59" fill="#cfcfcf" opacity=".75"/><rect x="54.49" y="60.81" width="4.41" height="0.59" fill="#9aa" opacity=".75"/><rect x="54.49" y="62.87" width="4.41" height="0.88" fill="#777" opacity=".75"/><rect x="54.49" y="64.93" width="4.41" height="0.88" fill="#b8b8b8" opacity=".75"/><rect x="54.49" y="66.99" width="4.41" height="0.59" fill="#777" opacity=".75"/><rect x="54.04" y="67.79" width="5.29" height="4.04" fill="#3a3a3a" /><rect x="59.93" y="43.75" width="3.82" height="20.74" fill="#f2f2f2" /><rect x="60.37" y="44.34" width="2.94" height="0.88" fill="#cfcfcf" opacity=".75"/><rect x="60.37" y="46.4" width="2.94" height="0.59" fill="#777" opacity=".75"/><rect x="60.37" y="48.46" width="2.94" height="1.18" fill="#cfcfcf" opacity=".75"/><rect x="60.37" y="50.51" width="2.94" height="1.18" fill="#777" opacity=".75"/><rect x="60.37" y="52.57" width="2.94" height="0.88" fill="#777" opacity=".75"/><rect x="60.37" y="54.63" width="2.94" height="0.59" fill="#9aa" opacity=".75"/><rect x="60.37" y="56.69" width="2.94" height="0.59" fill="#9aa" opacity=".75"/><rect x="60.37" y="58.75" width="2.94" height="0.59" fill="#9aa" opacity=".75"/><rect x="60.37" y="60.81" width="2.94" height="1.18" fill="#9aa" opacity=".75"/><rect x="59.93" y="61.91" width="3.82" height="2.57" fill="#3a3a3a" /><rect x="64.71" y="43.75" width="3.46" height="22.43" fill="#f2f2f2" /><rect x="65.15" y="44.34" width="2.57" height="0.59" fill="#777" opacity=".75"/><rect x="65.15" y="46.4" width="2.57" height="1.18" fill="#9aa" opacity=".75"/><rect x="65.15" y="48.46" width="2.57" height="0.88" fill="#cfcfcf" opacity=".75"/><rect x="65.15" y="50.51" width="2.57" height="0.59" fill="#9aa" opacity=".75"/><rect x="65.15" y="52.57" width="2.57" height="0.88" fill="#cfcfcf" opacity=".75"/><rect x="65.15" y="54.63" width="2.57" height="1.18" fill="#cfcfcf" opacity=".75"/><rect x="65.15" y="56.69" width="2.57" height="0.59" fill="#b8b8b8" opacity=".75"/><rect x="65.15" y="58.75" width="2.57" height="0.88" fill="#777" opacity=".75"/><rect x="65.15" y="60.81" width="2.57" height="0.88" fill="#777" opacity=".75"/><rect x="65.15" y="62.87" width="2.57" height="0.88" fill="#b8b8b8" opacity=".75"/><rect x="64.71" y="63.97" width="3.46" height="2.21" fill="#3a3a3a" /><rect x="54.04" y="43.75" width="14.12" height="3.68" fill="#2f4354" /><rect x="48.16" y="54.04" width="5.59" height="5.15" fill="#0a0a0a" /><circle cx="57.72" cy="50" r="0.88" fill="#222" /><circle cx="66.18" cy="50" r="0.74" fill="#222" /><rect x="75.74" y="43.75" width="5.29" height="9.71" fill="#f2f2f2" /><rect x="76.18" y="44.34" width="4.41" height="0.88" fill="#777" opacity=".75"/><rect x="76.18" y="46.4" width="4.41" height="0.59" fill="#9aa" opacity=".75"/><rect x="76.18" y="48.46" width="4.41" height="0.59" fill="#9aa" opacity=".75"/><rect x="75.74" y="49.78" width="5.29" height="3.68" fill="#3a3a3a" /><rect x="81.62" y="43.75" width="4.19" height="7.5" fill="#f2f2f2" /><rect x="82.06" y="44.34" width="3.31" height="0.88" fill="#9aa" opacity=".75"/><rect x="82.06" y="46.4" width="3.31" height="0.59" fill="#cfcfcf" opacity=".75"/><rect x="82.06" y="48.46" width="3.31" height="1.18" fill="#b8b8b8" opacity=".75"/><rect x="81.62" y="49.41" width="4.19" height="1.84" fill="#3a3a3a" /><rect x="86.4" y="43.75" width="2.35" height="8.24" fill="#f2f2f2" /><rect x="86.84" y="44.34" width="1.47" height="0.59" fill="#b8b8b8" opacity=".75"/><rect x="86.84" y="46.4" width="1.47" height="1.18" fill="#9aa" opacity=".75"/><rect x="86.84" y="48.46" width="1.47" height="1.18" fill="#b8b8b8" opacity=".75"/><rect x="86.4" y="50.66" width="2.35" height="1.32" fill="#3a3a3a" /><rect x="89.34" y="43.75" width="3.82" height="6.03" fill="#f2f2f2" /><rect x="89.78" y="44.34" width="2.94" height="0.88" fill="#b8b8b8" opacity=".75"/><rect x="89.78" y="46.4" width="2.94" height="0.59" fill="#9aa" opacity=".75"/><circle cx="91.18" cy="49.63" r="0.66" fill="#555" /><rect x="100" y="43.75" width="4.93" height="13.38" fill="#f2f2f2" /><rect x="100.44" y="44.34" width="4.04" height="1.18" fill="#777" opacity=".75"/><rect x="100.44" y="46.4" width="4.04" height="0.59" fill="#cfcfcf" opacity=".75"/><rect x="100.44" y="48.46" width="4.04" height="0.88" fill="#cfcfcf" opacity=".75"/><rect x="100.44" y="50.51" width="4.04" height="0.88" fill="#b8b8b8" opacity=".75"/><rect x="100.44" y="52.57" width="4.04" height="0.59" fill="#777" opacity=".75"/><rect x="100" y="53.46" width="4.93" height="3.68" fill="#3a3a3a" /><rect x="105.51" y="43.75" width="3.82" height="8.97" fill="#f2f2f2" /><rect x="105.96" y="44.34" width="2.94" height="0.88" fill="#777" opacity=".75"/><rect x="105.96" y="46.4" width="2.94" height="0.88" fill="#cfcfcf" opacity=".75"/><rect x="105.96" y="48.46" width="2.94" height="0.59" fill="#9aa" opacity=".75"/><rect x="105.51" y="50.66" width="3.82" height="2.06" fill="#3a3a3a" /><rect x="109.93" y="43.75" width="3.09" height="12.65" fill="#f2f2f2" /><rect x="110.37" y="44.34" width="2.21" height="0.59" fill="#cfcfcf" opacity=".75"/><rect x="110.37" y="46.4" width="2.21" height="1.18" fill="#cfcfcf" opacity=".75"/><rect x="110.37" y="48.46" width="2.21" height="0.88" fill="#9aa" opacity=".75"/><rect x="110.37" y="50.51" width="2.21" height="1.18" fill="#b8b8b8" opacity=".75"/><rect x="110.37" y="52.57" width="2.21" height="0.59" fill="#cfcfcf" opacity=".75"/><rect x="109.93" y="54.78" width="3.09" height="1.62" fill="#3a3a3a" /><rect x="22.06" y="87.87" width="5.29" height="9.93" fill="#f2f2f2" /><rect x="22.5" y="88.46" width="4.41" height="0.59" fill="#b8b8b8" opacity=".75"/><rect x="22.5" y="90.51" width="4.41" height="1.18" fill="#cfcfcf" opacity=".75"/><rect x="22.5" y="92.57" width="4.41" height="1.18" fill="#b8b8b8" opacity=".75"/><rect x="22.06" y="94.49" width="5.29" height="3.31" fill="#3a3a3a" /><rect x="28.09" y="87.87" width="3.68" height="6.99" fill="#f2f2f2" /><rect x="28.53" y="88.46" width="2.79" height="1.18" fill="#cfcfcf" opacity=".75"/><rect x="28.53" y="90.51" width="2.79" height="1.18" fill="#cfcfcf" opacity=".75"/><rect x="28.09" y="93.01" width="3.68" height="1.84" fill="#3a3a3a" /><rect x="32.5" y="87.87" width="3.16" height="8.46" fill="#f2f2f2" /><rect x="32.94" y="88.46" width="2.28" height="0.59" fill="#cfcfcf" opacity=".75"/><rect x="32.94" y="90.51" width="2.28" height="0.59" fill="#cfcfcf" opacity=".75"/><rect x="32.94" y="92.57" width="2.28" height="1.18" fill="#9aa" opacity=".75"/><rect x="32.5" y="94.85" width="3.16" height="1.47" fill="#3a3a3a" /><rect x="38.97" y="87.87" width="5.29" height="9.93" fill="#f2f2f2" /><rect x="39.41" y="88.46" width="4.41" height="1.18" fill="#9aa" opacity=".75"/><rect x="39.41" y="90.51" width="4.41" height="0.59" fill="#777" opacity=".75"/><rect x="39.41" y="92.57" width="4.41" height="1.18" fill="#9aa" opacity=".75"/><rect x="38.97" y="94.49" width="5.29" height="3.31" fill="#3a3a3a" /><rect x="45" y="87.87" width="3.68" height="6.99" fill="#f2f2f2" /><rect x="45.44" y="88.46" width="2.79" height="0.59" fill="#777" opacity=".75"/><rect x="45.44" y="90.51" width="2.79" height="0.88" fill="#b8b8b8" opacity=".75"/><rect x="45" y="93.01" width="3.68" height="1.84" fill="#3a3a3a" /><rect x="49.41" y="87.87" width="3.16" height="8.46" fill="#f2f2f2" /><rect x="49.85" y="88.46" width="2.28" height="0.59" fill="#cfcfcf" opacity=".75"/><rect x="49.85" y="90.51" width="2.28" height="0.88" fill="#cfcfcf" opacity=".75"/><rect x="49.85" y="92.57" width="2.28" height="0.59" fill="#cfcfcf" opacity=".75"/><rect x="49.41" y="94.85" width="3.16" height="1.47" fill="#3a3a3a" /><rect x="56.99" y="87.87" width="5.29" height="9.93" fill="#f2f2f2" /><rect x="57.43" y="88.46" width="4.41" height="0.88" fill="#cfcfcf" opacity=".75"/><rect x="57.43" y="90.51" width="4.41" height="0.88" fill="#b8b8b8" opacity=".75"/><rect x="57.43" y="92.57" width="4.41" height="0.59" fill="#b8b8b8" opacity=".75"/><rect x="56.99" y="94.49" width="5.29" height="3.31" fill="#3a3a3a" /><rect x="63.01" y="87.87" width="3.68" height="6.99" fill="#f2f2f2" /><rect x="63.46" y="88.46" width="2.79" height="0.59" fill="#777" opacity=".75"/><rect x="63.46" y="90.51" width="2.79" height="0.59" fill="#cfcfcf" opacity=".75"/><rect x="63.01" y="93.01" width="3.68" height="1.84" fill="#3a3a3a" /><rect x="67.43" y="87.87" width="3.16" height="8.46" fill="#f2f2f2" /><rect x="67.87" y="88.46" width="2.28" height="0.59" fill="#777" opacity=".75"/><rect x="67.87" y="90.51" width="2.28" height="1.18" fill="#b8b8b8" opacity=".75"/><rect x="67.87" y="92.57" width="2.28" height="0.88" fill="#cfcfcf" opacity=".75"/><rect x="67.43" y="94.85" width="3.16" height="1.47" fill="#3a3a3a" /><rect x="75" y="87.87" width="5.29" height="9.93" fill="#f2f2f2" /><rect x="75.44" y="88.46" width="4.41" height="1.18" fill="#b8b8b8" opacity=".75"/><rect x="75.44" y="90.51" width="4.41" height="1.18" fill="#b8b8b8" opacity=".75"/><rect x="75.44" y="92.57" width="4.41" height="0.88" fill="#9aa" opacity=".75"/><rect x="75" y="94.49" width="5.29" height="3.31" fill="#3a3a3a" /><rect x="81.03" y="87.87" width="3.68" height="6.99" fill="#f2f2f2" /><rect x="81.47" y="88.46" width="2.79" height="0.88" fill="#9aa" opacity=".75"/><rect x="81.47" y="90.51" width="2.79" height="0.88" fill="#cfcfcf" opacity=".75"/><rect x="81.03" y="93.01" width="3.68" height="1.84" fill="#3a3a3a" /><rect x="85.44" y="87.87" width="3.16" height="8.46" fill="#f2f2f2" /><rect x="85.88" y="88.46" width="2.28" height="0.59" fill="#777" opacity=".75"/><rect x="85.88" y="90.51" width="2.28" height="0.88" fill="#777" opacity=".75"/><rect x="85.88" y="92.57" width="2.28" height="1.18" fill="#b8b8b8" opacity=".75"/><rect x="85.44" y="94.85" width="3.16" height="1.47" fill="#3a3a3a" /><rect x="76.47" y="88.01" width="2.94" height="1.47" fill="#e0405a" /><rect x="82.35" y="88.01" width="5.15" height="1.32" fill="#e0405a" /><rect x="94.12" y="87.87" width="5.29" height="9.93" fill="#2e2e2e" /><rect x="94.56" y="88.46" width="4.41" height="1.18" fill="#9aa" opacity=".75"/><rect x="94.56" y="90.51" width="4.41" height="0.59" fill="#9aa" opacity=".75"/><rect x="94.56" y="92.57" width="4.41" height="0.59" fill="#9aa" opacity=".75"/><rect x="94.12" y="94.49" width="5.29" height="3.31" fill="#3a3a3a" /><rect x="100.15" y="87.87" width="3.68" height="6.99" fill="#2e2e2e" /><rect x="100.59" y="88.46" width="2.79" height="1.18" fill="#777" opacity=".75"/><rect x="100.59" y="90.51" width="2.79" height="1.18" fill="#9aa" opacity=".75"/><rect x="100.15" y="93.01" width="3.68" height="1.84" fill="#3a3a3a" /><rect x="104.56" y="87.87" width="3.16" height="8.46" fill="#2e2e2e" /><rect x="105" y="88.46" width="2.28" height="1.18" fill="#777" opacity=".75"/><rect x="105" y="90.51" width="2.28" height="1.18" fill="#cfcfcf" opacity=".75"/><rect x="105" y="92.57" width="2.28" height="0.59" fill="#9aa" opacity=".75"/><rect x="104.56" y="94.85" width="3.16" height="1.47" fill="#3a3a3a" /><rect x="35.07" y="114.71" width="44.85" height="4.93" rx="1.6" fill="#fafafa"/><rect x="35.66" y="115.22" width="3.38" height="3.82" rx="1" fill="#2a8af0"/><rect x="42.28" y="116.54" width="1.47" height="1.32" fill="#888" opacity=".65"/><rect x="45.59" y="116.54" width="1.47" height="1.32" fill="#888" opacity=".65"/><rect x="48.9" y="116.54" width="1.47" height="1.32" fill="#888" opacity=".65"/><rect x="52.21" y="116.54" width="1.47" height="1.32" fill="#888" opacity=".65"/><rect x="55.51" y="116.54" width="1.47" height="1.32" fill="#888" opacity=".65"/><rect x="58.82" y="116.54" width="1.47" height="1.32" fill="#888" opacity=".65"/><rect x="62.13" y="116.54" width="1.47" height="1.32" fill="#888" opacity=".65"/><rect x="65.44" y="116.54" width="1.47" height="1.32" fill="#888" opacity=".65"/><rect x="68.75" y="116.54" width="1.47" height="1.32" fill="#888" opacity=".65"/><rect x="72.06" y="116.54" width="1.47" height="1.32" fill="#888" opacity=".65"/><rect x="75.37" y="116.54" width="1.47" height="1.32" fill="#888" opacity=".65"/></g></svg></div><div id="th7" style="position:absolute;left:1385.7px;top:1527.5px;width:121.4px;height:121.3px;overflow:hidden;background:#222"><svg width="121.4" height="121.3" viewBox="0 0 121.4 121.3" style="display:block"><defs><filter id="tb7" x="-5%" y="-5%" width="110%" height="110%"><feGaussianBlur color-interpolation-filters="sRGB" stdDeviation="0.35"/></filter><filter id="tc7" x="-20%" y="-20%" width="140%" height="140%"><feGaussianBlur color-interpolation-filters="sRGB" stdDeviation="2.5"/></filter></defs><g filter="url(#tb7)"><rect width="121.4" height="121.3" fill="#1e1e1e"/><rect x="0" y="0" width="120.96" height="3.31" fill="#1a1a1a" /><rect x="10.74" y="0.96" width="2.86" height="0.66" fill="#9a9a9a" opacity="0.6"/><rect x="7.13" y="0.96" width="2.29" height="0.66" fill="#9a9a9a" opacity="0.6"/><rect x="5.64" y="0.96" width="1.28" height="0.66" fill="#9a9a9a" opacity="0.6"/><rect x="38.57" y="0.96" width="1.2" height="0.66" fill="#9a9a9a" opacity="0.6"/><rect x="25.7" y="0.96" width="1.75" height="0.66" fill="#9a9a9a" opacity="0.6"/><rect x="18.9" y="0.96" width="1.83" height="0.66" fill="#9a9a9a" opacity="0.6"/><rect x="9.5" y="0.96" width="2.57" height="0.66" fill="#9a9a9a" opacity="0.6"/><rect x="5.8" y="0.96" width="1.25" height="0.66" fill="#9a9a9a" opacity="0.6"/><rect x="3.29" y="0.96" width="1.32" height="0.66" fill="#9a9a9a" opacity="0.6"/><rect x="17.26" y="0.96" width="2.73" height="0.66" fill="#9a9a9a" opacity="0.6"/><rect x="16.23" y="0.96" width="0.99" height="0.66" fill="#9a9a9a" opacity="0.6"/><rect x="11.88" y="0.96" width="2.92" height="0.66" fill="#9a9a9a" opacity="0.6"/><rect x="87.01" y="1.1" width="2.1" height="0.66" fill="#888" opacity="0.6"/><rect x="97.41" y="1.1" width="2.19" height="0.66" fill="#888" opacity="0.6"/><rect x="96.12" y="1.1" width="2.26" height="0.66" fill="#888" opacity="0.6"/><rect x="101.39" y="1.1" width="2.17" height="0.66" fill="#888" opacity="0.6"/><rect x="114.75" y="1.1" width="2.02" height="0.66" fill="#888" opacity="0.6"/><rect x="89.63" y="1.1" width="0.88" height="0.66" fill="#888" opacity="0.6"/><rect x="116.23" y="1.1" width="1.81" height="0.66" fill="#888" opacity="0.6"/><rect x="91.34" y="1.1" width="2.82" height="0.66" fill="#888" opacity="0.6"/><rect x="90.81" y="1.25" width="5.15" height="1.18" fill="#ccc" /><rect x="12.67" y="4.04" width="2.34" height="0.66" fill="#aaa" opacity="0.6"/><rect x="17.56" y="4.04" width="1.37" height="0.66" fill="#aaa" opacity="0.6"/><rect x="9.08" y="4.04" width="2.67" height="0.66" fill="#aaa" opacity="0.6"/><rect x="5.49" y="4.04" width="2.42" height="0.66" fill="#aaa" opacity="0.6"/><rect x="12.87" y="6.62" width="8.46" height="1.32" fill="#999" /><rect x="6.47" y="6.99" width="2.26" height="0.66" fill="#777" opacity="0.6"/><rect x="26.03" y="6.99" width="2.83" height="0.66" fill="#777" opacity="0.6"/><rect x="30.6" y="6.99" width="1.85" height="0.66" fill="#777" opacity="0.6"/><rect x="9.7" y="6.99" width="1.07" height="0.66" fill="#777" opacity="0.6"/><rect x="20.41" y="6.99" width="1.86" height="0.66" fill="#777" opacity="0.6"/><rect x="5.62" y="6.99" width="2.73" height="0.66" fill="#777" opacity="0.6"/><rect x="19.73" y="6.99" width="2.28" height="0.66" fill="#777" opacity="0.6"/><rect x="10.43" y="6.99" width="1.27" height="0.66" fill="#777" opacity="0.6"/><rect x="1.1" y="25" width="111.03" height="62.13" fill="#eeeeee" /><rect x="0.96" y="24.78" width="111.32" height="0.44" fill="#fff" /><rect x="0.96" y="86.76" width="111.32" height="0.51" fill="#fff" /><text x="51.1" y="58.01" font-family="Liberation Sans, sans-serif" font-weight="700" font-size="4.6" fill="#d23a44" textLength="11.03" lengthAdjust="spacingAndGlyphs">ж 0:п</text><rect x="112.5" y="0" width="8.82" height="120.96" fill="#151515" /><rect x="113.97" y="11.03" width="5.88" height="2.94" fill="#5a4ac0" /><rect x="114.19" y="22.28" width="2.06" height="2.21" fill="#8a6cf0" /><rect x="114.19" y="24.93" width="2.06" height="2.21" fill="#8a6cf0" /><rect x="114.19" y="27.57" width="2.06" height="2.21" fill="#8a6cf0" /><rect x="116.69" y="22.28" width="2.06" height="2.21" fill="#8a6cf0" /><rect x="116.69" y="24.93" width="2.06" height="2.21" fill="#8a6cf0" /><rect x="116.69" y="27.57" width="2.06" height="2.21" fill="#8a6cf0" /><rect x="119.19" y="22.28" width="2.06" height="2.21" fill="#8a6cf0" /><rect x="119.19" y="24.93" width="2.06" height="2.21" fill="#8a6cf0" /><rect x="119.19" y="27.57" width="2.06" height="2.21" fill="#8a6cf0" /><rect x="114.34" y="4.04" width="2.98" height="0.81" fill="#8a8a8a" opacity=".5"/><rect x="114.34" y="6.25" width="4.08" height="0.81" fill="#8a8a8a" opacity=".5"/><rect x="114.34" y="9.19" width="3.82" height="0.81" fill="#8a8a8a" opacity=".5"/><rect x="114.34" y="15.07" width="4.34" height="0.81" fill="#8a8a8a" opacity=".5"/><rect x="114.34" y="18.75" width="4.19" height="0.81" fill="#8a8a8a" opacity=".5"/><rect x="114.34" y="32.35" width="5.7" height="0.81" fill="#8a8a8a" opacity=".5"/><rect x="114.34" y="35.29" width="5.89" height="0.81" fill="#8a8a8a" opacity=".5"/><rect x="114.34" y="37.87" width="3.52" height="0.81" fill="#8a8a8a" opacity=".5"/><rect x="114.34" y="83.09" width="4.25" height="0.81" fill="#8a8a8a" opacity=".5"/><rect x="114.34" y="86.03" width="3.49" height="0.81" fill="#8a8a8a" opacity=".5"/><rect x="114.34" y="88.97" width="5.14" height="0.81" fill="#8a8a8a" opacity=".5"/><rect x="114.34" y="91.91" width="6.17" height="0.81" fill="#8a8a8a" opacity=".5"/><rect x="114.34" y="94.49" width="3.61" height="0.81" fill="#8a8a8a" opacity=".5"/><rect x="114.34" y="98.16" width="5.48" height="0.81" fill="#8a8a8a" opacity=".5"/><rect x="114.34" y="101.1" width="3.93" height="0.81" fill="#8a8a8a" opacity=".5"/><rect x="114.34" y="104.04" width="2.98" height="0.81" fill="#8a8a8a" opacity=".5"/><rect x="114.34" y="106.99" width="5.47" height="0.81" fill="#8a8a8a" opacity=".5"/><rect x="114.34" y="109.93" width="4.07" height="0.81" fill="#8a8a8a" opacity=".5"/><rect x="114.34" y="112.87" width="3.5" height="0.81" fill="#8a8a8a" opacity=".5"/><rect x="114.34" y="115.81" width="4.38" height="0.81" fill="#8a8a8a" opacity=".5"/><rect x="114.34" y="118.01" width="3.71" height="0.81" fill="#8a8a8a" opacity=".5"/><rect x="0" y="103.31" width="112.5" height="17.65" fill="#171717" /><rect x="22.95" y="103.9" width="1.72" height="0.66" fill="#9a9a9a" opacity="0.55"/><rect x="23.35" y="103.9" width="2.03" height="0.66" fill="#9a9a9a" opacity="0.55"/><rect x="16.7" y="103.9" width="0.95" height="0.66" fill="#9a9a9a" opacity="0.55"/><rect x="6.23" y="103.9" width="0.97" height="0.66" fill="#9a9a9a" opacity="0.55"/><rect x="28.65" y="103.9" width="1.53" height="0.66" fill="#9a9a9a" opacity="0.55"/><rect x="43.41" y="103.9" width="1.85" height="0.66" fill="#9a9a9a" opacity="0.55"/><rect x="38.29" y="103.9" width="2.9" height="0.66" fill="#9a9a9a" opacity="0.55"/><rect x="5.08" y="103.9" width="0.77" height="0.66" fill="#9a9a9a" opacity="0.55"/><rect x="9.06" y="103.9" width="1.59" height="0.66" fill="#9a9a9a" opacity="0.55"/><rect x="31.37" y="103.9" width="2.38" height="0.66" fill="#9a9a9a" opacity="0.55"/><rect x="19.93" y="103.9" width="2.86" height="0.66" fill="#9a9a9a" opacity="0.55"/><rect x="1.99" y="103.9" width="2.58" height="0.66" fill="#9a9a9a" opacity="0.55"/><rect x="12.65" y="103.9" width="2.67" height="0.66" fill="#9a9a9a" opacity="0.55"/><rect x="3.54" y="103.9" width="2.86" height="0.66" fill="#9a9a9a" opacity="0.55"/><rect x="85.39" y="106.25" width="2.92" height="0.59" fill="#8a8a8a" opacity="0.5"/><rect x="66" y="106.25" width="1.13" height="0.59" fill="#8a8a8a" opacity="0.5"/><rect x="108.14" y="106.25" width="1.71" height="0.59" fill="#8a8a8a" opacity="0.5"/><rect x="12.32" y="106.25" width="2.07" height="0.59" fill="#8a8a8a" opacity="0.5"/><rect x="57.05" y="106.25" width="1.78" height="0.59" fill="#8a8a8a" opacity="0.5"/><rect x="20.01" y="106.25" width="1" height="0.59" fill="#8a8a8a" opacity="0.5"/><rect x="66.08" y="106.25" width="1.73" height="0.59" fill="#8a8a8a" opacity="0.5"/><rect x="16.98" y="106.25" width="1.7" height="0.59" fill="#8a8a8a" opacity="0.5"/><rect x="81.73" y="106.25" width="2.31" height="0.59" fill="#8a8a8a" opacity="0.5"/><rect x="54.25" y="106.25" width="1.6" height="0.59" fill="#8a8a8a" opacity="0.5"/><rect x="42.31" y="106.25" width="1.23" height="0.59" fill="#8a8a8a" opacity="0.5"/><rect x="24.66" y="106.25" width="1.72" height="0.59" fill="#8a8a8a" opacity="0.5"/><rect x="15" y="106.25" width="2.33" height="0.59" fill="#8a8a8a" opacity="0.5"/><rect x="79.87" y="106.25" width="2.08" height="0.59" fill="#8a8a8a" opacity="0.5"/><rect x="5.75" y="106.25" width="1.54" height="0.59" fill="#8a8a8a" opacity="0.5"/><rect x="50.05" y="106.25" width="0.94" height="0.59" fill="#8a8a8a" opacity="0.5"/><rect x="107.92" y="106.25" width="2.4" height="0.59" fill="#8a8a8a" opacity="0.5"/><rect x="57.63" y="106.25" width="2.29" height="0.59" fill="#8a8a8a" opacity="0.5"/><rect x="25" y="106.25" width="1.24" height="0.59" fill="#8a8a8a" opacity="0.5"/><rect x="60.14" y="106.25" width="2.38" height="0.59" fill="#8a8a8a" opacity="0.5"/><rect x="73.27" y="106.25" width="0.75" height="0.59" fill="#8a8a8a" opacity="0.5"/><rect x="69.59" y="106.25" width="2.74" height="0.59" fill="#8a8a8a" opacity="0.5"/><rect x="83.65" y="106.25" width="2.78" height="0.59" fill="#8a8a8a" opacity="0.5"/><rect x="109.42" y="106.25" width="1.23" height="0.59" fill="#8a8a8a" opacity="0.5"/><rect x="35.35" y="106.25" width="1.94" height="0.59" fill="#8a8a8a" opacity="0.5"/><rect x="108.89" y="106.25" width="1.55" height="0.59" fill="#8a8a8a" opacity="0.5"/><rect x="105.07" y="106.25" width="2.61" height="0.59" fill="#8a8a8a" opacity="0.5"/><rect x="59.11" y="106.25" width="2.11" height="0.59" fill="#8a8a8a" opacity="0.5"/><rect x="44.49" y="108.6" width="66.91" height="1.76" fill="#262a30" /><rect x="45.22" y="108.9" width="6.25" height="1.18" fill="#3a3f48" /><rect x="52.57" y="108.9" width="6.25" height="1.18" fill="#3a3f48" /><rect x="59.93" y="108.9" width="6.25" height="1.18" fill="#3a3f48" /><rect x="67.28" y="108.9" width="6.25" height="1.18" fill="#3a3f48" /><rect x="74.63" y="108.9" width="6.25" height="1.18" fill="#3a3f48" /><rect x="81.99" y="108.9" width="6.25" height="1.18" fill="#3a3f48" /><rect x="89.34" y="108.9" width="6.25" height="1.18" fill="#3a3f48" /><rect x="96.69" y="108.9" width="6.25" height="1.18" fill="#3a3f48" /><rect x="104.04" y="108.9" width="6.25" height="1.18" fill="#3a3f48" /><rect x="44.49" y="108.6" width="1.18" height="1.76" fill="#4a86e0" /><rect x="43.75" y="112.57" width="68.01" height="1.47" fill="#5f9550" /><rect x="43.75" y="116.99" width="68.01" height="1.91" fill="#a3492a" /><rect x="38.4" y="111.4" width="2.46" height="0.66" fill="#9a9a9a" opacity="0.5"/><rect x="12.63" y="111.4" width="2.6" height="0.66" fill="#9a9a9a" opacity="0.5"/><rect x="8.73" y="111.4" width="1.55" height="0.66" fill="#9a9a9a" opacity="0.5"/><rect x="38.46" y="111.4" width="2.6" height="0.66" fill="#9a9a9a" opacity="0.5"/><rect x="13.26" y="111.4" width="1.38" height="0.66" fill="#9a9a9a" opacity="0.5"/><rect x="24.99" y="111.4" width="2.59" height="0.66" fill="#9a9a9a" opacity="0.5"/><rect x="27.77" y="111.4" width="2.8" height="0.66" fill="#9a9a9a" opacity="0.5"/><rect x="29.47" y="111.4" width="2.55" height="0.66" fill="#9a9a9a" opacity="0.5"/><rect x="24.68" y="111.4" width="1.53" height="0.66" fill="#9a9a9a" opacity="0.5"/><rect x="17.76" y="111.4" width="1.82" height="0.66" fill="#9a9a9a" opacity="0.5"/><rect x="21.72" y="111.4" width="2.58" height="0.66" fill="#9a9a9a" opacity="0.5"/><rect x="11.58" y="111.4" width="0.89" height="0.66" fill="#9a9a9a" opacity="0.5"/><rect x="29.67" y="114.34" width="1.33" height="0.66" fill="#8a8a8a" opacity="0.5"/><rect x="17.46" y="114.34" width="0.99" height="0.66" fill="#8a8a8a" opacity="0.5"/><rect x="33.42" y="114.34" width="1.34" height="0.66" fill="#8a8a8a" opacity="0.5"/><rect x="12.47" y="114.34" width="2.51" height="0.66" fill="#8a8a8a" opacity="0.5"/><rect x="20.75" y="114.34" width="1.35" height="0.66" fill="#8a8a8a" opacity="0.5"/><rect x="35.72" y="114.34" width="1.64" height="0.66" fill="#8a8a8a" opacity="0.5"/><rect x="15.19" y="114.34" width="2.86" height="0.66" fill="#8a8a8a" opacity="0.5"/><rect x="31.9" y="114.34" width="2.38" height="0.66" fill="#8a8a8a" opacity="0.5"/><rect x="10.84" y="114.34" width="2.53" height="0.66" fill="#8a8a8a" opacity="0.5"/><rect x="24.35" y="114.34" width="2.57" height="0.66" fill="#8a8a8a" opacity="0.5"/><rect x="15.44" y="114.34" width="2.46" height="0.66" fill="#8a8a8a" opacity="0.5"/><rect x="32.02" y="114.34" width="1.59" height="0.66" fill="#8a8a8a" opacity="0.5"/><rect x="26.62" y="117.28" width="2.46" height="0.66" fill="#8a8a8a" opacity="0.5"/><rect x="39.8" y="117.28" width="2.77" height="0.66" fill="#8a8a8a" opacity="0.5"/><rect x="31.74" y="117.28" width="1.04" height="0.66" fill="#8a8a8a" opacity="0.5"/><rect x="24.89" y="117.28" width="2.25" height="0.66" fill="#8a8a8a" opacity="0.5"/><rect x="4.5" y="117.28" width="1.76" height="0.66" fill="#8a8a8a" opacity="0.5"/><rect x="34.96" y="117.28" width="2.73" height="0.66" fill="#8a8a8a" opacity="0.5"/><rect x="37.16" y="117.28" width="0.94" height="0.66" fill="#8a8a8a" opacity="0.5"/><rect x="24.76" y="117.28" width="2.64" height="0.66" fill="#8a8a8a" opacity="0.5"/><rect x="26.54" y="117.28" width="1.44" height="0.66" fill="#8a8a8a" opacity="0.5"/><rect x="2.61" y="117.28" width="2.76" height="0.66" fill="#8a8a8a" opacity="0.5"/><rect x="34.58" y="117.28" width="2.18" height="0.66" fill="#8a8a8a" opacity="0.5"/><rect x="15.38" y="117.28" width="2.56" height="0.66" fill="#8a8a8a" opacity="0.5"/><rect x="1.84" y="114.34" width="6.62" height="1.62" fill="#2a3a80" /><rect x="54.04" y="119.63" width="9.56" height="0.88" fill="#556" /><rect x="0" y="120.59" width="120.96" height="0.51" fill="#a8c8e8" opacity=".5"/></g></svg></div>
</div>
</body></html>
